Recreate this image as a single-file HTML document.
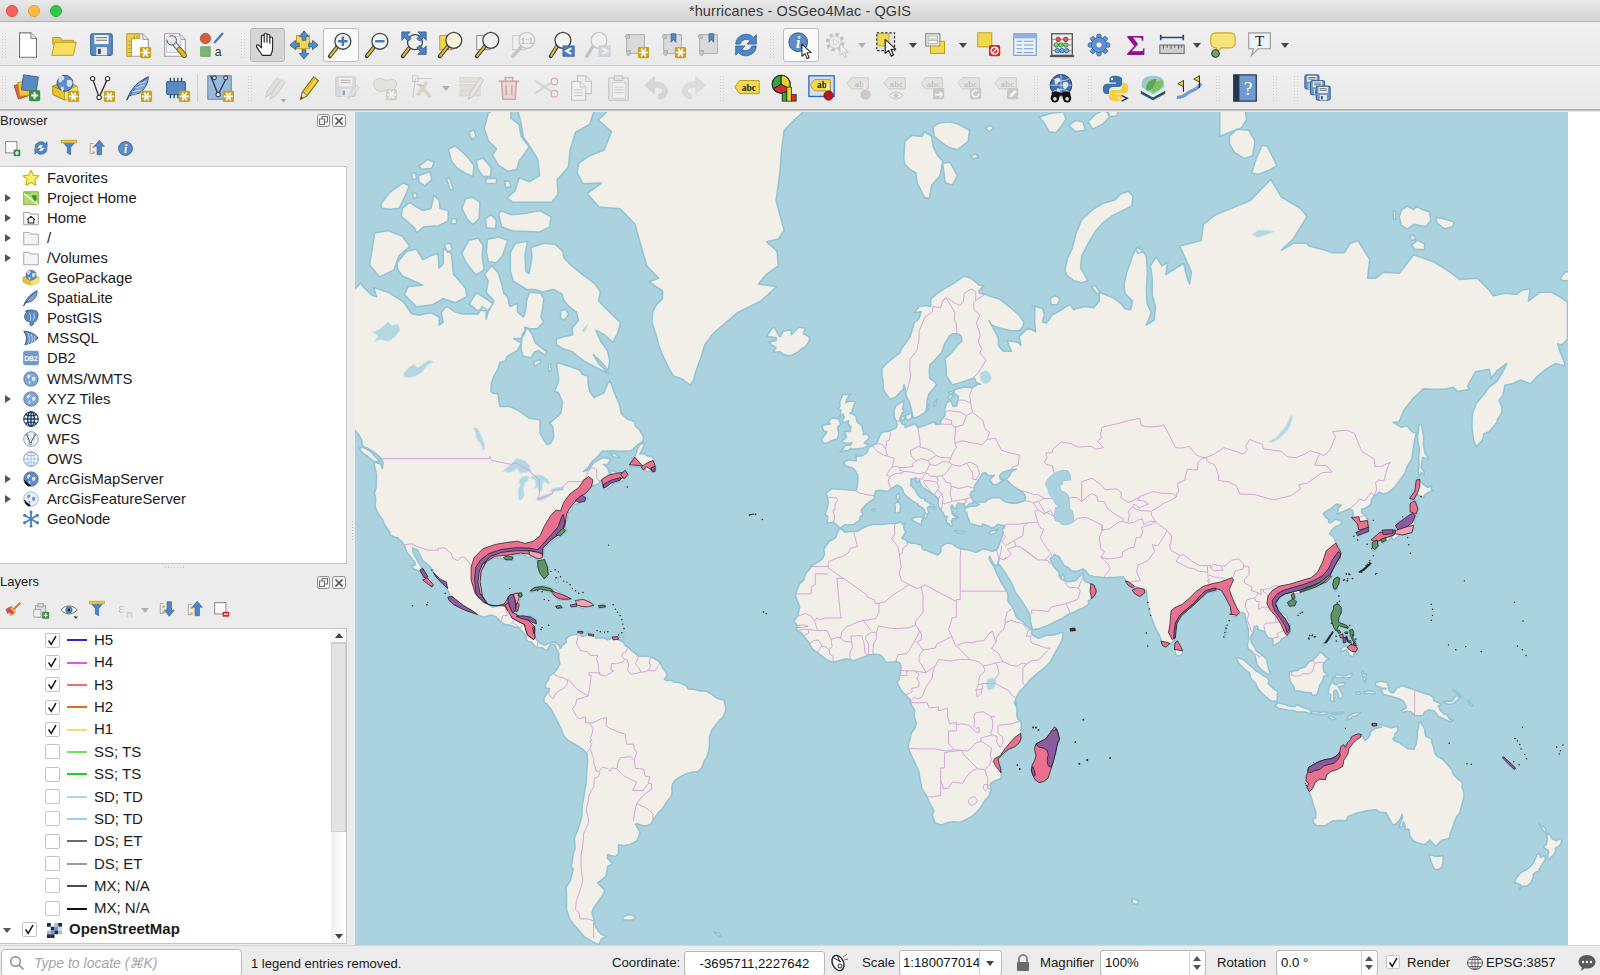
<!DOCTYPE html>
<html lang="en"><head><meta charset="utf-8"><title>*hurricanes - OSGeo4Mac - QGIS</title>
<style>
*{box-sizing:border-box;margin:0;padding:0}
html,body{width:1600px;height:975px;overflow:hidden;background:#ececec;font-family:"Liberation Sans",sans-serif;color:#111}
#app{position:relative;width:1600px;height:975px;overflow:hidden;background:#ececec}
.abs{position:absolute}
#title{left:0;top:0;width:1600px;height:22px;background:linear-gradient(#e9e9e9,#d3d3d3);border-bottom:1px solid #b4b4b4;text-align:center;font-size:14.5px;line-height:22px;color:#3a3a3a;letter-spacing:.1px}
.tl{position:absolute;top:5px;width:12px;height:12px;border-radius:50%}
#tb1{left:0;top:23px;width:1600px;height:43px;background:linear-gradient(#f1f1f1,#e9e9e9);border-bottom:1px solid #d0d0d0}
#tb2{left:0;top:67px;width:1600px;height:42px;background:linear-gradient(#f0f0f0,#e8e8e8)}
#tbline{left:0;top:109px;width:1600px;height:2px;background:linear-gradient(#a8a8a8,#c9c9c9)}
.ic{position:absolute;width:32px;height:32px}
.btn{position:absolute;border:1px solid #bdbdbd;border-radius:3px}
.hd{position:absolute;width:6px;height:26px;background-image:radial-gradient(circle,#cfcfcf 0.7px,transparent 1px);background-size:3px 3px}
.dd{position:absolute;width:0;height:0;border-left:4px solid transparent;border-right:4px solid transparent;border-top:5px solid #444}
.dd.g{border-top-color:#b0b0b0}
.ptitle{position:absolute;left:0px;font-size:13px;color:#222}
.tree{position:absolute;background:#fff;border:1px solid #c6c6c6;border-left:none}
.row{position:absolute;left:47px;font-size:14.8px;line-height:20px;color:#1a1a1a;white-space:nowrap}
.arr{position:absolute;left:5px;width:0;height:0;border-top:4px solid transparent;border-bottom:4px solid transparent;border-left:6px solid #555}
.lrow{position:absolute;left:94px;font-size:15px;line-height:20px;color:#1a1a1a;white-space:nowrap}
.cb{position:absolute;left:45px;width:15px;height:15px;border:1px solid #c4c4c4;border-radius:2px;background:#fff}
.ln{position:absolute;left:67px;width:20px;height:1.5px}
#status{left:0;top:945px;width:1600px;height:30px;background:#ececec;border-top:1px solid #d6d6d6;font-size:13.5px}
.st{position:absolute;top:10px;font-size:13.2px;line-height:16px;white-space:nowrap;color:#1a1a1a}
.inp{position:absolute;background:#fff;border:1px solid #b9b9b9;border-radius:3px;font-size:13.2px;line-height:20px;white-space:nowrap}
</style></head><body><div id="app">
<div id="title" class="abs"><span class="tl" style="left:6px;background:#fc605c;border:.5px solid #df4744"></span><span class="tl" style="left:28px;background:#fdbc40;border:.5px solid #de9f34"></span><span class="tl" style="left:50px;background:#34c84a;border:.5px solid #27aa35"></span>*hurricanes - OSGeo4Mac - QGIS</div>
<div id="tb1" class="abs"></div><div id="tb2" class="abs"></div><div id="tbline" class="abs"></div>
<div class="hd" style="left:1px;top:31.799999999999997px"></div>
<div class="hd" style="left:1px;top:75.3px"></div>
<div class="btn" style="left:250px;top:27.799999999999997px;width:35px;height:34px;background:#d6d6d6;border-color:#b8b8b8"></div>
<div class="btn" style="left:323px;top:27.799999999999997px;width:36px;height:34px;background:#fafafa"></div>
<div class="btn" style="left:783px;top:27.799999999999997px;width:36px;height:34px;background:#fafafa"></div>
<svg class="ic" style="left:13.0px;top:29.8px;width:30px;height:30px" viewBox="0 0 32 32"><path d="M7 3h12l6 6v20h-18z" fill="#fff" stroke="#777" stroke-width="1.2"/><path d="M19 3v6h6" fill="#e4e4e4" stroke="#777" stroke-width="1"/></svg>
<svg class="ic" style="left:49.0px;top:29.8px;width:30px;height:30px" viewBox="0 0 32 32"><path d="M4 8h8l2 3h12v4H4z" fill="#e9c93a" stroke="#b8991c" stroke-width="1"/><path d="M3 27l3-14h23l-3 14z" fill="#f7df63" stroke="#b8991c" stroke-width="1"/></svg>
<svg class="ic" style="left:86.0px;top:29.8px;width:30px;height:30px" viewBox="0 0 32 32"><rect x="5" y="4" width="23" height="23" rx="2" fill="#5a8ac2" stroke="#3b689f" stroke-width="1.2"/><rect x="8.91" y="5.38" width="15.180000000000001" height="9.66" fill="#f3f3f3"/><line x1="10.75" y1="8.14" x2="22.25" y2="8.14" stroke="#666" stroke-width="1"/><line x1="10.75" y1="10.899999999999999" x2="22.25" y2="10.899999999999999" stroke="#666" stroke-width="1"/><rect x="10.98" y="18.259999999999998" width="11.5" height="8.74" fill="#e8e8e8"/><rect x="12.82" y="20.099999999999998" width="2.99" height="5.52" fill="#2d4f7d"/></svg>
<svg class="ic" style="left:123.0px;top:29.8px;width:30px;height:30px" viewBox="0 0 32 32"><path d="M8 4h13l6 6v18h-19z" fill="#fff" stroke="#999" stroke-width="1.2"/><path d="M21 4v6h6" fill="#e4e4e4" stroke="#999" stroke-width="1"/><path d="M4 4h14v5H9v19H4z" fill="#f0d050" stroke="#b8991c" stroke-width="1"/><path d="M6 12h2M6 16h2M6 20h2M6 24h2M12 6v2M15 6v2" stroke="#9c8216" stroke-width="1"/><rect x="18" y="18" width="12" height="12" rx="1.5" fill="#c9a21f"/><g stroke="#fff" stroke-width="1.8" stroke-linecap="round"><line x1="19.9" y1="24.0" x2="28.1" y2="24.0"/><line x1="22.0" y1="20.5" x2="26.0" y2="27.5"/><line x1="26.0" y1="20.5" x2="22.0" y2="27.5"/></g></svg>
<svg class="ic" style="left:160.0px;top:29.8px;width:30px;height:30px" viewBox="0 0 32 32"><path d="M5 4h16l6 6v18h-22z" fill="#fff" stroke="#999" stroke-width="1.2"/><path d="M21 4v6h6" fill="#e4e4e4" stroke="#999" stroke-width="1"/><rect x="7" y="7" width="15" height="17" fill="#eef2fb" stroke="#b8c6e6" stroke-width="1"/><line x1="14" y1="13" x2="26" y2="27" stroke="#4a4a4a" stroke-width="5.4" stroke-linecap="round"/><line x1="14" y1="13" x2="26" y2="27" stroke="#e6e6e6" stroke-width="3.6" stroke-linecap="round"/><line x1="20.500" y1="20.600" x2="26" y2="27" stroke="#7b6312" stroke-width="5.400" stroke-linecap="round"/><line x1="20.500" y1="20.600" x2="26" y2="27" stroke="#e3b82c" stroke-width="3.600" stroke-linecap="round"/><circle cx="12.500" cy="11" r="5" fill="#e6e6e6" stroke="#4a4a4a" stroke-width="1"/><path d="M12.500 11l-6-1l2-6z" fill="#eef2fb"/></svg>
<svg class="ic" style="left:197.0px;top:29.8px;width:30px;height:30px" viewBox="0 0 32 32"><circle cx="9" cy="9" r="5.5" fill="#d2603a" stroke="#a9431f" stroke-width=".8"/><rect x="4" y="18" width="10" height="10" fill="#7fb37a" stroke="#5a9456" stroke-width=".8"/><line x1="19" y1="13" x2="27" y2="4" stroke="#4b7dbd" stroke-width="2.6" stroke-linecap="round"/><text x="19" y="28" font-size="13" font-family="Liberation Sans,sans-serif" fill="#333">a</text></svg>
<svg class="ic" style="left:252.0px;top:29.8px;width:30px;height:30px" viewBox="0 0 32 32"><path d="M11 27c-2-3-5-7-6-9c-1-2 1-3 3-1l2 2V7c0-2 3-2 3 0v6V5c0-2 3-2 3 0v8V6c0-2 3-2 3 0v8V9c0-2 3-2 3 0v10c0 4-1 6-2 8z" fill="#fff" stroke="#222" stroke-width="1.2" stroke-linejoin="round"/></svg>
<svg class="ic" style="left:289.0px;top:29.8px;width:30px;height:30px" viewBox="0 0 32 32"><rect x="8" y="6" width="14" height="14" fill="#f3d94a" stroke="#b8991c" stroke-width="1"/><g fill="#5a8ac2" stroke="#2f5f9c" stroke-width=".9"><path d="M16 1l5 6h-3v4h-4V7h-3z"/><path d="M16 31l5-6h-3v-4h-4v4h-3z"/><path d="M1 16l6-5v3h4v4H7v3z"/><path d="M31 16l-6-5v3h-4v4h4v3z"/></g></svg>
<svg class="ic" style="left:326.0px;top:29.8px;width:30px;height:30px" viewBox="0 0 32 32"><line x1="12.05" y1="17.95" x2="4" y2="28" stroke="#3a3a3a" stroke-width="4.2" stroke-linecap="round"/><line x1="11.05" y1="18.95" x2="4.5" y2="27.5" stroke="#e3b82c" stroke-width="2.2" stroke-linecap="round"/><circle cx="18" cy="12" r="8.5" fill="#f4f4f0" stroke="#444" stroke-width="1.4"/><path d="M18 7v10M13 12h10" stroke="#3f78be" stroke-width="2.6"/></svg>
<svg class="ic" style="left:363.0px;top:29.8px;width:30px;height:30px" viewBox="0 0 32 32"><line x1="12.05" y1="17.95" x2="4" y2="28" stroke="#3a3a3a" stroke-width="4.2" stroke-linecap="round"/><line x1="11.05" y1="18.95" x2="4.5" y2="27.5" stroke="#e3b82c" stroke-width="2.2" stroke-linecap="round"/><circle cx="18" cy="12" r="8.5" fill="#f4f4f0" stroke="#444" stroke-width="1.4"/><path d="M13 12h10" stroke="#3f78be" stroke-width="2.6"/></svg>
<svg class="ic" style="left:399.0px;top:29.8px;width:30px;height:30px" viewBox="0 0 32 32"><line x1="11.4" y1="18.6" x2="4" y2="28" stroke="#3a3a3a" stroke-width="4.2" stroke-linecap="round"/><line x1="10.4" y1="19.6" x2="4.5" y2="27.5" stroke="#e3b82c" stroke-width="2.2" stroke-linecap="round"/><circle cx="17" cy="13" r="8" fill="#f0f0ee" stroke="#444" stroke-width="1.4"/><g fill="#4c80c0" stroke="#2c5a96" stroke-width=".8"><path d="M3 2h9l-3 3l4 4l-3 3l-4-4l-3 3z"/><path d="M29 2h-9l3 3l-4 4l3 3l4-4l3 3z"/><path d="M29 26h-9l3-3l-4-4l3-3l4 4l3-3z"/></g></svg>
<svg class="ic" style="left:436.0px;top:29.8px;width:30px;height:30px" viewBox="0 0 32 32"><rect x="4" y="6" width="14" height="15" fill="#f3d94a" stroke="#b8991c" stroke-width="1"/><line x1="13.05" y1="16.95" x2="4" y2="28" stroke="#3a3a3a" stroke-width="4.2" stroke-linecap="round"/><line x1="12.05" y1="17.95" x2="4.5" y2="27.5" stroke="#e3b82c" stroke-width="2.2" stroke-linecap="round"/><circle cx="19" cy="11" r="8.5" fill="#f6f2d8" stroke="#444" stroke-width="1.4"/></svg>
<svg class="ic" style="left:473.0px;top:29.8px;width:30px;height:30px" viewBox="0 0 32 32"><rect x="4" y="6" width="14" height="15" fill="#f3f3f3" stroke="#888" stroke-width="1"/><line x1="13.05" y1="16.95" x2="4" y2="28" stroke="#3a3a3a" stroke-width="4.2" stroke-linecap="round"/><line x1="12.05" y1="17.95" x2="4.5" y2="27.5" stroke="#e3b82c" stroke-width="2.2" stroke-linecap="round"/><circle cx="19" cy="11" r="8.5" fill="#efefef" stroke="#444" stroke-width="1.4"/></svg>
<svg class="ic" style="left:509.0px;top:29.8px;width:30px;height:30px" viewBox="0 0 32 32"><g opacity=".45"><rect x="4" y="6" width="14" height="15" fill="#f3f3f3" stroke="#999" stroke-width="1"/><line x1="13" y1="18" x2="4" y2="28" stroke="#999" stroke-width="3.6" stroke-linecap="round"/><circle cx="19" cy="11" r="8.5" fill="#f2f2f2" stroke="#999" stroke-width="1.4"/><text x="19" y="15" font-size="9.5" font-weight="bold" font-family="Liberation Sans,sans-serif" fill="#888" text-anchor="middle">1:1</text></g></svg>
<svg class="ic" style="left:547.0px;top:29.8px;width:30px;height:30px" viewBox="0 0 32 32"><line x1="11.05" y1="16.95" x2="4" y2="28" stroke="#3a3a3a" stroke-width="4.2" stroke-linecap="round"/><line x1="10.05" y1="17.95" x2="4.5" y2="27.5" stroke="#e3b82c" stroke-width="2.2" stroke-linecap="round"/><circle cx="17" cy="11" r="8.5" fill="#f4f4f0" stroke="#444" stroke-width="1.4"/><rect x="17" y="17" width="12" height="11" fill="#4c80c0" stroke="#2c5a96" stroke-width=".8"/><path d="M26 19.5l-5.5 3l5.5 3" fill="none" stroke="#fff" stroke-width="2"/></svg>
<svg class="ic" style="left:583.0px;top:29.8px;width:30px;height:30px" viewBox="0 0 32 32"><g opacity=".4"><line x1="11" y1="17" x2="4" y2="28" stroke="#888" stroke-width="3.6" stroke-linecap="round"/><circle cx="17" cy="11" r="8.5" fill="#f4f4f4" stroke="#888" stroke-width="1.4"/><rect x="17" y="17" width="12" height="11" fill="#aab4c4" stroke="#8894a6" stroke-width=".8"/><path d="M20.5 19.5l5.5 3l-5.5 3" fill="none" stroke="#fff" stroke-width="2"/></g></svg>
<svg class="ic" style="left:621.0px;top:29.8px;width:30px;height:30px" viewBox="0 0 32 32"><path d="M6 5h19v20H10v-3H6z" fill="#dadada" stroke="#aaa" stroke-width="1"/><path d="M6 5c-2 0-2 4 0 4h3V5z" fill="#c4c4c4" stroke="#aaa" stroke-width=".8"/><path d="M10 25c0 3 -4 3 -4 0v-3h4z" fill="#c4c4c4" stroke="#aaa" stroke-width=".8"/><rect x="18" y="18" width="12" height="12" rx="1.5" fill="#c9a21f"/><g stroke="#fff" stroke-width="1.8" stroke-linecap="round"><line x1="19.9" y1="24.0" x2="28.1" y2="24.0"/><line x1="22.0" y1="20.5" x2="26.0" y2="27.5"/><line x1="26.0" y1="20.5" x2="22.0" y2="27.5"/></g></svg>
<svg class="ic" style="left:658.0px;top:29.8px;width:30px;height:30px" viewBox="0 0 32 32"><path d="M6 5h19v20H10v-3H6z" fill="#dadada" stroke="#aaa" stroke-width="1"/><path d="M6 5c-2 0-2 4 0 4h3V5z" fill="#c4c4c4" stroke="#aaa" stroke-width=".8"/><path d="M10 25c0 3 -4 3 -4 0v-3h4z" fill="#c4c4c4" stroke="#aaa" stroke-width=".8"/><path d="M14 4h5v9l-2.5-3l-2.5 3z" fill="#5a8ac2" stroke="#2c5a96" stroke-width=".8"/><rect x="18" y="18" width="12" height="12" rx="1.5" fill="#c9a21f"/><g stroke="#fff" stroke-width="1.8" stroke-linecap="round"><line x1="19.9" y1="24.0" x2="28.1" y2="24.0"/><line x1="22.0" y1="20.5" x2="26.0" y2="27.5"/><line x1="26.0" y1="20.5" x2="22.0" y2="27.5"/></g></svg>
<svg class="ic" style="left:694.0px;top:29.8px;width:30px;height:30px" viewBox="0 0 32 32"><path d="M6 5h19v20H10v-3H6z" fill="#dadada" stroke="#aaa" stroke-width="1"/><path d="M6 5c-2 0-2 4 0 4h3V5z" fill="#c4c4c4" stroke="#aaa" stroke-width=".8"/><path d="M10 25c0 3 -4 3 -4 0v-3h4z" fill="#c4c4c4" stroke="#aaa" stroke-width=".8"/><path d="M16 4h5v9l-2.5-3l-2.5 3z" fill="#5a8ac2" stroke="#2c5a96" stroke-width=".8"/></svg>
<svg class="ic" style="left:731.0px;top:29.8px;width:30px;height:30px" viewBox="0 0 32 32"><g fill="#4c86c8" stroke="#2c5a96" stroke-width=".8"><path d="M5 15a11 11 0 0 1 19-7l3-3v10H17l3.5-3.5a6.5 6.5 0 0 0-10.5 3.500z"/><path d="M27 17a11 11 0 0 1-19 7l-3 3V17h10l-3.500 3.500a6.500 6.500 0 0 0 10.500-3.500z"/></g></svg>
<svg class="ic" style="left:786.0px;top:29.8px;width:30px;height:30px" viewBox="0 0 32 32"><circle cx="13" cy="13" r="10" fill="#5d8cc6" stroke="#2f5486" stroke-width="1"/><text x="13" y="19" font-size="17" font-style="italic" font-weight="bold" font-family="Liberation Serif,serif" fill="#fff" text-anchor="middle">i</text><path transform="translate(17,15) scale(1.0)" d="M0 0l0 13l3.2-2.8l2.3 5.3l2.2-1l-2.3-5.2l4.3-0.2z" fill="#fff" stroke="#222" stroke-width="1.1" stroke-linejoin="round"/></svg>
<svg class="ic" style="left:823.0px;top:29.8px;width:30px;height:30px" viewBox="0 0 32 32"><g opacity=".5"><circle cx="13" cy="13" r="8" fill="#e8e8e8" stroke="#999" stroke-width="4" stroke-dasharray="3.5 2.800"/><circle cx="13" cy="13" r="6.500" fill="#ececec" stroke="#aaa" stroke-width="1"/><path d="M11 9.500l6 3.500l-6 3.500z" fill="#fff" stroke="#aaa" stroke-width=".8"/><path d="M18 15l0 12l3-2.500l2 5l2-1l-2-5l4 0z" fill="#f6f6f6" stroke="#999" stroke-width="1"/></g></svg>
<svg class="ic" style="left:873.0px;top:29.8px;width:30px;height:30px" viewBox="0 0 32 32"><rect x="4" y="3" width="19" height="19" fill="#e3e3e3" stroke="#222" stroke-width="1.2" stroke-dasharray="2.500 2"/><rect x="5" y="4" width="12" height="13" fill="#f3d94a" stroke="#b8991c" stroke-width=".8"/><path transform="translate(13,10) scale(1.15)" d="M0 0l0 13l3.2-2.8l2.3 5.3l2.2-1l-2.3-5.2l4.3-0.2z" fill="#fff" stroke="#222" stroke-width="1.1" stroke-linejoin="round"/></svg>
<svg class="ic" style="left:922.0px;top:29.8px;width:30px;height:30px" viewBox="0 0 32 32"><rect x="4" y="4" width="15" height="13" fill="#e8e8e8" stroke="#8a8a8a" stroke-width="1"/><rect x="9" y="12" width="15" height="13" fill="#f3d94a" stroke="#b8991c" stroke-width="1"/><rect x="4" y="4" width="15" height="13" fill="#e6e6e6" stroke="#8a8a8a" stroke-width="1" opacity=".95"/><rect x="6.500" y="6.500" width="10" height="3" fill="#fff" stroke="#999" stroke-width=".7"/><rect x="6.500" y="11.500" width="10" height="3" fill="#fff" stroke="#999" stroke-width=".7"/></svg>
<svg class="ic" style="left:974.0px;top:29.8px;width:30px;height:30px" viewBox="0 0 32 32"><rect x="4" y="3" width="15" height="15" fill="#f3d94a" stroke="#b8991c" stroke-width="1"/><rect x="16" y="16" width="12" height="12" rx="2" fill="#d42a2a"/><circle cx="22" cy="22" r="3.600" fill="none" stroke="#fff" stroke-width="1.5"/><line x1="19.600" y1="24.400" x2="24.400" y2="19.600" stroke="#fff" stroke-width="1.5"/></svg>
<svg class="ic" style="left:1010.0px;top:29.8px;width:30px;height:30px" viewBox="0 0 32 32"><rect x="4" y="4" width="24" height="23" fill="#eef3fa" stroke="#6f9bd1" stroke-width="1.2"/><rect x="4" y="4" width="24" height="5" fill="#8fb3e0"/><g stroke="#6f9bd1" stroke-width="1.3"><path d="M7 12h6M15 12h10M7 16h6M15 16h10M7 20h6M15 20h10M7 24h6M15 24h10"/></g></svg>
<svg class="ic" style="left:1047.0px;top:29.8px;width:30px;height:30px" viewBox="0 0 32 32"><rect x="5" y="4" width="22" height="23" fill="#eee" stroke="#555" stroke-width="1.4"/><path d="M3 28h26" stroke="#555" stroke-width="2"/><g stroke="#777" stroke-width=".8"><path d="M5 10h22M5 16h22M5 22h22"/></g><g stroke-width=".9"><circle cx="12" cy="10" r="2.400" fill="#e05a5a" stroke="#a22"/><circle cx="20" cy="10" r="2.400" fill="#e05a5a" stroke="#a22"/><circle cx="10" cy="16" r="2.400" fill="#7cc47c" stroke="#383"/><circle cx="15" cy="16" r="2.400" fill="#7cc47c" stroke="#383"/><circle cx="20" cy="16" r="2.400" fill="#7cc47c" stroke="#383"/><circle cx="11" cy="22" r="2.400" fill="#7aa7dd" stroke="#2c5a96"/><circle cx="16" cy="22" r="2.400" fill="#7aa7dd" stroke="#2c5a96"/><circle cx="21" cy="22" r="2.400" fill="#7aa7dd" stroke="#2c5a96"/></g></svg>
<svg class="ic" style="left:1084.0px;top:29.8px;width:30px;height:30px" viewBox="0 0 32 32"><rect x="13.7" y="4.5" width="4.600" height="6" rx="1" transform="rotate(0 16 16)" fill="#5f93d6" stroke="#2c5a96" stroke-width=".7"/><rect x="13.7" y="4.5" width="4.600" height="6" rx="1" transform="rotate(45 16 16)" fill="#5f93d6" stroke="#2c5a96" stroke-width=".7"/><rect x="13.7" y="4.5" width="4.600" height="6" rx="1" transform="rotate(90 16 16)" fill="#5f93d6" stroke="#2c5a96" stroke-width=".7"/><rect x="13.7" y="4.5" width="4.600" height="6" rx="1" transform="rotate(135 16 16)" fill="#5f93d6" stroke="#2c5a96" stroke-width=".7"/><rect x="13.7" y="4.5" width="4.600" height="6" rx="1" transform="rotate(180 16 16)" fill="#5f93d6" stroke="#2c5a96" stroke-width=".7"/><rect x="13.7" y="4.5" width="4.600" height="6" rx="1" transform="rotate(225 16 16)" fill="#5f93d6" stroke="#2c5a96" stroke-width=".7"/><rect x="13.7" y="4.5" width="4.600" height="6" rx="1" transform="rotate(270 16 16)" fill="#5f93d6" stroke="#2c5a96" stroke-width=".7"/><rect x="13.7" y="4.5" width="4.600" height="6" rx="1" transform="rotate(315 16 16)" fill="#5f93d6" stroke="#2c5a96" stroke-width=".7"/><circle cx="16" cy="16" r="8" fill="#5f93d6" stroke="#2c5a96" stroke-width=".7"/><circle cx="16" cy="16" r="3.36" fill="#f2f2f2" stroke="#2c5a96" stroke-width=".7"/></svg>
<svg class="ic" style="left:1121.0px;top:29.8px;width:30px;height:30px" viewBox="0 0 32 32"><text x="16" y="27" font-size="32" font-family="Liberation Serif,serif" font-weight="bold" fill="#92108f" text-anchor="middle">Σ</text></svg>
<svg class="ic" style="left:1157.0px;top:29.8px;width:30px;height:30px" viewBox="0 0 32 32"><path d="M4 8h24M4 5v6M28 5v6" stroke="#1f4a80" stroke-width="1.800"/><rect x="3" y="16" width="26" height="9" fill="#cfcfcf" stroke="#666" stroke-width="1"/><path d="M7 16v4M11 16v3M15 16v4M19 16v3M23 16v4M26 16v3" stroke="#555" stroke-width="1"/></svg>
<svg class="ic" style="left:1208.0px;top:29.8px;width:30px;height:30px" viewBox="0 0 32 32"><path d="M8 3h16a5 5 0 0 1 5 5v6a5 5 0 0 1-5 5H14l-5 5v-5H8a5 5 0 0 1-5-5V8a5 5 0 0 1 5-5z" fill="#f7e37a" stroke="#c9a92a" stroke-width="1.200"/><circle cx="8" cy="25" r="4" fill="#6ea66a" stroke="#333" stroke-width="1.200"/></svg>
<svg class="ic" style="left:1245.0px;top:29.8px;width:30px;height:30px" viewBox="0 0 32 32"><path d="M4 3h23v17H14l-7 7l2-7H4z" fill="#eef3f7" stroke="#999" stroke-width="1.200"/><text x="15.500" y="17" font-size="16" font-family="Liberation Serif,serif" fill="#222" text-anchor="middle">T</text></svg>
<div class="hd" style="left:240px;top:31.799999999999997px"></div>
<div class="hd" style="left:769px;top:31.799999999999997px"></div>
<div class="dd g" style="left:858px;top:42.8px"></div>
<div class="dd" style="left:909px;top:42.8px"></div>
<div class="dd" style="left:959px;top:42.8px"></div>
<div class="dd" style="left:1193px;top:42.8px"></div>
<div class="dd" style="left:1281px;top:42.8px"></div>
<svg class="ic" style="left:13.0px;top:73.3px;width:30px;height:30px" viewBox="0 0 32 32"><rect x="3" y="11" width="15" height="15" transform="rotate(-18 10 18)" fill="#d9653b" stroke="#a9431f" stroke-width=".8"/><rect x="6" y="9" width="15" height="15" transform="rotate(-8 13 16)" fill="#f0c646" stroke="#b8991c" stroke-width=".8"/><rect x="10" y="3" width="16" height="16" transform="rotate(8 18 11)" fill="#5a8ac2" stroke="#2f5486" stroke-width=".8"/><rect x="17" y="18" width="12" height="12" rx="2" fill="#3f8f4a"/><path d="M23 20.500v7M19.500 24h7" stroke="#fff" stroke-width="2.200"/></svg>
<svg class="ic" style="left:50.0px;top:73.3px;width:30px;height:30px" viewBox="0 0 32 32"><path d="M3 14l13-5l13 5v9l-13 6l-13-6z" fill="#e9c52f" stroke="#9c8216" stroke-width="1"/><path d="M3 14l13 6l13-6M16 20v9" fill="none" stroke="#9c8216" stroke-width="1"/><path d="M16 20l13-6v9l-13 6z" fill="#f6e27a"/><circle cx="16" cy="11" r="8.5" fill="#5d8cc6" stroke="#2f5486" stroke-width="1"/><path d="M10 4q3-2 5 0q1 3-2 4q-1 3-3 2q-2-3 0-6zM18 8q4-2 6 1q0 4-3 6q-3 0-3-3zM12 14q2 0 3 2q0 3-2 4q-2-2-1-6z" fill="#dfe9f5" opacity=".9"/><rect x="19" y="19" width="12" height="12" rx="1.5" fill="#c9a21f"/><g stroke="#fff" stroke-width="1.8" stroke-linecap="round"><line x1="20.9" y1="25.0" x2="29.1" y2="25.0"/><line x1="23.0" y1="21.5" x2="27.0" y2="28.5"/><line x1="27.0" y1="21.5" x2="23.0" y2="28.5"/></g></svg>
<svg class="ic" style="left:86.0px;top:73.3px;width:30px;height:30px" viewBox="0 0 32 32"><path d="M7 6l7 20l9-20" fill="none" stroke="#333" stroke-width="1.400"/><g fill="#fff" stroke="#333" stroke-width="1.200"><circle cx="7" cy="6" r="2.300"/><circle cx="23" cy="6" r="2.300"/><circle cx="14" cy="26" r="2.300"/></g><rect x="19" y="19" width="12" height="12" rx="1.5" fill="#c9a21f"/><g stroke="#fff" stroke-width="1.8" stroke-linecap="round"><line x1="20.9" y1="25.0" x2="29.1" y2="25.0"/><line x1="23.0" y1="21.5" x2="27.0" y2="28.5"/><line x1="27.0" y1="21.5" x2="23.0" y2="28.5"/></g></svg>
<svg class="ic" style="left:123.0px;top:73.3px;width:30px;height:30px" viewBox="0 0 32 32"><path d="M4 29c3-9 9-19 23-25c0 6-3 13-9 17c-5 3-9 3-11 3z" fill="#7ea6d6" stroke="#2f5486" stroke-width="1"/><path d="M4 29c5-9 12-17 22-24" fill="none" stroke="#2f5486" stroke-width="1"/><g stroke="#dfeaf6" stroke-width=".8"><path d="M10 20l9-2M13 16l9-3M16 12l8-3M9 24l7-1"/></g><rect x="19" y="19" width="12" height="12" rx="1.5" fill="#c9a21f"/><g stroke="#fff" stroke-width="1.8" stroke-linecap="round"><line x1="20.9" y1="25.0" x2="29.1" y2="25.0"/><line x1="23.0" y1="21.5" x2="27.0" y2="28.5"/><line x1="27.0" y1="21.5" x2="23.0" y2="28.5"/></g></svg>
<svg class="ic" style="left:161.0px;top:73.3px;width:30px;height:30px" viewBox="0 0 32 32"><rect x="6" y="9" width="20" height="14" rx="1.500" fill="#5a8ac2" stroke="#2f5486" stroke-width="1"/><g stroke="#2f5486" stroke-width="1.600"><path d="M10 5v4M14 5v4M18 5v4M22 5v4M10 23v4M14 23v4M18 23v4"/></g><rect x="19" y="19" width="12" height="12" rx="1.5" fill="#c9a21f"/><g stroke="#fff" stroke-width="1.8" stroke-linecap="round"><line x1="20.9" y1="25.0" x2="29.1" y2="25.0"/><line x1="23.0" y1="21.5" x2="27.0" y2="28.5"/><line x1="27.0" y1="21.5" x2="23.0" y2="28.5"/></g></svg>
<svg class="ic" style="left:205.0px;top:73.3px;width:30px;height:30px" viewBox="0 0 32 32"><rect x="3" y="3" width="25" height="25" fill="#9db9dc" stroke="#5c82b4" stroke-width="1"/><path d="M6 3l8 20l10-20" fill="none" stroke="#2d3f58" stroke-width="1.400"/><g fill="#fff" stroke="#2d3f58" stroke-width="1.200"><circle cx="10" cy="5" r="2"/><circle cx="22" cy="5" r="2"/><circle cx="14" cy="23" r="2.300"/></g><rect x="19" y="19" width="12" height="12" rx="1.5" fill="#c9a21f"/><g stroke="#fff" stroke-width="1.8" stroke-linecap="round"><line x1="20.9" y1="25.0" x2="29.1" y2="25.0"/><line x1="23.0" y1="21.5" x2="27.0" y2="28.5"/><line x1="27.0" y1="21.5" x2="23.0" y2="28.5"/></g></svg>
<svg class="ic" style="left:260.0px;top:73.3px;width:30px;height:30px" viewBox="0 0 32 32"><g opacity=".5"><path d="M6 26l2-7l10-14l4 3l-10 14z" fill="#d4d0c8" stroke="#aaa" stroke-width="1"/><path d="M11 28l2-7l10-14l4 3l-10 14z" fill="#dcd8d0" stroke="#aaa" stroke-width="1"/></g><path d="M22 28h6l-3 3z" fill="#999"/></svg>
<svg class="ic" style="left:295.0px;top:73.3px;width:30px;height:30px" viewBox="0 0 32 32"><path d="M6 28l2-8l12-16l5 4l-12 16z" fill="#f2d544" stroke="#7b6a12" stroke-width="1.100"/><path d="M6 28l2-8l5 4z" fill="#f0e6c8" stroke="#7b6a12" stroke-width=".9"/><path d="M6 28l.8-3l2 1.600z" fill="#333"/><path d="M11 18l11-14.500M10 21l12-16" stroke="#c9aa22" stroke-width=".8" fill="none"/></svg>
<svg class="ic" style="left:332.0px;top:73.3px;width:30px;height:30px" viewBox="0 0 32 32"><g opacity=".45"><rect x="4" y="4" width="21" height="21" rx="2" fill="#c4c4c4" stroke="#aaa" stroke-width="1.2"/><rect x="7.57" y="5.26" width="13.860000000000001" height="8.82" fill="#f3f3f3"/><line x1="9.25" y1="7.779999999999999" x2="19.75" y2="7.779999999999999" stroke="#666" stroke-width="1"/><line x1="9.25" y1="10.3" x2="19.75" y2="10.3" stroke="#666" stroke-width="1"/><rect x="9.46" y="17.02" width="10.5" height="7.98" fill="#e8e8e8"/><rect x="11.14" y="18.7" width="2.73" height="5.04" fill="#2d4f7d"/><path d="M17 27l1.500-5l8-9l3 2.500l-8 9z" fill="#d8d4cc" stroke="#aaa" stroke-width="1"/></g></svg>
<svg class="ic" style="left:370.0px;top:73.3px;width:30px;height:30px" viewBox="0 0 32 32"><g opacity=".5"><path d="M4 11c0-5 7-6 11-4c4 2 8-2 12 1c3 3 1 9-3 10c-4 1-7-1-10 1c-4 2-10-1-10-8z" fill="#d8d8d2" stroke="#aaa" stroke-width="1"/><rect x="17" y="17" width="12" height="12" rx="1.5" fill="#bdb9a6"/><g stroke="#fff" stroke-width="1.8" stroke-linecap="round"><line x1="18.9" y1="23.0" x2="27.1" y2="23.0"/><line x1="21.0" y1="19.5" x2="25.0" y2="26.5"/><line x1="25.0" y1="19.5" x2="21.0" y2="26.5"/></g></g></svg>
<svg class="ic" style="left:408.0px;top:73.3px;width:30px;height:30px" viewBox="0 0 32 32"><g opacity=".45" fill="none" stroke="#999"><rect x="5" y="3" width="6" height="6" stroke-width="1"/><path d="M8 6h18M8 6l-3 20" stroke-width="1"/><path d="M12 12l12 14M20 10l-10 14" stroke-width="4" stroke="#bdb9a6"/><path d="M9 12l8 2" stroke-width="1.500"/></g></svg>
<svg class="ic" style="left:457.0px;top:73.3px;width:30px;height:30px" viewBox="0 0 32 32"><g opacity=".45"><rect x="3" y="5" width="22" height="5.500" fill="#d2cfc0" stroke="#aaa" stroke-width=".6"/><rect x="3" y="12" width="22" height="5.500" fill="#d2cfc0" stroke="#aaa" stroke-width=".6"/><rect x="3" y="19" width="22" height="5.500" fill="#d2cfc0" stroke="#aaa" stroke-width=".6"/><path d="M12 28l1.500-6l11-17l4 2.500l-11 17z" fill="#e0dcd4" stroke="#999" stroke-width="1"/></g></svg>
<svg class="ic" style="left:494.0px;top:73.3px;width:30px;height:30px" viewBox="0 0 32 32"><g opacity=".4" fill="none" stroke="#b04a4a" stroke-width="1.800"><path d="M5 9h22M12 9V5h8v4"/><path d="M8 9l1.500 19h13L24 9z" fill="#e6bcbc"/><path d="M13 13v11M19 13v11"/></g></svg>
<svg class="ic" style="left:531.0px;top:73.3px;width:30px;height:30px" viewBox="0 0 32 32"><g opacity=".45" fill="none" stroke="#999" stroke-width="1.500"><path d="M4 8l18 12M4 22l18-12" stroke="#bbb" stroke-width="2.500"/><circle cx="25" cy="9" r="3.500" stroke="#c07070"/><circle cx="25" cy="22" r="3.500" stroke="#c07070"/></g></svg>
<svg class="ic" style="left:567.0px;top:73.3px;width:30px;height:30px" viewBox="0 0 32 32"><g opacity=".4"><path d="M11 3h9l6 6v13h-15z" fill="#f4f4f4" stroke="#888" stroke-width="1.2"/><path d="M20 3v6h6" fill="#e4e4e4" stroke="#888" stroke-width="1"/><path d="M5 9h9l6 6v14h-15z" fill="#f7f7f7" stroke="#888" stroke-width="1.2"/><path d="M14 9v6h6" fill="#e4e4e4" stroke="#888" stroke-width="1"/><path d="M8 18h9M8 21h9M8 24h9" stroke="#999" stroke-width="1"/></g></svg>
<svg class="ic" style="left:604.0px;top:73.3px;width:30px;height:30px" viewBox="0 0 32 32"><g opacity=".4"><rect x="5" y="5" width="21" height="24" rx="1" fill="#ddd" stroke="#888" stroke-width="1.200"/><rect x="11" y="3" width="9" height="5" fill="#ccc" stroke="#888" stroke-width="1"/><rect x="9" y="10" width="14" height="17" fill="#f6f6f6" stroke="#999" stroke-width=".8"/><path d="M11 15h10M11 18h10M11 21h10" stroke="#999" stroke-width="1"/></g></svg>
<svg class="ic" style="left:642.0px;top:73.3px;width:30px;height:30px" viewBox="0 0 32 32"><path d="M3 13l10-9v5.500c9 0 14 4 14 10c0 5-4 8-9 8v-5c3 0 4-1.500 4-3.500c0-2.500-3-4-9-4V22z" fill="#d2d2d2" stroke="#c4c4c4" stroke-width=".8" opacity=".8"/></svg>
<svg class="ic" style="left:678.0px;top:73.3px;width:30px;height:30px" viewBox="0 0 32 32"><path d="M29 13l-10-9v5.500c-9 0-14 4-14 10c0 5 4 8 9 8v-5c-3 0-4-1.500-4-3.500c0-2.500 3-4 9-4V22z" fill="#d8d8d8" stroke="#cbcbcb" stroke-width=".8" opacity=".75"/></svg>
<svg class="ic" style="left:732.0px;top:73.3px;width:30px;height:30px" viewBox="0 0 32 32"><path d="M8 8h21v14h-21l-5-7.0z" fill="#f3d94a" stroke="#b8991c" stroke-width="1"/><text x="18.0" y="19.4" font-family="Liberation Serif,serif" font-weight="bold" font-size="10" fill="#222" text-anchor="middle">abc</text></svg>
<svg class="ic" style="left:769.0px;top:73.3px;width:30px;height:30px" viewBox="0 0 32 32"><circle cx="13" cy="12" r="9.500" fill="#e8d12c" stroke="#222" stroke-width="1.300"/><path d="M13 12V2.500A9.500 9.500 0 0 0 4.800 16.700z" fill="#39a239" stroke="#222" stroke-width="1"/><path d="M13 12l8.200 4.700A9.500 9.500 0 0 0 13 2.500z" fill="#e8d12c" stroke="#222" stroke-width="1"/><path d="M13 12l-8.200 4.700A9.500 9.500 0 0 0 21.200 16.700z" fill="#d03030" stroke="#222" stroke-width="1"/><rect x="14" y="21" width="5" height="9" fill="#39a239" stroke="#222" stroke-width=".8"/><rect x="19" y="15" width="5" height="15" fill="#e8d12c" stroke="#222" stroke-width=".8"/><rect x="24" y="23" width="5" height="7" fill="#d03030" stroke="#222" stroke-width=".8"/></svg>
<svg class="ic" style="left:807.0px;top:73.3px;width:30px;height:30px" viewBox="0 0 32 32"><rect x="2" y="3" width="27" height="22" fill="#cfe0f7" stroke="#2f62d0" stroke-width="1.400"/><path d="M8 7h17v12h-17l-5-6.0z" fill="#f3d94a" stroke="#b8991c" stroke-width="1"/><text x="16.0" y="16.4" font-family="Liberation Serif,serif" font-weight="bold" font-size="10" fill="#222" text-anchor="middle">ab</text><path d="M22 11v11" stroke="#eee" stroke-width="2.500"/><circle cx="23" cy="24" r="5" fill="#b01c1c" stroke="#6e0e0e" stroke-width=".8"/></svg>
<svg class="ic" style="left:844.0px;top:73.3px;width:30px;height:30px" viewBox="0 0 32 32"><g opacity=".5"><path d="M8 5h18v12h-18l-5-6.0z" fill="#dcdad0" stroke="#aaa" stroke-width="1"/><text x="16.5" y="14.4" font-family="Liberation Serif,serif" font-weight="bold" font-size="9.5" fill="#999" text-anchor="middle">ab</text><path d="M22 9v12" stroke="#eee" stroke-width="2.500"/><circle cx="23" cy="23" r="5" fill="#b9a9a9" stroke="#999" stroke-width=".8"/></g></svg>
<svg class="ic" style="left:881.0px;top:73.3px;width:30px;height:30px" viewBox="0 0 32 32"><g opacity=".5"><path d="M8 5h18v12h-18l-5-6.0z" fill="#dcdad0" stroke="#aaa" stroke-width="1"/><text x="16.5" y="14.4" font-family="Liberation Serif,serif" font-weight="bold" font-size="9.5" fill="#999" text-anchor="middle">abc</text><path d="M9 24c4-5 10-5 14 0c-4 5-10 5-14 0z" fill="#eee" stroke="#999" stroke-width="1"/><circle cx="16" cy="24" r="2.500" fill="#aaa"/></g></svg>
<svg class="ic" style="left:918.0px;top:73.3px;width:30px;height:30px" viewBox="0 0 32 32"><g opacity=".5"><path d="M8 5h18v12h-18l-5-6.0z" fill="#dcdad0" stroke="#aaa" stroke-width="1"/><text x="16.5" y="14.4" font-family="Liberation Serif,serif" font-weight="bold" font-size="9.5" fill="#999" text-anchor="middle">abc</text><rect x="16" y="16" width="12" height="12" rx="1.500" fill="#a9a9a9"/><path d="M18 22h5v-3l4 4l-4 4v-3h-5z" fill="#fff"/></g></svg>
<svg class="ic" style="left:955.0px;top:73.3px;width:30px;height:30px" viewBox="0 0 32 32"><g opacity=".5"><path d="M8 5h18v12h-18l-5-6.0z" fill="#dcdad0" stroke="#aaa" stroke-width="1"/><text x="16.5" y="14.4" font-family="Liberation Serif,serif" font-weight="bold" font-size="9.5" fill="#999" text-anchor="middle">abc</text><rect x="16" y="16" width="12" height="12" rx="1.500" fill="#a9a9a9"/><path d="M25.500 22a3.500 3.500 0 1 1-1.500-2.800" fill="none" stroke="#fff" stroke-width="1.800"/></g></svg>
<svg class="ic" style="left:992.0px;top:73.3px;width:30px;height:30px" viewBox="0 0 32 32"><g opacity=".5"><path d="M8 5h18v12h-18l-5-6.0z" fill="#dcdad0" stroke="#aaa" stroke-width="1"/><text x="16.5" y="14.4" font-family="Liberation Serif,serif" font-weight="bold" font-size="9.5" fill="#999" text-anchor="middle">abc</text><rect x="16" y="16" width="12" height="12" rx="1.500" fill="#a9a9a9"/><path d="M18.500 26l1-3l5-5l2 2l-5 5z" fill="#fff"/></g></svg>
<svg class="ic" style="left:1046.0px;top:73.3px;width:30px;height:30px" viewBox="0 0 32 32"><circle cx="16" cy="13" r="11.5" fill="#3f6fae" stroke="#1d3c68" stroke-width="1"/><path d="M10 6q3-2 5 0q1 3-2 4q-1 3-3 2q-2-3 0-6zM18 10q4-2 6 1q0 4-3 6q-3 0-3-3zM12 16q2 0 3 2q0 3-2 4q-2-2-1-6z" fill="#e8eef6" opacity=".9"/><path d="M16 1.500v23M4.500 13h23M7 6q9 5 18 0M7 20q9-5 18 0" fill="none" stroke="#fff" stroke-width=".8" opacity=".8"/><g fill="#111"><rect x="6" y="20" width="8.500" height="7" rx="1.500"/><rect x="17.500" y="20" width="8.500" height="7" rx="1.500"/><rect x="13" y="21" width="6" height="3"/><circle cx="9.500" cy="27" r="4.500"/><circle cx="22.500" cy="27" r="4.500"/></g><circle cx="9.500" cy="27.500" r="2" fill="#ddd"/><circle cx="22.500" cy="27.500" r="2" fill="#ddd"/></svg>
<svg class="ic" style="left:1101.0px;top:73.3px;width:30px;height:30px" viewBox="0 0 32 32"><path d="M15 3c-5 0-6 2-6 4v3h7v1.500H6c-3 0-4 3-4 5.500s1 5.500 4 5.500h2.500v-3.500c0-2.500 2-4 4.500-4h6c2 0 3.500-1.500 3.500-3.500V7c0-2-2-4-8-4z" fill="#3b74aa"/><circle cx="11.700" cy="6.300" r="1.200" fill="#fff"/><path d="M16 30c5 0 6-2 6-4v-3h-7v-1.500h10c3 0 4-3 4-5.500s-1-5.500-4-5.500h-2.500V14c0 2.500-2 4-4.500 4h-6c-2 0-3.500 1.500-3.500 3.500V26c0 2 2 4 8 4z" fill="#f5cf3e"/><circle cx="19.300" cy="26.700" r="1.200" fill="#fff"/><path d="M22 24l6 3l-6 3" fill="none" stroke="#222" stroke-width="1.400"/></svg>
<svg class="ic" style="left:1138.0px;top:73.3px;width:30px;height:30px" viewBox="0 0 32 32"><path d="M3 19l13-7l13 7v3l-13 7l-13-7z" fill="#2f5560"/><path d="M3 16l13-7l13 7v3l-13 7l-13-7z" fill="#dfeeea"/><path d="M4 12c0-6 5-9 12-9s12 3 12 9v3l-12 8L4 15z" fill="#8fc4c4" opacity=".9"/><path d="M9 19c-2-7 3-12 10-13c1 6-2 12-10 13z" fill="#5fa84e"/><path d="M15 21c0-8 5-13 11-14c2 6-2 13-11 14z" fill="#7cc263"/></svg>
<svg class="ic" style="left:1175.0px;top:73.3px;width:30px;height:30px" viewBox="0 0 32 32"><path d="M2 26c8 1 10-5 16-7s8-5 10-8" fill="none" stroke="#6d9bd4" stroke-width="3.500"/><path d="M9 8v12M26 3v13" stroke="#222" stroke-width="1.200"/><path d="M9 8l-6 3.500l6 3z" fill="#f0d040" stroke="#222" stroke-width=".8"/><path d="M26 3l-6 3.500l6 3z" fill="#f0d040" stroke="#222" stroke-width=".8"/></svg>
<svg class="ic" style="left:1230.0px;top:73.3px;width:30px;height:30px" viewBox="0 0 32 32"><rect x="4" y="2" width="24" height="28" fill="#6f9bd1" stroke="#1d2c40" stroke-width="1.200"/><rect x="4" y="2" width="6" height="28" fill="#22364f"/><text x="19.500" y="23" font-size="20" font-family="Liberation Serif,serif" fill="#fff" text-anchor="middle">?</text></svg>
<svg class="ic" style="left:1303.0px;top:73.3px;width:30px;height:30px" viewBox="0 0 32 32"><rect x="2" y="2" width="15" height="15" rx="2" fill="#6f97c8" stroke="#3b689f" stroke-width="1.2"/><rect x="4.550000000000001" y="2.9" width="9.9" height="6.3" fill="#f3f3f3"/><line x1="5.75" y1="4.699999999999999" x2="13.25" y2="4.699999999999999" stroke="#666" stroke-width="1"/><line x1="5.75" y1="6.5" x2="13.25" y2="6.5" stroke="#666" stroke-width="1"/><rect x="5.9" y="11.3" width="7.5" height="5.7" fill="#e8e8e8"/><rect x="7.1000000000000005" y="12.5" width="1.9500000000000002" height="3.5999999999999996" fill="#2d4f7d"/><rect x="8" y="8" width="15" height="15" rx="2" fill="#6f97c8" stroke="#3b689f" stroke-width="1.2"/><rect x="10.55" y="8.9" width="9.9" height="6.3" fill="#f3f3f3"/><line x1="11.75" y1="10.7" x2="19.25" y2="10.7" stroke="#666" stroke-width="1"/><line x1="11.75" y1="12.5" x2="19.25" y2="12.5" stroke="#666" stroke-width="1"/><rect x="11.9" y="17.3" width="7.5" height="5.7" fill="#e8e8e8"/><rect x="13.100000000000001" y="18.5" width="1.9500000000000002" height="3.5999999999999996" fill="#2d4f7d"/><rect x="14" y="14" width="15" height="15" rx="2" fill="#6f97c8" stroke="#3b689f" stroke-width="1.2"/><rect x="16.55" y="14.9" width="9.9" height="6.3" fill="#f3f3f3"/><line x1="17.75" y1="16.7" x2="25.25" y2="16.7" stroke="#666" stroke-width="1"/><line x1="17.75" y1="18.5" x2="25.25" y2="18.5" stroke="#666" stroke-width="1"/><rect x="17.9" y="23.3" width="7.5" height="5.7" fill="#e8e8e8"/><rect x="19.1" y="24.5" width="1.9500000000000002" height="3.5999999999999996" fill="#2d4f7d"/></svg>
<div class="hd" style="left:247px;top:75.3px"></div>
<div class="hd" style="left:719px;top:75.3px"></div>
<div class="hd" style="left:1033px;top:75.3px"></div>
<div class="hd" style="left:1087px;top:75.3px"></div>
<div class="hd" style="left:1215px;top:75.3px"></div>
<div class="hd" style="left:1272px;top:75.3px"></div>
<div class="hd" style="left:1293px;top:75.3px"></div>
<div class="abs" style="left:197px;top:74.3px;width:1px;height:28px;background:#cfcfcf"></div>
<div class="dd g" style="left:442px;top:86.3px"></div>
<div class="ptitle" style="top:113px;line-height:16px">Browser</div>
<div class="abs" style="left:317px;top:114px;width:13px;height:13px;border:1px solid #8e8e8e;border-radius:2.5px;background:#f4f4f4"></div><svg class="abs" style="left:319px;top:116px;width:9px;height:9px" viewBox="0 0 9 9"><rect x="3" y=".5" width="5.5" height="5.5" fill="#eee" stroke="#666" stroke-width=".9"/><rect x=".5" y="3" width="5" height="5.500" fill="#eee" stroke="#666" stroke-width=".9"/></svg><div class="abs" style="left:332px;top:114px;width:14px;height:13px;border:1px solid #8e8e8e;border-radius:2.5px;background:#f4f4f4"></div><svg class="abs" style="left:334px;top:115.5px;width:10px;height:10px" viewBox="0 0 10 10"><path d="M1.500 1.500l7 7M8.500 1.500l-7 7" stroke="#555" stroke-width="1.700"/></svg>
<svg class="abs" style="left:4.0px;top:140.0px;width:18px;height:18px" viewBox="0 0 32 32"><rect x="3" y="3" width="20" height="20" fill="#fafafa" stroke="#777" stroke-width="1.500"/><rect x="17" y="17" width="12" height="12" rx="2" fill="#3f8f4a"/><path d="M23 19.500v7M19.500 23h7" stroke="#fff" stroke-width="2"/></svg>
<svg class="abs" style="left:32.0px;top:139.0px;width:18px;height:18px" viewBox="0 0 32 32"><g fill="#4c86c8" stroke="#2c5a96" stroke-width=".8"><path d="M5 15a11 11 0 0 1 19-7l3-3v10H17l3.5-3.5a6.5 6.5 0 0 0-10.5 3.500z"/><path d="M27 17a11 11 0 0 1-19 7l-3 3V17h10l-3.500 3.500a6.500 6.500 0 0 0 10.500-3.500z"/></g></svg>
<svg class="abs" style="left:60.0px;top:139.0px;width:18px;height:18px" viewBox="0 0 32 32"><path d="M3 3h26l-10 12v13l-6-3V15z" fill="#4c86c8" stroke="#2c5a96" stroke-width="1"/><rect x="3" y="2" width="26" height="5" fill="#f0c646" stroke="#b8991c" stroke-width="1"/></svg>
<svg class="abs" style="left:88.0px;top:139.0px;width:18px;height:18px" viewBox="0 0 32 32"><path d="M4 8h6M4 8v18h6" fill="none" stroke="#999" stroke-width="1.500"/><rect x="8" y="12" width="4" height="4" fill="#f0a030"/><rect x="8" y="22" width="4" height="4" fill="#f0a030"/><path d="M20 2l9 11h-5v15h-8V13h-5z" fill="#4c86c8" stroke="#2c5a96" stroke-width="1"/></svg>
<svg class="abs" style="left:116.5px;top:139.5px;width:17px;height:17px" viewBox="0 0 32 32"><circle cx="16" cy="16" r="13" fill="#5d8cc6" stroke="#2f5486" stroke-width="1.500"/><text x="16" y="24" font-size="22" font-style="italic" font-weight="bold" font-family="Liberation Serif,serif" fill="#fff" text-anchor="middle">i</text></svg>
<div class="tree" style="left:0;top:166px;width:347px;height:398px"></div>
<svg class="abs" style="left:22.0px;top:168.5px;width:18px;height:18px" viewBox="0 0 32 32"><path d="M16 2l4.200 9l9.800 1.200l-7.200 6.800l1.900 9.800L16 24l-8.700 4.800l1.900-9.800L2 12.200l9.800-1.200z" fill="#fdf06a" stroke="#d4a700" stroke-width="1.800" stroke-linejoin="round"/></svg>
<div class="row" style="top:167.5px">Favorites</div>
<div class="arr" style="top:193.6px"></div>
<svg class="abs" style="left:22.0px;top:188.6px;width:18px;height:18px" viewBox="0 0 32 32"><rect x="3" y="5" width="26" height="23" fill="#b5da6a" stroke="#7aa33a" stroke-width="1.500"/><path d="M3 5h10l3 4H3z" fill="#8cc04a"/><path d="M3 8l26 20" stroke="#fff" stroke-width="2"/><path d="M17 11h9v8l-4 3z" fill="#2f8f3a"/></svg>
<div class="row" style="top:187.6px">Project Home</div>
<div class="arr" style="top:213.7px"></div>
<svg class="abs" style="left:22.0px;top:208.7px;width:18px;height:18px" viewBox="0 0 32 32"><path d="M3 6h10l2 3h14v19H3z" fill="#fafafa" stroke="#8a8a8a" stroke-width="1.500"/><path d="M9 19l7-6l7 6M11 18v7h10v-7" fill="none" stroke="#222" stroke-width="1.800"/></svg>
<div class="row" style="top:207.7px">Home</div>
<div class="arr" style="top:233.8px"></div>
<svg class="abs" style="left:22.0px;top:228.8px;width:18px;height:18px" viewBox="0 0 32 32"><path d="M3 6h10l2 3h14v19H3z" fill="#f4f4f4" stroke="#9a9a9a" stroke-width="1.500"/></svg>
<div class="row" style="top:227.8px">/</div>
<div class="arr" style="top:253.9px"></div>
<svg class="abs" style="left:22.0px;top:248.9px;width:18px;height:18px" viewBox="0 0 32 32"><path d="M3 6h10l2 3h14v19H3z" fill="#f4f4f4" stroke="#9a9a9a" stroke-width="1.500"/></svg>
<div class="row" style="top:247.9px">/Volumes</div>
<svg class="abs" style="left:22.0px;top:269.0px;width:18px;height:18px" viewBox="0 0 32 32"><path d="M2 15l14-5l14 5v8l-14 6l-14-6z" fill="#e9c52f" stroke="#9c8216" stroke-width="1"/><path d="M16 21l14-6v8l-14 6z" fill="#f6e27a"/><circle cx="16" cy="11" r="9" fill="#5d8cc6" stroke="#2f5486" stroke-width="1"/><path d="M10 4q3-2 5 0q1 3-2 4q-1 3-3 2q-2-3 0-6zM18 8q4-2 6 1q0 4-3 6q-3 0-3-3zM12 14q2 0 3 2q0 3-2 4q-2-2-1-6z" fill="#dfe9f5" opacity=".9"/></svg>
<div class="row" style="top:268.0px">GeoPackage</div>
<svg class="abs" style="left:22.0px;top:289.1px;width:18px;height:18px" viewBox="0 0 32 32"><path d="M3 30c3-10 9-20 24-27c0 7-3 14-9 18c-5 3-9 3-11 3z" fill="#7ea6d6" stroke="#2f5486" stroke-width="1.500"/><path d="M3 30c5-9 12-18 22-25" fill="none" stroke="#2f5486" stroke-width="1.500"/></svg>
<div class="row" style="top:288.1px">SpatiaLite</div>
<svg class="abs" style="left:22.0px;top:309.2px;width:18px;height:18px" viewBox="0 0 32 32"><path d="M6 4c6-3 16-3 21 1c3 4 1 12-2 16c-1 2-3 2-4 0c0 4-1 8-4 9c-3 0-3-4-3-8c-4 1-8-1-9-6c-1-5 1-10 5-12z" fill="#5d8cc6" stroke="#2f5486" stroke-width="1.500"/><path d="M14 8c2 4 2 10 0 14M21 8c1 4 1 9-1 13" fill="none" stroke="#dfe9f5" stroke-width="1.500"/></svg>
<div class="row" style="top:308.2px">PostGIS</div>
<svg class="abs" style="left:22.0px;top:329.3px;width:18px;height:18px" viewBox="0 0 32 32"><path d="M3 4c10 0 20 4 26 12c-6 6-14 10-24 12c4-8 4-16-2-24z" fill="#5d8cc6" stroke="#2f5486" stroke-width="1.500"/><path d="M10 7c4 6 4 14 1 20M16 9c3 5 3 11 1 16M22 12c1 3 1 7 0 10" fill="none" stroke="#dfe9f5" stroke-width="1.500"/></svg>
<div class="row" style="top:328.3px">MSSQL</div>
<svg class="abs" style="left:22.0px;top:349.4px;width:18px;height:18px" viewBox="0 0 32 32"><rect x="2" y="3" width="28" height="26" rx="4" fill="#6f9bd1"/><text x="16" y="20.500" font-size="12" font-weight="bold" font-family="Liberation Sans,sans-serif" fill="#fff" text-anchor="middle">DB2</text></svg>
<div class="row" style="top:348.4px">DB2</div>
<svg class="abs" style="left:22.0px;top:369.5px;width:18px;height:18px" viewBox="0 0 32 32"><circle cx="16" cy="16" r="13" fill="#7ea6d6" stroke="#2f5486" stroke-width="1"/><path d="M10 9q3-2 5 0q1 3-2 4q-1 3-3 2q-2-3 0-6zM18 13q4-2 6 1q0 4-3 6q-3 0-3-3zM12 19q2 0 3 2q0 3-2 4q-2-2-1-6z" fill="#f1f5fa" opacity=".9"/></svg>
<div class="row" style="top:368.5px">WMS/WMTS</div>
<div class="arr" style="top:394.6px"></div>
<svg class="abs" style="left:22.0px;top:389.6px;width:18px;height:18px" viewBox="0 0 32 32"><circle cx="16" cy="16" r="13" fill="#7ea6d6" stroke="#2f5486" stroke-width="1"/><path d="M10 9q3-2 5 0q1 3-2 4q-1 3-3 2q-2-3 0-6zM18 13q4-2 6 1q0 4-3 6q-3 0-3-3zM12 19q2 0 3 2q0 3-2 4q-2-2-1-6z" fill="#f1f5fa" opacity=".9"/></svg>
<div class="row" style="top:388.6px">XYZ Tiles</div>
<svg class="abs" style="left:22.0px;top:409.7px;width:18px;height:18px" viewBox="0 0 32 32"><circle cx="16" cy="16" r="13" fill="#fff" stroke="#1d3c68" stroke-width="1.800"/><path d="M16 3v26M3 16h26M6 8q10 5 20 0M6 24q10-5 20 0" fill="none" stroke="#1d3c68" stroke-width="2.500"/><ellipse cx="16" cy="16" rx="6" ry="13" fill="none" stroke="#1d3c68" stroke-width="2.500"/></svg>
<div class="row" style="top:408.7px">WCS</div>
<svg class="abs" style="left:22.0px;top:429.8px;width:18px;height:18px" viewBox="0 0 32 32"><circle cx="16" cy="16" r="13" fill="#fff" stroke="#5d8cc6" stroke-width="1.500"/><path d="M16 3v26M3 16h26" stroke="#a9c3e4" stroke-width="1"/><ellipse cx="16" cy="16" rx="6" ry="13" fill="none" stroke="#a9c3e4" stroke-width="1"/><path d="M9 9l6 15l8-15" fill="none" stroke="#333" stroke-width="1.500"/><circle cx="9" cy="9" r="2" fill="#fff" stroke="#333"/><circle cx="23" cy="9" r="2" fill="#fff" stroke="#333"/><circle cx="15" cy="24" r="2" fill="#fff" stroke="#333"/></svg>
<div class="row" style="top:428.8px">WFS</div>
<svg class="abs" style="left:22.0px;top:449.9px;width:18px;height:18px" viewBox="0 0 32 32"><circle cx="16" cy="16" r="13" fill="#fff" stroke="#5d8cc6" stroke-width="1.500"/><path d="M16 3v26M3 16h26M6 8q10 5 20 0M6 24q10-5 20 0" fill="none" stroke="#7ea6d6" stroke-width="1.200"/><ellipse cx="16" cy="16" rx="6" ry="13" fill="none" stroke="#7ea6d6" stroke-width="1.200"/></svg>
<div class="row" style="top:448.9px">OWS</div>
<div class="arr" style="top:475.0px"></div>
<svg class="abs" style="left:22.0px;top:470.0px;width:18px;height:18px" viewBox="0 0 32 32"><circle cx="16" cy="16" r="13" fill="#5d8cc6" stroke="#2f5486" stroke-width="1"/><path d="M10 9q3-2 5 0q1 3-2 4q-1 3-3 2q-2-3 0-6zM18 13q4-2 6 1q0 4-3 6q-3 0-3-3zM12 19q2 0 3 2q0 3-2 4q-2-2-1-6z" fill="#f1f5fa" opacity=".9"/><path d="M5 22q4 4 8 7M4 18q5 6 11 10" stroke="#111" stroke-width="2" fill="none"/></svg>
<div class="row" style="top:469.0px">ArcGisMapServer</div>
<div class="arr" style="top:495.1px"></div>
<svg class="abs" style="left:22.0px;top:490.1px;width:18px;height:18px" viewBox="0 0 32 32"><circle cx="16" cy="16" r="13" fill="#e9f0f8" stroke="#5d8cc6" stroke-width="1"/><path d="M10 9q3-2 5 0q1 3-2 4q-1 3-3 2q-2-3 0-6zM18 13q4-2 6 1q0 4-3 6q-3 0-3-3zM12 19q2 0 3 2q0 3-2 4q-2-2-1-6z" fill="#5d8cc6" opacity=".9"/><path d="M5 22q4 4 8 7M4 18q5 6 11 10" stroke="#111" stroke-width="2" fill="none"/></svg>
<div class="row" style="top:489.1px">ArcGisFeatureServer</div>
<svg class="abs" style="left:22.0px;top:510.2px;width:18px;height:18px" viewBox="0 0 32 32"><g stroke="#4c7fc0" stroke-width="3.200" stroke-linecap="round"><path d="M16 3v26M4.700 9.500l22.600 13M4.700 22.500l22.600-13"/></g><g fill="#4c7fc0"><circle cx="16" cy="3.500" r="2.800"/><circle cx="16" cy="28.500" r="2.800"/><circle cx="4.700" cy="9.500" r="2.800"/><circle cx="27.300" cy="22.500" r="2.800"/><circle cx="4.700" cy="22.500" r="2.800"/><circle cx="27.300" cy="9.500" r="2.800"/></g></svg>
<div class="row" style="top:509.2px">GeoNode</div>
<div class="abs" style="left:164px;top:566px;width:20px;height:3px;background-image:radial-gradient(circle,#bbb .7px,transparent 1px);background-size:3px 3px"></div>
<div class="abs" style="left:351px;top:520px;width:3px;height:20px;background-image:radial-gradient(circle,#bbb .7px,transparent 1px);background-size:3px 3px"></div>
<div class="ptitle" style="top:574px;line-height:16px">Layers</div>
<div class="abs" style="left:317px;top:576px;width:13px;height:13px;border:1px solid #8e8e8e;border-radius:2.5px;background:#f4f4f4"></div><svg class="abs" style="left:319px;top:578px;width:9px;height:9px" viewBox="0 0 9 9"><rect x="3" y=".5" width="5.5" height="5.5" fill="#eee" stroke="#666" stroke-width=".9"/><rect x=".5" y="3" width="5" height="5.500" fill="#eee" stroke="#666" stroke-width=".9"/></svg><div class="abs" style="left:332px;top:576px;width:14px;height:13px;border:1px solid #8e8e8e;border-radius:2.5px;background:#f4f4f4"></div><svg class="abs" style="left:334px;top:577.5px;width:10px;height:10px" viewBox="0 0 10 10"><path d="M1.500 1.500l7 7M8.500 1.500l-7 7" stroke="#555" stroke-width="1.700"/></svg>
<svg class="abs" style="left:4.0px;top:601.0px;width:18px;height:18px" viewBox="0 0 32 32"><path d="M3 14l10-5l8 10l-9 8z" fill="#e04a3a"/><path d="M3 14l5 6l-2 3z" fill="#3a6fd0"/><path d="M8 20l8 5l-4 2z" fill="#f0c646"/><path d="M17 15l11-11" stroke="#c98a2a" stroke-width="4" stroke-linecap="round"/><path d="M12 12l8 8" stroke="#e9c98a" stroke-width="3"/></svg>
<svg class="abs" style="left:31.5px;top:600.5px;width:19px;height:19px" viewBox="0 0 32 32"><g opacity=".7"><rect x="6" y="8" width="17" height="19" fill="#ddd" stroke="#777" stroke-width="1.500"/><rect x="10" y="4" width="9" height="6" fill="#ccc" stroke="#777" stroke-width="1.200"/><rect x="3" y="14" width="12" height="13" fill="#eee" stroke="#777" stroke-width="1.200"/></g><rect x="17" y="18" width="12" height="12" rx="2" fill="#3f8f4a"/><path d="M23 20.500v7M19.500 24h7" stroke="#fff" stroke-width="2"/></svg>
<svg class="abs" style="left:59.5px;top:600.5px;width:19px;height:19px" viewBox="0 0 32 32"><path d="M2 15c7-9 19-9 27 0c-8 9-20 9-27 0z" fill="#f4f7fb" stroke="#666" stroke-width="1.500"/><circle cx="15" cy="15" r="5.500" fill="#5d8cc6" stroke="#2f5486" stroke-width="1"/><circle cx="15" cy="15" r="2.200" fill="#123"/><path d="M23 26h7l-3.500 4z" fill="#222"/></svg>
<svg class="abs" style="left:88.0px;top:600.0px;width:18px;height:18px" viewBox="0 0 32 32"><path d="M3 3h26l-10 12v13l-6-3V15z" fill="#4c86c8" stroke="#2c5a96" stroke-width="1"/><rect x="3" y="2" width="26" height="5" fill="#f0c646" stroke="#b8991c" stroke-width="1"/></svg>
<svg class="abs" style="left:116.5px;top:600.5px;width:19px;height:19px" viewBox="0 0 32 32"><g opacity=".45"><text x="2" y="20" font-size="24" font-family="Liberation Serif,serif" fill="#888">ε</text><path d="M16 18h10v10h-3v-6h-4v6h-3z" fill="#bbb"/></g></svg>
<div class="dd g" style="left:141px;top:608px"></div>
<svg class="abs" style="left:158.0px;top:600.0px;width:18px;height:18px" viewBox="0 0 32 32"><path d="M4 6h6M4 6v18h6" fill="none" stroke="#999" stroke-width="1.500"/><rect x="8" y="10" width="4" height="4" fill="#f0a030"/><rect x="8" y="20" width="4" height="4" fill="#f0a030"/><path d="M20 29l9-11h-5V3h-8v15h-5z" fill="#4c86c8" stroke="#2c5a96" stroke-width="1"/></svg>
<svg class="abs" style="left:186.0px;top:600.0px;width:18px;height:18px" viewBox="0 0 32 32"><path d="M4 8h6M4 8v18h6" fill="none" stroke="#999" stroke-width="1.500"/><rect x="8" y="12" width="4" height="4" fill="#f0a030"/><rect x="8" y="22" width="4" height="4" fill="#f0a030"/><path d="M20 2l9 11h-5v15h-8V13h-5z" fill="#4c86c8" stroke="#2c5a96" stroke-width="1"/></svg>
<svg class="abs" style="left:213.0px;top:601.0px;width:18px;height:18px" viewBox="0 0 32 32"><rect x="3" y="3" width="20" height="20" fill="#fafafa" stroke="#777" stroke-width="1.500"/><rect x="17" y="19" width="12" height="9" rx="2" fill="#d42a2a"/><path d="M19.500 23.500h7" stroke="#fff" stroke-width="2.200"/></svg>
<div class="tree" style="left:0;top:628px;width:347px;height:316px"></div>
<div class="abs" style="left:331px;top:629px;width:15px;height:314px;background:linear-gradient(90deg,#efefef,#fff)"></div>
<div class="abs" style="left:331px;top:643px;width:15px;height:189px;background:#e4e4e4;border:1px solid #cdcdcd"></div>
<div class="abs" style="left:331px;top:629px;width:15px;height:14px;background:#f6f6f6;border-bottom:1px solid #d0d0d0"></div>
<div class="abs" style="left:335px;top:633px;width:0;height:0;border-left:4px solid transparent;border-right:4px solid transparent;border-bottom:5px solid #444"></div>
<div class="abs" style="left:335px;top:934px;width:0;height:0;border-left:4px solid transparent;border-right:4px solid transparent;border-top:5px solid #444"></div>
<div class="cb" style="top:632.5px"><svg viewBox="0 0 15 15" style="position:absolute;left:0;top:0;width:13px;height:13px"><path d="M3 7.500l3 4.500l5.500-9.500" fill="none" stroke="#111" stroke-width="1.700"/></svg></div>
<div class="ln" style="top:639px;background:#3a1fd0"></div>
<div class="lrow" style="top:630.0px">H5</div>
<div class="cb" style="top:654.9px"><svg viewBox="0 0 15 15" style="position:absolute;left:0;top:0;width:13px;height:13px"><path d="M3 7.500l3 4.500l5.500-9.500" fill="none" stroke="#111" stroke-width="1.700"/></svg></div>
<div class="ln" style="top:662px;background:#e05ae0"></div>
<div class="lrow" style="top:652.4px">H4</div>
<div class="cb" style="top:677.2px"><svg viewBox="0 0 15 15" style="position:absolute;left:0;top:0;width:13px;height:13px"><path d="M3 7.500l3 4.500l5.500-9.500" fill="none" stroke="#111" stroke-width="1.700"/></svg></div>
<div class="ln" style="top:684px;background:#f66b72"></div>
<div class="lrow" style="top:674.7px">H3</div>
<div class="cb" style="top:699.5px"><svg viewBox="0 0 15 15" style="position:absolute;left:0;top:0;width:13px;height:13px"><path d="M3 7.500l3 4.500l5.500-9.500" fill="none" stroke="#111" stroke-width="1.700"/></svg></div>
<div class="ln" style="top:706px;background:#f0641e"></div>
<div class="lrow" style="top:697.0px">H2</div>
<div class="cb" style="top:721.9px"><svg viewBox="0 0 15 15" style="position:absolute;left:0;top:0;width:13px;height:13px"><path d="M3 7.500l3 4.500l5.500-9.500" fill="none" stroke="#111" stroke-width="1.700"/></svg></div>
<div class="ln" style="top:729px;background:#fdd870"></div>
<div class="lrow" style="top:719.4px">H1</div>
<div class="cb" style="top:744.2px"></div>
<div class="ln" style="top:751px;background:#6fe05f"></div>
<div class="lrow" style="top:741.8px">SS; TS</div>
<div class="cb" style="top:766.6px"></div>
<div class="ln" style="top:773px;background:#1fd01f"></div>
<div class="lrow" style="top:764.1px">SS; TS</div>
<div class="cb" style="top:789.0px"></div>
<div class="ln" style="top:796px;background:#a9d6ef"></div>
<div class="lrow" style="top:786.5px">SD; TD</div>
<div class="cb" style="top:811.3px"></div>
<div class="ln" style="top:818px;background:#9dcdf0"></div>
<div class="lrow" style="top:808.8px">SD; TD</div>
<div class="cb" style="top:833.6px"></div>
<div class="ln" style="top:840px;background:#6a6a6a"></div>
<div class="lrow" style="top:831.1px">DS; ET</div>
<div class="cb" style="top:856.0px"></div>
<div class="ln" style="top:863px;background:#9a9a9a"></div>
<div class="lrow" style="top:853.5px">DS; ET</div>
<div class="cb" style="top:878.4px"></div>
<div class="ln" style="top:885px;background:#4a4a4a"></div>
<div class="lrow" style="top:875.9px">MX; N/A</div>
<div class="cb" style="top:900.7px"></div>
<div class="ln" style="top:908px;background:#111"></div>
<div class="lrow" style="top:898.2px">MX; N/A</div>
<div class="abs" style="left:3px;top:927.5px;width:0;height:0;border-left:4.500px solid transparent;border-right:4.500px solid transparent;border-top:5.500px solid #555"></div>
<div class="cb" style="left:22px;top:922.0px"><svg viewBox="0 0 15 15" style="position:absolute;left:0;top:0;width:13px;height:13px"><path d="M3 7.500l3 4.500l5.500-9.500" fill="none" stroke="#111" stroke-width="1.700"/></svg></div>
<svg class="abs" style="left:47px;top:922.5px;width:15px;height:15px" viewBox="0 0 16 16"><rect x="0" y="0" width="4" height="4" fill="#1d2c40"/><rect x="8" y="0" width="4" height="4" fill="#9db9dc"/><rect x="12" y="0" width="4" height="4" fill="#1d2c40"/><rect x="4" y="4" width="4" height="4" fill="#1d2c40"/><rect x="8" y="4" width="4" height="4" fill="#6f97c8"/><rect x="0" y="8" width="4" height="4" fill="#9db9dc"/><rect x="4" y="8" width="4" height="4" fill="#6f97c8"/><rect x="8" y="8" width="4" height="4" fill="#1d2c40"/><rect x="0" y="12" width="4" height="4" fill="#1d2c40"/><rect x="12" y="8" width="4" height="4" fill="#9db9dc"/><rect x="4" y="12" width="4" height="4" fill="#1d2c40"/><rect x="12" y="4" width="4" height="4" fill="#c9d9ec"/></svg>
<div class="lrow" style="left:69px;top:919.0px;font-weight:bold;font-size:15px">OpenStreetMap</div>
<div id="status" class="abs"></div>
<div class="inp" style="left:1px;top:949px;width:241px;height:28px;border-radius:4px"></div>
<svg class="abs" style="left:9px;top:955px;width:16px;height:16px" viewBox="0 0 16 16"><circle cx="6.500" cy="6.500" r="4.800" fill="none" stroke="#8a8a8a" stroke-width="1.400"/><path d="M10 10l4.500 4.500" stroke="#8a8a8a" stroke-width="1.600"/></svg>
<div class="st" style="left:34px;top:955px;font-style:italic;color:#a6a6a6;font-size:14px">Type to locate (⌘K)</div>
<div class="st" style="left:251px;top:956px;font-size:13px">1 legend entries removed.</div>
<div class="st" style="left:612px;top:955px;">Coordinate:</div>
<div class="inp" style="left:684px;top:951px;width:141px;height:25px;text-align:center;padding-top:2px">-3695711,2227642</div>
<svg class="abs" style="left:829px;top:952px;width:20px;height:22px" viewBox="0 0 20 22"><ellipse cx="9" cy="11" rx="5.500" ry="8" transform="rotate(-25 9 11)" fill="#fff" stroke="#222" stroke-width="1.400"/><path d="M5 6l7 4M8 3l3 7" stroke="#222" stroke-width="1"/><path d="M14 5l4-3M15 8l4-1" stroke="#c44" stroke-width="1"/><circle cx="11" cy="14" r="2" fill="none" stroke="#222"/></svg>
<div class="st" style="left:862px;top:955px;">Scale</div>
<div class="inp" style="left:899px;top:950px;width:103px;height:26px;padding:2px 0 0 3px">1:180077014</div>
<div class="abs" style="left:979px;top:951px;width:1px;height:24px;background:#d0d0d0"></div>
<div class="dd" style="left:986px;top:961px"></div>
<svg class="abs" style="left:1015px;top:953px;width:16px;height:20px" viewBox="0 0 16 20"><path d="M4 9V6a4 4 0 0 1 8 0v3" fill="none" stroke="#8a8a8a" stroke-width="2"/><rect x="2" y="9" width="12" height="9" rx="1" fill="#6a6a6a"/></svg>
<div class="st" style="left:1040px;top:955px;">Magnifier</div>
<div class="inp" style="left:1100px;top:950px;width:106px;height:26px;padding:2px 0 0 4px">100%</div>
<div class="st" style="left:1217px;top:955px;">Rotation</div>
<div class="inp" style="left:1276px;top:950px;width:102px;height:26px;padding:2px 0 0 4px">0.0 °</div>
<div class="abs" style="left:1189px;top:951px;width:1px;height:24px;background:#d0d0d0"></div>
<div class="abs" style="left:1193px;top:956px;width:0;height:0;border-left:4px solid transparent;border-right:4px solid transparent;border-bottom:5px solid #555"></div>
<div class="abs" style="left:1193px;top:965px;width:0;height:0;border-left:4px solid transparent;border-right:4px solid transparent;border-top:5px solid #555"></div>
<div class="abs" style="left:1361px;top:951px;width:1px;height:24px;background:#d0d0d0"></div>
<div class="abs" style="left:1365px;top:956px;width:0;height:0;border-left:4px solid transparent;border-right:4px solid transparent;border-bottom:5px solid #555"></div>
<div class="abs" style="left:1365px;top:965px;width:0;height:0;border-left:4px solid transparent;border-right:4px solid transparent;border-top:5px solid #555"></div>
<div class="cb" style="left:1386px;top:955px;width:14px;height:14px"><svg viewBox="0 0 15 15" style="position:absolute;left:0;top:0;width:13px;height:13px"><path d="M3 7.500l3 4.500l5.500-9.500" fill="none" stroke="#111" stroke-width="1.700"/></svg></div>
<div class="st" style="left:1407px;top:955px;">Render</div>
<svg class="abs" style="left:1466px;top:955px;width:18px;height:16px" viewBox="0 0 18 16"><ellipse cx="9" cy="8" rx="7.500" ry="6.500" fill="#f4f4f4" stroke="#555" stroke-width="1"/><ellipse cx="9" cy="8" rx="3.200" ry="6.500" fill="none" stroke="#555" stroke-width=".9"/><path d="M1.500 8h15M3 4.500h12M3 11.500h12M9 1.500v13" stroke="#555" stroke-width=".9"/></svg>
<div class="st" style="left:1486px;top:955px;">EPSG:3857</div>
<svg class="abs" style="left:1577px;top:953px;width:20px;height:20px" viewBox="0 0 20 20"><path d="M10 2c5 0 8.500 3 8.500 6.800s-3.500 6.800-8.500 6.800c-.8 0-1.600-.1-2.300-.3L4 18l.8-3.600C3 13.100 1.500 11.100 1.500 8.800C1.500 5 5 2 10 2z" fill="#5a5a5a"/><circle cx="6" cy="9" r="1.200" fill="#fff"/><circle cx="10" cy="9" r="1.200" fill="#fff"/><circle cx="14" cy="9" r="1.200" fill="#fff"/></svg>
<div class="abs" style="left:355px;top:112px;width:1245px;height:833px;background:#fff"></div>
<svg class="abs" style="left:355px;top:112px" width="1212.5" height="833" viewBox="355 112 1212.5 833">
<rect x="355" y="112" width="1213" height="833" fill="#aad3df"/>
<defs><filter id="soft" x="-2%" y="-2%" width="104%" height="104%"><feGaussianBlur stdDeviation="0.55"/></filter></defs><g filter="url(#soft)">
<path d="M988.9 550.3L992.4 551.2L996.3 550.3L998.5 546.8L999.4 543.3L1001.4 538.2L1003.0 532.9L1002.6 530.1L1004.1 525.2L1001.4 525.2L997.9 524.2L994.3 527.4L990.8 527.9L987.7 525.7L982.6 524.0L981.8 526.7L976.3 525.2L972.8 524.2L969.7 523.3L968.9 519.3L966.9 516.3L967.3 513.3L964.6 510.8L965.0 508.2L970.0 506.2L975.9 506.2L979.4 504.4L975.9 503.1L976.3 502.0L985.3 502.0L987.7 499.4L992.8 497.8L999.8 497.6L1004.5 501.5L1011.2 503.1L1017.8 503.1L1024.9 500.5L1025.3 496.3L1022.9 492.5L1017.8 489.3L1011.2 484.9L1008.4 481.6L1005.7 480.0L1009.2 476.0L1012.0 470.9L1016.3 469.2L1011.2 469.8L1003.3 472.1L999.4 475.5L1000.6 479.4L1005.3 479.4L1001.0 481.6L996.3 484.9L993.2 484.4L989.6 479.7L994.3 475.5L987.7 475.5L985.7 472.6L982.8 473.2L978.7 480.0L974.4 486.0L974.4 490.4L971.6 491.5L970.0 495.2L972.0 497.8L972.8 500.5L975.9 501.8L972.0 503.1L970.0 503.2L966.9 506.2L965.0 508.0L964.2 505.1L963.8 503.9L957.9 503.3L956.3 506.7L957.5 507.5L955.5 508.2L954.0 508.5L952.0 505.1L950.8 508.2L952.4 511.8L952.0 513.3L953.6 515.3L956.3 517.3L956.5 520.0L954.8 518.6L952.4 518.8L953.2 521.3L951.2 520.8L952.8 525.7L950.5 526.2L948.9 523.3L947.3 524.2L945.8 519.8L947.3 516.8L945.0 516.3L943.4 514.3L943.4 513.3L941.4 510.8L940.7 509.8L938.3 506.2L938.3 501.5L938.3 498.6L934.8 495.7L933.2 494.4L926.6 489.8L921.9 486.6L919.1 480.0L916.8 482.7L915.6 478.8L916.2 478.0L910.5 479.4L911.3 482.2L910.5 484.9L915.2 489.3L917.9 495.2L921.1 498.1L925.4 498.4L924.6 500.5L928.5 502.6L932.8 505.1L934.8 507.7L934.2 509.2L932.4 506.9L929.7 505.9L927.3 508.2L929.3 513.3L926.9 514.3L927.3 516.8L925.4 518.6L923.6 517.8L924.2 515.3L925.4 513.3L923.4 508.2L921.1 507.2L918.3 505.1L917.9 503.9L913.2 501.8L910.1 499.2L905.8 495.7L903.4 492.8L902.7 489.6L900.7 486.9L897.2 484.9L891.7 488.5L890.7 488.8L888.2 491.5L883.5 490.9L880.3 490.4L876.0 490.9L874.1 495.2L874.8 498.4L870.9 501.0L865.8 504.6L861.1 510.8L863.1 514.6L860.3 516.8L859.6 520.3L854.9 523.5L853.7 524.7L845.1 524.7L841.3 527.4L840.4 528.1L837.6 525.7L833.3 522.3L827.2 523.3L827.8 516.3L825.1 514.3L827.4 507.2L828.2 502.3L827.4 497.8L825.9 493.1L829.4 490.4L832.1 488.5L840.0 489.3L847.4 489.8L855.2 490.4L856.4 489.8L857.6 483.3L858.0 478.3L857.6 474.9L854.1 469.2L851.3 467.5L845.1 465.7L843.5 462.2L848.6 459.8L854.5 460.7L856.4 460.7L856.0 454.7L857.6 456.2L862.7 455.6L866.6 452.9L868.6 448.3L869.5 446.8L874.8 444.3L876.0 443.9L878.0 440.1L880.7 433.7L883.8 431.7L889.3 431.1L893.6 429.1L896.0 427.8L897.2 425.1L896.0 421.1L894.0 416.6L894.0 409.9L896.0 405.6L901.5 402.0L903.8 400.9L903.4 404.9L902.7 409.2L905.0 410.6L902.3 412.8L900.7 416.9L899.5 420.4L901.1 421.7L902.3 424.4L905.4 424.4L905.0 427.5L909.7 425.8L915.2 423.8L917.9 427.8L925.8 425.1L934.8 421.7L935.6 424.4L940.3 424.1L940.7 420.7L945.0 415.6L944.6 409.9L946.9 402.0L950.8 400.9L953.2 406.4L956.7 406.0L957.9 399.8L958.3 396.1L954.4 393.8L954.0 390.0L959.3 388.1L964.2 387.0L972.0 387.7L977.9 384.2L980.6 384.2L975.9 382.3L974.7 378.3L968.1 379.9L960.2 382.7L952.4 385.0L949.3 380.3L946.1 375.1L946.5 371.8L945.8 365.2L945.0 358.3L951.2 353.1L958.3 344.1L961.8 341.3L961.4 336.6L958.7 334.2L956.9 333.8L952.4 333.8L949.3 336.1L946.5 341.3L944.6 343.6L941.8 352.2L935.6 359.2L932.4 362.6L930.1 364.3L929.3 370.2L929.7 378.3L934.8 381.5L936.4 384.6L933.2 389.3L928.9 393.8L927.3 399.8L926.6 408.9L925.0 412.4L918.3 416.9L913.8 418.0L912.8 416.2L912.1 413.1L911.3 409.2L909.1 401.3L906.2 396.1L905.8 391.6L904.2 384.6L903.0 390.0L900.3 391.9L896.8 396.1L893.6 398.3L889.9 399.1L884.6 392.3L883.1 388.5L883.1 380.7L881.9 375.9L881.9 368.5L886.6 363.5L892.5 358.3L899.5 353.1L901.5 348.6L906.2 342.2L910.1 336.6L912.5 328.9L914.0 323.0L918.7 319.0L921.1 311.8L914.0 312.8L919.1 306.5L926.9 305.4L930.5 306.5L930.9 298.9L936.5 293.9L942.6 289.9L948.5 286.4L955.2 282.3L963.4 276.3L970.0 277.6L974.0 280.6L979.8 285.3L984.1 285.9L978.7 291.0L979.8 293.3L985.7 294.4L991.6 296.7L999.4 298.9L1009.2 306.5L1019.0 314.9L1023.7 322.0L1022.9 327.0L1019.0 330.9L1011.2 330.9L999.4 328.0L991.6 325.0L989.2 321.0L993.6 328.9L998.3 337.6L998.6 345.9L1003.3 351.3L1011.6 351.3L1009.2 346.8L1007.3 340.4L1017.8 342.2L1021.0 345.4L1019.0 336.6L1024.9 330.9L1028.8 328.0L1035.5 331.9L1034.7 322.0L1034.7 306.5L1031.9 305.4L1042.5 308.6L1044.5 313.9L1042.5 322.0L1046.4 323.0L1052.3 314.9L1058.2 311.8L1070.0 304.3L1073.9 309.7L1075.8 308.6L1085.6 306.5L1093.5 307.6L1099.3 301.1L1099.3 292.2L1113.1 297.8L1120.9 303.3L1124.8 308.6L1130.7 309.7L1132.6 301.1L1124.8 293.3L1124.0 284.1L1126.8 272.1L1132.6 255.4L1136.6 247.4L1142.4 250.1L1146.4 256.8L1147.5 272.1L1146.4 289.9L1147.1 303.3L1151.4 312.8L1146.4 325.0L1154.2 320.0L1155.4 306.5L1152.2 295.6L1152.2 278.2L1150.3 265.8L1156.2 256.8L1162.0 265.8L1167.9 262.0L1165.9 274.5L1175.7 268.3L1183.6 263.3L1187.5 278.2L1189.5 284.1L1191.4 272.1L1179.7 246.0L1201.2 240.4L1203.2 224.3L1214.9 215.0L1234.5 207.0L1250.2 200.4L1270.9 179.3L1281.5 197.0L1301.1 208.7L1307.0 216.6L1293.3 239.0L1281.5 250.1L1293.3 243.2L1307.0 243.2L1309.0 246.0L1324.6 250.1L1332.5 252.8L1344.2 252.8L1350.1 243.2L1357.9 240.4L1369.7 259.4L1367.7 278.2L1375.6 278.2L1383.4 272.1L1399.1 273.3L1406.9 263.3L1413.6 254.8L1434.3 262.0L1450.0 272.1L1459.8 279.4L1477.4 278.2L1489.2 289.9L1493.1 295.6L1504.9 293.3L1516.6 294.4L1522.5 289.9L1530.3 288.8L1528.4 301.1L1540.1 292.2L1551.9 292.2L1559.7 296.7L1567.5 302.2L1567.5 339.4L1561.7 345.0L1557.7 344.1L1559.7 350.4L1564.8 363.5L1564.4 366.0L1555.8 363.5L1546.0 369.3L1538.2 375.9L1530.3 383.8L1520.5 379.9L1512.7 383.8L1504.9 385.4L1502.9 395.3L1499.0 400.5L1501.7 406.4L1502.1 412.1L1497.0 420.4L1497.4 422.1L1489.2 431.7L1484.1 433.7L1482.5 440.1L1476.3 447.1L1473.5 440.1L1471.9 427.1L1472.3 413.5L1476.6 402.7L1483.3 395.3L1488.4 387.7L1496.6 381.5L1502.9 371.8L1506.8 363.5L1497.0 371.0L1491.1 378.3L1489.2 369.3L1475.5 371.8L1467.6 386.2L1469.6 389.3L1457.8 391.6L1453.1 387.3L1444.1 389.3L1432.4 389.3L1423.4 388.9L1412.8 399.1L1403.8 410.3L1399.1 421.7L1393.2 422.4L1401.0 427.1L1406.9 425.8L1412.0 431.7L1416.3 433.1L1414.7 440.1L1413.2 449.5L1412.0 458.6L1406.9 467.5L1404.9 473.2L1397.1 484.4L1393.2 488.8L1387.3 493.1L1383.4 494.1L1379.1 492.0L1374.4 496.3L1371.6 499.4L1370.9 504.1L1365.8 508.2L1361.8 509.2L1361.5 512.3L1365.4 515.3L1369.3 523.3L1369.3 528.1L1368.9 531.5L1367.9 532.5L1363.8 533.7L1357.9 536.3L1357.1 533.9L1357.9 528.1L1356.8 524.2L1358.3 520.8L1354.0 519.8L1351.3 517.8L1353.2 514.8L1352.8 510.8L1349.7 508.7L1340.3 512.8L1337.2 514.3L1338.3 508.2L1341.1 505.1L1336.4 504.1L1330.9 508.7L1324.6 512.3L1323.4 513.8L1326.6 518.3L1329.3 519.6L1328.5 522.3L1330.5 522.8L1335.2 519.3L1342.3 521.3L1341.9 523.7L1333.6 527.9L1329.3 533.9L1333.6 536.7L1336.0 542.4L1339.9 548.4L1339.5 552.1L1335.6 554.8L1340.3 556.6L1338.7 563.8L1335.2 565.6L1330.9 573.9L1327.0 578.7L1325.0 580.7L1319.5 585.6L1309.7 589.8L1307.0 590.3L1301.1 592.4L1294.8 594.5L1295.2 598.2L1292.5 597.8L1292.1 593.2L1285.4 593.2L1280.7 596.6L1277.6 599.9L1276.4 604.5L1280.0 609.8L1283.9 613.9L1286.6 615.6L1290.1 624.1L1290.5 628.5L1290.1 631.3L1289.4 634.5L1285.4 637.3L1281.9 638.7L1280.4 641.7L1274.9 644.9L1272.7 645.7L1273.1 640.5L1271.7 638.5L1267.8 637.7L1265.9 634.5L1263.9 631.3L1258.0 629.5L1257.6 626.5L1256.1 626.1L1254.1 626.9L1253.9 630.1L1252.1 636.1L1251.0 638.1L1251.4 642.9L1254.1 646.1L1256.5 651.2L1260.8 654.0L1262.3 655.2L1266.2 658.5L1267.6 663.8L1267.4 664.6L1269.0 669.7L1270.8 674.0L1267.8 674.4L1262.7 670.9L1259.2 667.7L1256.8 663.8L1255.5 658.3L1254.5 654.4L1252.5 652.0L1247.8 648.4L1247.4 644.1L1248.6 640.1L1248.2 634.1L1248.6 630.5L1246.7 624.1L1244.7 613.9L1242.0 612.3L1239.2 613.9L1235.7 616.8L1231.8 616.4L1232.6 609.8L1231.8 605.3L1229.0 601.6L1226.3 598.9L1223.9 596.1L1222.8 593.6L1222.0 589.8L1216.9 589.4L1216.9 591.1L1211.0 592.4L1207.9 592.4L1204.3 593.2L1202.8 596.6L1202.0 598.7L1198.5 600.3L1195.7 602.4L1191.8 606.5L1188.7 609.0L1184.8 613.5L1180.4 616.4L1176.5 618.0L1176.1 624.1L1176.9 627.7L1175.2 632.5L1175.2 638.9L1171.8 642.9L1168.7 644.9L1166.1 647.7L1163.6 646.1L1161.0 640.3L1159.3 635.1L1155.6 628.5L1152.6 620.9L1151.4 618.0L1149.5 611.9L1147.7 603.9L1147.1 598.7L1146.7 594.9L1146.4 590.3L1145.0 592.2L1140.5 596.6L1138.1 595.7L1135.0 592.6L1132.4 590.0L1137.7 587.3L1130.7 585.6L1129.5 583.9L1126.8 582.6L1124.8 579.1L1123.2 577.0L1117.0 577.0L1115.4 577.4L1106.4 577.8L1103.3 577.8L1099.7 577.0L1093.5 576.5L1088.8 575.2L1085.6 570.9L1082.9 568.9L1077.8 571.3L1075.8 571.3L1071.1 570.9L1068.4 567.8L1064.1 565.8L1061.5 560.9L1058.6 556.2L1054.3 554.4L1053.5 556.2L1050.4 558.9L1051.9 562.9L1053.9 566.9L1057.0 570.0L1059.0 572.6L1059.4 576.1L1061.3 579.4L1061.3 576.1L1062.9 573.3L1064.5 577.0L1063.3 580.0L1068.0 581.7L1075.4 580.7L1079.0 577.0L1082.1 573.9L1083.3 572.4L1083.1 578.3L1084.8 581.3L1091.9 584.3L1096.6 589.0L1092.7 597.8L1088.4 601.0L1088.8 604.1L1082.9 608.2L1078.6 609.8L1074.3 611.9L1066.8 615.2L1062.1 618.8L1054.7 622.1L1048.4 625.3L1038.6 628.9L1032.7 629.5L1031.6 626.9L1030.4 620.9L1029.6 614.3L1026.9 609.0L1022.9 603.2L1020.2 598.7L1015.9 593.2L1013.1 586.9L1011.2 582.2L1008.0 577.4L1005.3 573.1L1001.4 567.4L999.4 564.7L997.9 565.1L999.2 558.4L997.1 565.1L996.5 566.2L993.9 564.3L991.6 560.7L989.8 556.4L989.0 558.0L990.4 561.1L993.9 566.5L994.7 568.5L996.7 573.5L1001.4 582.6L1001.4 583.0L1006.9 591.1L1008.0 596.1L1008.0 601.2L1013.1 607.8L1016.7 617.6L1022.9 621.7L1024.9 624.5L1029.6 628.1L1031.9 630.1L1031.4 633.7L1032.7 635.3L1038.6 638.3L1046.4 635.3L1054.3 634.9L1061.3 632.3L1063.3 632.7L1062.5 638.5L1060.2 644.1L1057.4 648.8L1055.1 652.8L1050.4 661.8L1044.5 667.7L1040.0 671.5L1034.7 675.6L1029.0 680.9L1025.3 686.0L1022.5 688.5L1019.4 692.0L1017.6 695.4L1015.9 699.1L1014.3 703.4L1016.3 706.2L1017.1 710.9L1016.7 714.5L1017.8 718.9L1020.6 720.9L1021.4 724.9L1021.0 730.9L1022.0 736.9L1021.8 739.0L1018.6 743.8L1011.2 748.3L1006.9 750.8L1004.1 754.9L999.4 758.7L998.3 761.6L1000.6 765.8L1001.0 768.3L1001.4 775.6L1001.0 778.6L995.5 780.7L991.6 782.5L990.0 784.8L991.2 788.8L989.2 795.6L984.0 802.1L980.6 807.4L975.5 813.4L971.6 816.6L962.8 821.3L959.5 822.3L954.0 821.8L948.9 822.3L940.7 825.2L936.2 823.0L934.7 823.0L934.4 820.8L932.2 815.7L934.0 811.0L930.1 804.2L926.8 796.5L923.8 791.6L921.7 787.9L920.3 780.7L918.9 771.9L914.8 762.9L911.3 755.4L908.3 748.1L908.5 743.0L909.9 739.8L911.3 732.9L914.8 728.3L916.4 722.9L914.0 716.9L914.0 714.1L914.8 710.2L912.5 706.6L910.7 703.4L909.7 699.1L908.7 698.3L905.4 694.8L901.5 690.9L898.7 685.8L896.8 682.2L898.7 680.7L899.3 677.9L899.9 675.6L900.5 672.2L901.1 667.9L900.3 663.6L897.2 661.8L895.6 661.5L894.8 661.8L889.7 662.2L886.2 662.6L883.5 658.7L881.9 656.3L879.9 654.8L875.6 654.2L871.7 654.6L867.0 655.4L866.2 656.3L861.5 657.7L855.4 660.3L854.1 660.9L850.2 659.5L846.6 658.9L838.8 660.7L832.9 662.2L827.0 659.9L820.0 654.8L817.2 652.4L813.3 650.0L810.4 646.1L808.6 642.1L805.1 638.1L801.2 632.7L796.9 630.7L796.5 627.5L797.3 626.3L796.5 624.5L793.7 621.3L797.7 616.0L799.6 607.4L798.8 603.6L797.7 602.0L795.5 596.1L796.1 591.9L799.6 583.9L803.9 579.6L805.5 573.5L809.8 568.9L811.8 565.4L818.8 561.6L822.3 558.9L824.5 554.4L823.7 549.3L826.1 545.6L829.0 541.2L832.5 539.6L835.5 537.5L837.6 532.0L839.2 529.1L841.5 528.6L844.7 532.0L847.0 532.0L850.7 531.5L857.6 531.5L859.8 529.6L862.7 528.1L867.4 525.7L874.2 524.2L882.3 524.5L889.3 523.3L892.7 523.7L896.8 523.3L900.9 521.8L902.7 524.0L905.6 523.0L903.8 526.2L904.0 529.1L905.8 532.0L904.4 534.1L901.9 538.2L905.8 540.0L907.4 541.7L910.5 543.1L914.0 542.9L921.5 545.2L922.6 549.3L927.3 550.7L932.8 553.0L936.7 554.8L937.5 555.0L940.7 552.1L940.9 546.6L947.3 542.9L951.0 543.6L952.8 544.3L956.1 546.7L960.8 548.9L968.9 550.0L975.9 552.3L979.4 550.7L981.4 549.6L984.1 548.9L986.9 549.3ZM294.2 289.9L309.9 294.4L317.7 295.6L325.5 302.2L331.4 301.1L337.3 295.6L341.2 295.6L349.0 289.9L354.9 288.8L360.8 282.9L362.8 286.4L372.5 295.6L376.5 296.7L373.7 287.6L388.2 292.2L403.9 302.2L411.7 313.9L419.6 314.9L431.3 312.8L439.2 317.0L439.2 325.0L443.1 322.0L441.1 311.8L447.0 306.5L449.0 307.6L454.8 311.8L462.7 313.9L470.5 313.9L478.3 313.9L482.3 306.5L486.2 309.7L486.2 319.0L488.1 311.8L494.0 301.1L486.2 292.2L488.1 280.6L484.2 274.5L491.7 265.8L497.9 272.1L501.8 284.1L503.8 293.3L507.7 296.7L509.7 306.5L517.5 303.3L517.5 311.8L523.4 317.0L525.4 311.8L526.5 301.1L529.3 292.2L541.0 293.3L543.8 298.9L543.0 306.5L541.0 317.0L543.8 322.0L537.1 328.9L529.3 328.9L524.6 327.0L525.4 331.9L521.4 338.5L513.6 338.5L521.4 343.1L517.5 350.4L506.9 356.6L505.8 360.9L499.9 362.6L497.9 369.3L494.0 375.9L491.3 383.8L490.9 391.6L493.2 393.1L497.9 393.8L499.9 406.4L509.7 406.4L517.5 409.9L529.3 418.3L539.8 419.7L540.2 430.4L540.2 433.7L544.9 441.4L546.9 444.6L550.8 443.3L553.6 436.9L552.8 427.1L549.6 423.1L560.6 413.5L562.6 402.7L558.7 393.1L554.7 391.6L558.7 379.9L556.7 365.2L557.1 362.6L568.4 366.0L580.2 370.2L582.2 374.3L588.0 375.9L588.0 383.8L590.0 391.6L593.9 397.6L603.7 393.1L607.6 383.8L610.0 380.7L615.5 395.3L619.4 404.2L621.3 413.5L627.2 419.0L635.1 421.7L635.1 425.8L639.0 429.1L643.7 436.9L642.9 441.4L639.0 443.9L631.1 450.8L619.4 451.4L611.5 450.8L601.8 451.4L597.8 456.8L592.0 461.6L588.0 467.5L583.3 471.5L588.0 470.3L593.9 462.2L603.7 457.4L609.6 458.6L610.8 459.8L607.6 464.5L603.7 464.5L607.6 467.5L609.6 474.3L611.5 476.0L615.5 477.2L621.3 477.7L623.3 478.3L626.0 476.0L625.7 470.3L628.0 476.0L623.3 480.5L613.5 483.8L607.6 488.8L604.9 489.8L602.9 487.1L604.5 483.8L609.6 480.0L608.4 477.7L605.7 480.0L603.7 480.2L599.8 481.1L599.8 483.3L593.9 485.5L588.0 488.8L585.3 494.1L584.1 496.0L586.1 498.9L587.3 497.6L588.2 499.4L586.1 500.2L583.3 500.5L580.2 501.5L580.2 503.1L572.8 505.1L572.4 506.2L572.0 509.8L568.8 513.6L566.5 510.8L568.1 514.3L567.7 518.3L564.9 522.8L563.4 515.8L563.0 522.3L564.5 523.7L566.5 531.7L562.6 534.8L557.1 538.2L552.8 541.0L549.3 543.6L544.9 547.0L543.4 553.9L544.9 559.8L546.7 563.1L548.7 570.4L548.5 574.8L547.3 577.4L544.6 577.8L541.8 573.9L540.2 570.9L538.3 566.5L537.9 561.6L535.1 557.5L533.2 555.7L528.1 557.5L523.4 554.4L519.5 554.8L517.5 553.5L513.6 554.8L511.6 555.7L512.8 559.3L513.2 560.7L509.7 560.2L504.6 559.3L500.7 558.4L494.8 557.5L491.3 559.3L488.1 561.6L484.2 563.8L481.5 566.9L480.7 571.8L481.7 574.2L479.5 580.4L479.1 589.8L481.1 595.3L485.8 602.8L490.1 605.3L492.4 607.2L499.1 605.3L502.6 605.3L506.9 602.4L507.7 600.1L508.1 595.3L510.9 594.0L517.5 592.8L521.0 593.0L522.4 594.7L519.9 598.7L519.5 601.6L518.3 606.5L516.3 605.7L517.1 609.8L516.3 613.9L514.0 616.4L515.2 617.2L519.5 616.8L525.4 616.6L529.3 616.2L533.2 616.8L536.5 620.0L535.5 624.1L535.1 630.1L534.4 636.1L537.1 640.1L540.2 643.3L544.9 644.9L548.9 643.3L549.3 642.7L552.8 641.9L556.7 642.9L559.0 645.5L561.0 648.1L561.4 646.1L566.1 642.5L566.5 638.5L569.2 635.9L571.6 634.9L576.3 634.5L579.4 632.5L581.5 630.3L582.9 632.9L580.6 634.5L581.8 636.3L584.1 636.1L587.3 634.5L588.0 631.3L588.8 634.1L594.7 636.5L595.9 638.1L603.7 637.7L607.6 639.7L611.5 638.1L619.4 637.3L617.4 639.3L623.3 642.1L625.3 645.7L628.0 646.9L634.3 652.8L639.0 656.3L646.0 656.3L650.7 656.7L657.4 660.3L660.1 663.0L660.5 662.2L662.5 667.7L666.4 672.4L666.8 676.0L664.4 679.5L666.4 680.3L672.3 680.7L674.2 682.2L678.2 682.2L686.0 685.4L688.7 689.3L693.8 688.9L699.7 690.9L705.6 690.7L711.5 694.0L716.2 697.9L721.3 699.5L724.0 699.9L725.2 705.0L726.0 707.6L725.6 711.1L723.2 716.9L717.3 722.9L711.5 730.9L709.5 736.9L709.5 745.1L708.7 750.8L706.8 757.4L704.4 760.8L701.7 767.9L697.7 771.9L693.0 771.9L687.2 773.4L680.9 776.4L674.6 780.7L672.3 784.6L671.9 789.0L672.3 792.1L671.1 796.5L666.4 802.4L662.5 808.7L658.2 812.9L653.1 820.1L650.7 824.2L647.0 825.8L642.1 825.6L637.4 823.7L635.4 824.2L638.2 828.5L640.1 832.8L637.0 840.7L631.1 844.2L623.3 845.7L618.6 844.7L618.6 853.3L615.5 856.7L607.6 854.9L607.6 858.5L611.5 862.2L613.1 863.8L607.6 866.5L606.5 874.6L604.9 877.4L597.8 883.0L603.7 889.2L604.7 889.8L604.1 893.3L597.8 902.2L593.9 907.6L592.0 912.6L594.3 920.8L594.7 924.0L597.8 930.5L601.8 934.6L606.8 936.2L601.8 938.6L598.6 944.8L592.0 941.4L584.1 936.6L580.2 931.9L574.3 925.3L569.6 918.9L566.5 909.5L566.5 897.4L566.1 887.5L570.4 880.2L573.2 869.2L571.2 866.5L572.4 860.1L573.2 853.3L575.1 848.2L574.3 838.2L575.9 834.3L578.2 828.5L581.8 816.6L582.2 805.1L582.9 802.4L584.5 791.6L586.1 782.9L586.5 774.7L587.3 763.7L587.5 760.3L586.9 753.3L582.9 749.6L578.2 746.3L572.4 743.0L567.7 740.2L563.7 735.7L560.2 727.1L556.7 720.1L554.3 715.3L550.8 709.0L546.9 704.2L544.2 702.3L543.8 697.9L546.9 693.2L548.9 691.3L549.3 688.5L545.3 688.1L545.7 683.4L548.5 679.5L548.9 676.4L553.6 673.2L556.7 669.3L559.8 664.2L558.7 657.9L559.0 653.6L557.1 651.0L555.9 648.1L554.7 644.5L550.8 644.3L548.9 646.9L547.3 650.8L544.9 649.6L541.8 647.7L537.5 647.7L534.8 646.1L531.2 642.1L528.9 641.7L526.5 640.1L526.1 636.1L523.4 632.9L519.5 628.5L518.7 627.3L515.6 627.3L509.7 625.3L503.8 624.1L501.1 622.1L496.0 616.8L492.0 615.2L490.1 615.2L484.2 617.2L478.3 615.2L470.9 612.5L464.6 609.0L461.9 608.0L456.8 606.1L453.7 603.2L449.0 599.9L448.2 597.8L449.9 596.6L449.0 593.2L445.4 586.0L439.9 580.4L435.2 576.1L433.3 570.9L429.0 565.6L422.7 560.7L420.3 556.2L417.6 550.3L412.5 548.0L412.9 551.6L414.9 556.2L417.6 560.7L420.3 565.1L422.3 568.7L426.2 573.9L428.6 579.1L430.1 581.7L433.3 585.2L433.5 586.4L431.7 587.3L430.1 584.7L425.4 580.9L422.7 579.1L422.7 573.9L418.4 570.9L413.7 568.7L411.4 565.8L414.9 565.1L415.3 562.9L411.7 558.4L408.6 554.4L406.6 551.6L405.1 547.5L403.5 544.7L402.7 542.4L398.4 538.9L398.0 537.7L395.3 537.2L390.2 535.3L389.6 532.0L384.7 525.2L382.3 519.3L380.4 516.8L377.3 511.8L374.9 506.2L375.7 498.9L374.5 493.3L376.1 487.1L376.5 474.9L373.7 462.2L380.4 463.4L382.3 468.6L383.1 462.8L381.2 458.6L379.6 456.8L374.5 452.6L366.7 447.7L362.8 446.4L361.6 440.1L358.8 435.0L354.9 430.4L351.8 425.1L349.0 416.9L333.4 399.1L294.2 383.8ZM379.2 462.2L373.7 461.3L370.6 459.2L366.7 455.6L361.6 452.0L359.2 448.0L362.8 447.1L368.6 450.2L371.8 452.6L374.5 456.2L377.6 458.6ZM690.3 385.4L682.1 379.1L673.5 375.9L668.4 367.7L664.4 359.2L659.7 348.6L656.6 336.6L651.9 322.5L652.7 311.8L656.6 304.3L662.5 298.9L662.5 291.0L648.8 281.7L658.6 278.2L646.8 265.8L642.9 252.8L637.0 231.8L635.1 224.3L619.8 208.7L599.0 207.0L586.9 193.6L601.4 183.0L582.6 183.7L577.1 172.4L578.6 163.3L588.8 156.1L604.1 149.9L611.5 131.7L598.2 120.0L615.5 103.7L627.2 82.3L646.8 73.7L686.0 55.4L736.9 32.0L783.9 82.3L806.7 108.8L793.3 121.0L784.3 130.3L781.6 149.9L780.0 171.9L778.1 186.6L776.1 200.4L780.0 215.0L784.3 230.3L778.5 239.0L766.7 241.8L776.9 250.8L778.5 265.8L766.3 274.5L758.5 284.1L776.9 286.4L760.8 301.1L737.3 312.8L713.4 333.3L704.8 345.0L700.1 360.0L695.8 371.8L693.8 379.9ZM1225.5 625.7L1226.7 626.1L1226.7 633.7L1224.7 637.7L1224.7 633.7L1225.1 628.9ZM609.6 453.2L615.5 453.8L620.6 458.0L613.5 456.8ZM1420.6 721.7L1424.5 728.9L1425.7 736.1L1431.6 739.0L1432.0 743.0L1433.5 746.7L1435.1 753.3L1437.5 756.4L1443.3 759.9L1446.9 764.1L1452.0 770.0L1453.1 773.8L1457.8 779.0L1462.5 782.0L1462.1 787.2L1463.7 791.6L1464.1 796.8L1461.8 805.1L1459.8 812.9L1457.1 816.1L1454.7 820.8L1453.1 826.5L1450.4 833.3L1449.8 838.2L1442.2 840.2L1435.9 846.2L1432.4 842.7L1430.0 840.2L1424.5 844.7L1417.1 842.7L1413.2 840.7L1409.6 835.3L1408.9 829.4L1404.9 828.9L1404.9 825.1L1403.4 821.8L1402.2 826.5L1398.7 827.5L1401.0 821.3L1402.6 817.5L1402.2 814.3L1400.2 819.4L1395.1 825.1L1394.6 824.6L1392.0 824.2L1388.1 816.6L1386.1 812.9L1379.5 812.0L1375.9 809.7L1367.7 810.6L1356.0 813.4L1348.1 816.6L1346.2 820.8L1339.9 820.6L1332.5 821.1L1324.6 826.1L1316.8 825.6L1313.3 823.0L1312.9 819.0L1315.6 818.0L1315.8 812.0L1313.3 805.1L1311.3 797.4L1309.0 791.6L1306.2 785.9L1307.0 782.9L1307.8 780.3L1307.0 774.3L1308.2 770.4L1309.5 767.1L1310.1 770.0L1314.8 765.8L1319.5 762.2L1323.8 761.6L1327.0 760.8L1332.5 759.1L1338.3 755.4L1341.1 751.2L1341.1 747.1L1344.2 744.7L1346.6 748.8L1347.3 744.2L1350.1 741.0L1354.0 736.9L1359.5 733.9L1363.0 736.9L1364.6 740.2L1367.7 738.6L1370.1 734.9L1369.7 732.9L1372.4 729.7L1375.0 728.7L1377.5 727.7L1381.4 727.3L1381.8 724.5L1379.5 723.7L1385.4 726.1L1391.2 727.7L1397.1 726.5L1398.3 727.7L1397.5 731.7L1394.8 734.1L1394.8 737.7L1392.8 738.6L1395.1 741.0L1399.1 742.6L1404.9 746.3L1408.1 748.8L1414.0 749.2L1416.3 743.0L1417.1 736.9L1417.1 730.9L1418.3 729.3L1419.0 722.9ZM555.9 578.3L557.5 577.8L558.3 581.7L556.7 583.4L555.1 580.4ZM1291.9 671.3L1298.4 670.1L1298.8 668.9L1305.0 667.0L1309.0 661.8L1312.9 659.9L1317.0 655.9L1319.9 652.0L1323.4 654.0L1325.0 656.5L1329.5 658.7L1326.2 660.3L1324.2 662.8L1323.1 665.8L1323.8 671.7L1328.4 675.5L1323.8 676.4L1322.7 681.5L1319.9 684.6L1318.7 689.3L1317.6 693.2L1316.8 694.8L1311.7 695.6L1311.3 692.8L1305.0 692.4L1299.9 691.3L1294.5 690.9L1293.7 686.6L1290.1 681.1L1289.9 679.5L1289.4 675.6L1289.4 672.1ZM1468.0 699.9L1471.5 703.1L1473.5 706.2L1470.8 705.8L1468.4 702.3ZM1356.0 692.0L1359.9 691.7L1360.7 694.0L1356.8 694.4ZM1345.4 642.1L1346.6 642.1L1348.3 635.3L1347.7 634.9L1345.8 639.3ZM896.0 495.7L899.1 492.5L899.7 497.3L898.3 501.0L896.8 499.9ZM954.4 530.5L958.3 531.0L965.3 531.5L965.0 532.9L959.1 533.2L954.4 531.7ZM529.5 591.7L533.2 588.1L537.1 586.9L539.7 586.2L544.2 586.2L548.9 587.3L552.8 589.4L555.5 589.8L560.2 592.8L564.5 594.9L566.1 596.6L571.8 598.4L568.1 599.9L565.1 599.6L557.8 600.2L560.2 597.4L556.3 596.6L554.7 595.3L550.8 592.8L547.1 592.2L546.9 590.9L543.0 590.5L541.0 589.8L539.8 588.1L535.1 590.3L532.0 591.9ZM988.9 532.9L991.2 531.0L997.9 529.6L995.5 532.9L991.6 534.8ZM952.4 513.3L957.1 515.3L958.7 518.3L956.3 516.8L953.6 514.8ZM622.5 917.0L629.2 914.4L635.8 916.3L633.1 920.1L628.4 920.1L623.3 920.1ZM1331.7 712.5L1336.4 712.5L1343.4 711.7L1344.2 712.5L1340.3 714.1L1334.4 714.1L1331.7 713.7ZM900.7 416.9L904.2 416.2L904.6 419.7L901.9 420.4ZM840.0 452.3L845.8 450.5L848.0 451.3L850.5 448.3L852.7 449.2L857.2 448.9L863.3 448.0L866.1 447.0L867.6 445.6L868.0 444.1L864.3 443.3L865.8 441.7L867.4 440.5L869.2 437.1L867.4 434.2L864.3 434.0L863.1 435.0L863.7 432.7L862.8 429.9L862.0 426.3L859.9 423.8L857.8 422.8L856.7 420.4L856.0 416.2L854.5 415.1L852.5 413.5L849.8 413.5L852.2 411.5L852.5 409.2L854.1 405.3L855.3 402.7L854.5 401.3L848.6 401.3L845.8 402.7L846.6 399.8L850.4 394.3L842.7 394.4L841.5 397.6L839.6 402.0L840.0 406.4L837.9 408.3L840.9 410.5L840.4 414.2L839.6 418.3L841.5 415.6L843.1 414.2L844.2 417.2L842.3 420.7L842.7 422.8L845.1 422.4L848.6 420.7L848.1 423.8L849.8 426.5L851.1 426.5L850.4 428.5L850.5 431.1L849.0 431.4L844.3 431.1L845.1 433.1L843.7 435.0L846.2 435.0L846.3 437.5L843.9 439.5L841.5 440.9L842.3 442.4L845.5 443.0L849.8 443.6L851.9 442.7L850.5 445.2L846.2 445.2L844.6 446.3L842.3 450.0ZM933.2 404.2L936.7 399.4L936.4 403.5L933.6 407.1ZM1293.3 599.1L1296.0 599.1L1297.2 601.2L1295.2 604.5L1291.3 607.0L1288.2 605.7L1288.2 602.4L1290.5 599.9ZM1361.8 670.9L1363.8 671.7L1363.4 674.4L1366.5 673.6L1366.5 675.6L1363.8 677.1L1365.8 678.3L1367.3 678.7L1364.6 680.7L1365.4 683.0L1363.4 681.1L1362.6 676.4L1361.8 675.6ZM948.5 392.3L952.0 390.8L952.4 393.5L950.1 393.8ZM570.6 606.3L572.0 605.1L576.3 605.9L578.8 605.5L577.1 603.2L577.5 601.8L574.7 600.3L579.4 600.5L581.4 599.9L585.3 600.3L588.4 601.0L591.2 602.4L589.6 603.4L593.1 603.9L594.5 605.3L593.1 607.0L588.4 605.9L586.1 607.0L583.7 607.0L582.6 609.4L581.2 607.7L578.2 607.0L573.3 607.0ZM1411.2 501.0L1413.8 499.2L1415.5 498.9L1412.4 496.0L1414.7 496.3L1417.5 494.7L1423.6 498.1L1424.9 494.7L1428.1 492.5L1433.5 490.6L1431.2 489.3L1431.8 485.5L1427.7 487.4L1422.6 483.8L1418.5 478.8L1417.3 479.4L1417.9 484.4L1417.3 487.7L1416.1 490.9L1414.7 491.5L1412.2 490.9L1412.8 492.8L1410.2 494.7L1410.0 496.8L1410.8 499.9ZM1414.3 500.5L1416.7 501.0L1416.7 505.7L1418.7 510.3L1416.7 516.8L1414.7 517.1L1414.7 523.3L1413.2 526.7L1414.2 529.3L1412.4 532.0L1410.2 533.4L1410.0 530.1L1407.7 532.5L1406.5 534.8L1404.9 532.9L1403.8 534.8L1399.1 534.8L1398.7 536.3L1396.3 537.7L1394.4 540.3L1391.6 538.2L1391.8 536.5L1392.8 534.6L1389.3 534.4L1386.9 535.1L1381.4 536.3L1377.5 537.7L1375.2 537.9L1375.6 535.8L1377.1 535.8L1381.8 531.0L1383.8 530.3L1388.1 530.3L1392.4 529.6L1395.1 529.6L1395.5 527.2L1397.9 524.2L1397.9 521.8L1400.2 520.8L1399.1 522.8L1399.8 524.5L1403.8 522.5L1406.5 519.3L1407.1 518.6L1410.0 513.8L1410.8 509.8L1410.4 505.1L1412.0 502.6L1413.6 503.9L1415.5 502.0ZM773.4 352.2L776.1 347.7L768.1 342.4L776.1 340.4L776.1 337.6L766.2 336.6L772.2 328.0L774.5 327.4L778.8 335.7L780.0 336.6L783.5 330.9L791.0 329.9L791.4 334.7L798.8 327.0L805.3 328.2L803.5 333.8L809.0 336.6L809.4 340.7L805.5 346.8L802.7 348.2L797.7 352.2L791.8 355.3L787.9 355.7L782.8 354.4L780.0 351.7ZM837.3 439.1L838.8 433.9L838.4 431.4L837.6 427.1L840.9 424.4L840.0 422.1L838.2 418.9L833.4 417.8L829.9 419.3L828.2 422.8L830.2 423.8L823.1 425.1L822.3 427.3L823.5 431.1L826.8 431.9L825.5 434.0L823.4 436.6L821.3 439.5L822.3 441.7L823.8 443.6L829.0 442.7L829.8 441.4L834.9 439.5ZM555.3 606.5L557.1 605.7L561.0 606.1L563.7 607.8L561.4 608.2L559.8 609.0L557.9 608.4ZM1274.5 706.2L1277.6 702.7L1280.7 703.4L1285.1 704.2L1287.8 705.8L1294.8 706.8L1296.8 704.6L1303.9 707.8L1310.5 709.8L1310.9 713.9L1305.0 712.1L1297.2 711.9L1293.3 710.6L1287.4 710.0L1279.6 708.6ZM1131.9 898.6L1138.5 900.4L1137.7 904.0L1132.6 904.0ZM1375.2 538.2L1378.3 539.6L1379.1 542.4L1378.3 544.3L1377.1 547.5L1375.9 550.3L1374.4 551.6L1372.4 550.5L1372.4 546.6L1374.0 544.3L1370.9 543.8L1370.5 541.5L1371.2 540.0L1373.2 539.6ZM1310.9 711.7L1315.2 711.7L1319.5 712.1L1319.1 714.5L1316.4 714.1L1313.7 714.1L1310.9 712.9ZM1334.8 605.7L1336.4 605.3L1341.1 605.7L1342.3 611.5L1338.7 616.0L1338.7 622.9L1342.3 623.3L1345.4 624.9L1348.5 628.1L1348.5 629.9L1345.4 628.1L1342.6 627.3L1340.3 624.9L1337.2 625.7L1334.8 624.1L1334.8 622.1L1336.0 621.7L1332.9 620.9L1332.5 618.8L1331.7 614.8L1333.6 616.0L1333.8 611.9L1334.0 609.4ZM1055.5 726.9L1058.2 732.9L1059.4 740.2L1060.2 742.6L1057.4 743.0L1057.4 741.4L1056.6 745.1L1055.8 751.2L1053.5 759.5L1051.5 765.8L1049.6 772.1L1046.8 780.3L1040.6 783.1L1034.7 780.7L1033.5 773.6L1031.9 767.9L1032.7 765.0L1035.9 760.8L1036.3 755.4L1034.7 751.2L1034.7 747.1L1036.7 743.8L1040.6 742.6L1043.7 741.8L1047.2 738.6L1050.0 734.9L1050.4 732.9L1053.5 728.9ZM871.7 510.3L874.8 508.5L875.8 510.3L874.1 511.8ZM1087.2 759.5L1088.8 759.9L1088.4 761.6L1086.8 761.2ZM1353.6 640.9L1357.1 644.1L1357.5 648.1L1358.3 650.8L1356.8 654.8L1354.8 652.4L1354.4 652.0L1353.6 655.9L1353.6 657.5L1348.9 655.2L1348.1 652.0L1345.8 649.6L1340.7 652.4L1341.1 648.8L1344.2 646.1L1345.8 645.7L1347.3 647.7L1349.3 647.3L1350.9 646.1L1352.8 644.1L1354.0 644.1ZM1333.6 626.5L1336.8 626.1L1338.3 629.7L1336.8 631.3L1335.2 628.9ZM1341.9 640.5L1343.8 643.7L1345.4 642.9L1346.2 636.9L1344.2 636.1L1343.4 638.1ZM1443.3 701.5L1448.0 701.1L1452.0 701.1L1455.9 696.0L1459.0 696.0L1458.6 699.1L1455.9 701.5L1452.0 704.2L1448.0 704.2L1443.7 702.7ZM1504.9 759.9L1510.7 763.7L1516.6 769.2L1513.9 769.2L1508.0 764.5ZM630.0 466.9L630.4 461.6L635.1 455.6L637.8 448.3L639.8 444.6L644.9 442.7L643.3 447.1L640.9 452.6L639.8 453.8L644.1 453.2L646.8 455.6L652.3 456.8L654.6 461.0L651.1 464.0L654.6 464.5L656.0 467.2L654.4 472.4L652.3 472.4L650.7 468.6L649.9 471.5L645.2 470.9L644.9 467.5L639.4 466.9L635.1 466.3ZM1375.6 682.6L1381.4 680.9L1387.6 682.9L1388.1 685.4L1389.3 690.5L1391.2 692.4L1393.2 692.8L1397.1 688.1L1402.2 685.4L1406.1 686.9L1413.6 689.5L1414.7 689.7L1420.6 692.0L1424.9 693.4L1429.2 694.8L1433.5 697.2L1433.5 699.9L1434.3 700.7L1439.0 702.7L1441.6 705.4L1438.2 706.0L1440.6 710.6L1443.7 713.7L1447.3 715.1L1449.6 718.9L1453.4 719.8L1450.0 721.7L1446.1 720.1L1438.8 716.7L1434.3 711.3L1429.6 709.8L1424.5 712.1L1423.4 715.3L1420.6 715.7L1414.7 715.3L1410.8 711.7L1406.9 711.3L1403.0 712.5L1401.4 710.2L1406.5 707.8L1405.3 704.2L1403.0 701.1L1399.1 698.7L1395.1 697.5L1391.2 696.4L1385.4 694.8L1383.4 695.6L1382.6 692.4L1380.7 691.1L1379.1 690.5L1383.4 689.3L1386.5 688.5L1381.4 688.1L1379.5 687.3L1375.6 685.4L1375.2 684.6ZM1453.1 689.7L1455.9 691.3L1459.8 694.4L1462.1 697.2L1461.4 698.3L1459.0 695.2L1454.7 691.7ZM1538.9 823.2L1541.3 826.1L1545.2 827.5L1547.2 834.8L1549.9 833.8L1551.5 838.2L1552.7 839.0L1556.6 840.7L1559.7 838.5L1561.9 839.2L1560.9 843.7L1559.3 846.2L1555.4 848.2L1555.8 851.8L1552.7 855.9L1549.1 859.1L1547.2 857.5L1548.3 853.3L1548.7 851.8L1547.9 850.5L1543.1 847.2L1546.4 844.2L1547.2 839.7L1546.8 835.7L1544.8 832.3L1540.5 827.0ZM1538.9 853.3L1540.1 855.4L1540.5 857.5L1544.0 855.4L1545.2 855.9L1545.2 859.6L1542.9 863.3L1539.3 869.2L1540.5 870.8L1536.2 871.9L1533.5 874.1L1533.1 877.4L1531.1 882.4L1527.6 885.8L1522.1 886.4L1519.0 884.1L1514.3 882.4L1516.6 877.4L1520.5 873.0L1522.1 871.9L1526.4 869.7L1530.3 866.5L1533.1 863.5L1534.6 859.8L1536.6 855.9L1536.6 854.9ZM926.6 412.1L929.3 403.5L928.5 407.8ZM1321.5 646.5L1322.7 646.1L1327.4 641.7L1330.5 638.5L1330.9 634.5L1329.3 635.7L1326.6 640.1L1322.7 644.1ZM1339.9 632.9L1343.8 633.7L1344.6 635.3L1342.6 638.1L1340.3 638.1ZM610.0 472.6L611.5 470.3L619.4 473.5L617.4 476.0L611.5 474.3ZM599.0 605.7L605.3 606.1L604.5 607.8L599.0 608.0ZM1078.6 763.3L1080.9 763.7L1080.5 765.4L1079.0 764.5ZM947.7 396.8L952.4 393.8L953.2 396.1L949.3 399.4ZM1418.7 425.1L1421.4 424.4L1422.6 430.4L1423.7 436.9L1423.4 443.3L1424.9 452.6L1429.2 459.2L1422.6 457.4L1421.8 464.5L1421.0 467.5L1422.6 469.2L1424.1 471.5L1424.5 474.9L1421.4 472.6L1419.0 476.6L1418.3 470.3L1419.0 464.5L1418.7 455.6L1419.4 449.5L1417.9 442.0L1417.5 436.9L1418.3 431.1ZM1349.3 630.1L1353.2 630.1L1354.8 635.3L1352.8 636.1L1352.8 639.7L1351.3 640.1L1349.7 636.9L1350.1 634.1ZM894.4 503.6L898.3 501.8L900.7 505.7L899.9 512.3L897.6 513.3L895.2 512.8L895.2 506.7ZM1363.4 692.0L1369.7 690.5L1374.8 692.0L1374.8 694.4L1369.7 693.2L1363.8 693.6ZM1381.4 539.6L1383.4 537.7L1387.3 536.0L1389.9 537.2L1390.3 538.6L1388.1 541.2L1385.4 540.0L1383.4 543.6L1381.4 542.4L1381.0 540.5ZM911.1 519.3L914.6 517.3L923.4 516.8L921.5 521.8L921.5 525.0L918.3 523.7L912.8 520.5ZM1071.1 629.7L1075.8 629.7L1075.8 630.9L1071.5 630.5ZM713.4 931.9L719.3 933.2L722.0 937.3L717.3 935.2ZM1175.7 640.9L1179.3 645.7L1182.8 650.0L1182.4 654.4L1180.0 655.6L1178.1 656.1L1175.7 655.2L1175.2 652.4L1175.0 648.1L1175.3 644.5ZM1518.6 888.1L1521.3 887.5L1521.3 889.2L1519.0 890.4ZM1352.8 673.2L1351.5 673.6L1344.2 675.8L1336.4 674.4L1335.6 675.4L1331.7 679.5L1331.9 683.0L1329.7 685.4L1328.5 689.3L1328.3 693.2L1330.9 695.2L1330.1 699.7L1332.1 701.5L1334.2 701.5L1333.6 697.2L1334.0 691.3L1336.0 689.9L1338.3 694.4L1338.7 698.3L1340.3 698.7L1342.6 696.8L1342.6 695.1L1341.1 692.4L1339.9 689.3L1338.3 686.9L1343.4 685.8L1345.8 683.2L1343.8 682.4L1338.7 683.0L1336.8 685.0L1335.4 685.0L1332.9 682.2L1332.5 677.5L1338.3 677.5L1344.4 677.5L1349.7 677.9L1352.8 674.0ZM1235.7 657.5L1242.9 659.1L1249.0 664.6L1254.1 668.9L1255.7 670.5L1259.6 672.8L1263.1 675.6L1267.4 677.5L1269.0 680.7L1268.2 683.4L1271.7 686.9L1273.7 688.9L1277.6 691.3L1277.6 692.4L1277.2 696.8L1277.0 702.5L1274.9 701.1L1272.1 701.5L1269.4 699.9L1262.9 694.4L1258.0 688.9L1255.5 683.2L1250.6 678.3L1249.4 672.8L1244.7 669.3L1238.8 663.4ZM1328.5 716.9L1332.5 716.1L1335.6 718.9L1333.2 720.1L1329.3 718.1ZM1319.9 712.5L1324.6 711.7L1328.9 712.5L1328.5 713.9L1322.7 714.9L1319.9 714.5ZM1338.5 577.0L1340.3 578.3L1338.7 582.6L1337.6 587.3L1335.8 591.5L1333.6 588.6L1332.9 584.7L1335.2 580.0L1336.4 578.3ZM1429.2 854.4L1436.3 856.4L1443.3 855.4L1443.3 861.2L1441.8 867.5L1438.2 869.7L1434.3 869.2L1431.2 862.2L1429.2 855.9ZM1346.2 720.1L1348.1 716.5L1352.0 713.7L1357.9 712.5L1361.1 712.5L1357.9 714.9L1352.0 717.3L1348.1 719.7ZM619.8 637.3L623.7 636.9L623.3 639.7L619.8 639.9ZM1015.9 701.9L1016.7 702.7L1017.1 704.6L1016.3 704.2ZM905.4 415.6L911.7 412.8L911.7 418.3L908.1 420.4L905.8 418.3ZM476.0 160.2L483.2 158.2L491.4 167.4L490.4 176.6L483.2 176.6L478.1 169.4ZM484.2 128.4L488.3 113.0L496.5 107.9L510.9 107.9L510.9 118.2L519.1 124.3L521.2 136.6L529.4 146.9L519.1 161.2L517.1 169.4L507.8 171.5L498.6 165.3L492.4 155.1L496.5 148.9L488.3 140.7ZM510.3 252.6L515.4 243.3L527.7 241.3L525.0 254.6L525.8 271.0L529.1 273.5L532.0 256.7L530.8 247.4L544.1 243.3L555.4 244.4L563.0 251.5L564.0 257.7L571.8 265.9L582.1 274.1L594.4 283.3L600.5 291.5L598.5 300.8L609.7 312.1L620.6 322.7L617.9 332.6L612.8 342.4L604.6 335.0L596.0 330.1L600.5 340.8L607.7 351.0L609.7 361.3L608.1 370.5L600.5 361.3L593.3 354.5L598.5 363.3L608.7 373.6L596.4 367.8L584.1 361.3L571.8 351.4L563.6 349.0L556.4 344.9L556.0 339.1L563.6 336.7L572.8 334.6L571.8 328.5L578.4 320.3L576.3 312.1L568.1 305.9L563.6 299.7L561.5 293.6L553.3 289.5L543.1 291.9L534.9 289.5L526.7 289.5L513.3 281.3L510.3 271.0ZM374.5 233.0L387.8 230.6L402.2 236.1L410.0 246.4L399.1 255.6L394.0 269.9L379.6 277.1L369.4 264.8L372.4 247.4ZM465.8 198.2L472.9 197.1L480.1 202.3L479.1 218.7L472.9 224.8L466.8 218.7L461.7 208.4ZM1393.0 210.9L1395.4 210.9L1395.9 219.4L1393.5 219.4ZM1135.5 248.7L1140.4 246.2L1142.9 251.1L1138.0 253.6ZM418.6 175.6L429.9 171.5L431.9 179.7L424.7 185.8L418.6 181.7ZM411.4 173.5L415.5 172.5L416.5 178.7L412.4 179.7ZM451.4 218.7L456.5 218.7L456.5 223.8L451.4 223.8ZM533.2 362.3L540.0 359.2L541.0 362.3L534.9 366.4ZM485.3 178.7L496.5 178.1L496.5 183.4L486.3 183.8ZM485.3 218.7L491.4 214.6L496.5 220.7L495.5 228.9L486.3 227.9ZM500.6 210.5L510.9 214.6L525.3 213.5L539.6 210.5L550.9 216.6L549.9 226.9L539.6 232.0L512.9 231.0L501.7 226.9L498.6 214.6ZM942.7 163.3L950.0 162.0L957.4 175.5L952.5 185.2L945.2 182.8L943.9 173.0ZM412.4 193.0L416.5 193.0L417.6 197.1L413.5 198.2ZM448.3 148.9L455.5 145.8L465.8 155.1L474.0 165.3L472.9 176.6L465.8 173.5L457.6 168.4L451.4 161.2ZM517.1 107.9L595.0 107.9L589.9 124.3L575.5 132.5L570.4 148.9L568.3 167.4L557.1 179.7L558.1 194.1L551.9 202.3L539.6 202.3L512.9 202.3L506.8 198.2L515.0 191.0L519.1 177.6L529.4 181.7L539.6 175.6L537.6 159.2L531.4 148.9L523.2 136.6L521.2 124.3ZM1039.1 116.9L1051.3 113.2L1063.5 112.0L1066.0 119.3L1061.1 126.6L1056.2 132.7L1048.9 131.5L1044.0 123.0ZM1068.4 125.4L1075.7 120.5L1083.1 121.8L1085.5 130.3L1075.7 131.5ZM1087.9 121.8L1095.3 114.4L1105.0 109.6L1109.9 116.9L1102.6 124.2L1092.8 129.1ZM1107.5 109.6L1118.5 109.6L1117.2 115.7L1109.9 116.9ZM504.7 180.7L509.9 181.7L510.9 186.9L505.8 187.9ZM476.4 292.6L487.7 299.7L492.8 303.8L487.7 311.0L476.4 310.0L469.2 303.8ZM1050.1 298.7L1055.0 295.1L1059.9 298.7L1057.4 304.8L1051.3 304.8ZM970.8 155.4L975.7 154.0L978.6 157.2L973.2 158.9ZM1399.1 217.0L1401.5 209.6L1407.6 206.0L1413.7 209.6L1416.2 206.0L1422.3 209.6L1429.6 212.1L1430.8 220.6L1425.9 226.7L1419.8 225.5L1413.7 224.3L1407.6 229.2L1401.5 225.5ZM985.4 127.9L990.3 125.4L994.0 127.9L989.1 132.0ZM446.3 178.7L449.4 177.6L453.5 188.9L450.4 189.9ZM1411.3 245.0L1417.4 240.1L1424.7 243.8L1424.7 249.9L1414.9 249.2ZM1410.1 236.0L1413.7 234.8L1415.4 239.4L1411.3 240.6ZM418.6 166.4L427.8 159.2L434.0 162.3L431.9 168.4L421.7 169.4ZM548.2 364.4L550.9 363.3L551.3 370.5L548.8 371.5ZM468.8 132.5L474.0 129.4L476.0 136.6L471.9 139.7ZM402.2 208.4L409.4 202.3L422.7 210.5L430.9 208.4L434.0 195.1L439.1 200.2L440.1 208.4L448.3 210.5L448.3 220.7L439.1 225.8L423.7 226.9L416.5 233.0L414.5 227.9L406.3 220.7L401.2 216.6ZM1435.7 217.0L1441.8 218.2L1454.0 221.8L1452.8 226.7L1444.2 228.7L1436.9 223.1ZM933.0 126.6L939.1 123.0L951.3 121.8L958.6 124.2L969.6 130.3L968.3 141.3L957.4 149.8L948.8 147.4L941.5 142.5L934.2 136.4ZM1064.8 270.7L1067.2 258.4L1072.1 248.7L1075.7 234.0L1081.8 219.4L1092.8 209.6L1102.6 203.5L1114.8 199.9L1120.9 193.8L1128.2 191.3L1133.1 196.2L1131.9 206.0L1122.1 210.9L1112.4 215.7L1102.6 223.1L1095.3 231.6L1087.9 243.8L1081.8 256.0L1080.6 268.2L1087.9 280.4L1081.8 282.9L1073.3 280.4L1067.2 275.5ZM560.5 311.0L565.6 309.0L568.7 314.1L564.6 320.3L560.5 318.2ZM461.7 253.5L468.8 240.2L478.1 238.2L483.2 245.3L482.2 255.6L484.2 269.9L476.0 275.1L466.8 263.8ZM380.6 204.3L389.9 192.0L403.2 182.8L409.4 185.8L404.2 198.2L399.1 208.4L389.9 209.4L381.7 208.4ZM487.3 239.2L498.6 237.1L507.8 240.2L502.7 255.6L496.5 262.8L488.3 261.7L486.3 251.5ZM522.4 334.1L527.6 327.8L532.1 334.1L535.5 343.2L546.7 351.7L545.6 355.6L538.2 350.4L534.3 352.2L531.0 357.8L523.1 356.2L520.8 348.8ZM903.7 158.4L904.9 141.3L912.2 135.2L922.0 136.4L924.4 131.5L931.7 136.4L933.0 146.2L937.8 155.9L942.7 160.8L940.3 175.5L931.7 185.2L929.3 198.6L924.4 197.4L917.1 182.8L915.9 173.0L909.8 169.4L904.9 164.5ZM444.2 244.3L450.4 243.3L452.4 249.4L447.3 252.5ZM1219.7 109.6L1245.3 109.6L1246.5 119.3L1241.6 127.9L1231.9 131.5L1219.7 136.4ZM1229.4 136.4L1236.8 129.1L1249.0 130.3L1255.1 141.3L1252.6 155.9L1244.1 158.4L1234.3 152.3L1229.4 143.7ZM1251.4 173.0L1256.3 158.4L1262.4 145.0L1267.3 146.2L1272.2 155.9L1277.0 165.7L1268.5 170.6L1258.7 174.2ZM1091.6 286.5L1095.3 285.3L1100.1 292.6L1096.5 293.8ZM397.1 262.8L406.3 251.5L416.5 249.0L422.7 259.7L430.9 255.6L438.1 253.5L439.1 267.9L443.2 263.8L443.2 248.4L451.4 253.5L453.5 274.1L465.8 288.4L466.8 296.6L455.5 302.8L443.2 298.7L432.9 304.8L416.5 306.9L404.2 294.6L408.3 286.4L422.7 285.3L416.5 282.3L402.2 276.1L397.1 267.9ZM1560.2 278.0L1565.1 271.9L1573.6 270.7L1573.6 280.4L1562.6 280.9Z" fill="#f2efe9" stroke="#93c4d6" stroke-width="1.6" stroke-linejoin="round"/>
<path d="M1046.4 481.6L1048.4 478.3L1054.3 473.2L1062.1 470.3L1068.0 470.9L1070.0 474.3L1070.7 480.0L1069.2 480.0L1063.3 480.5L1062.1 484.4L1059.4 485.5L1061.7 491.5L1064.5 492.0L1068.0 494.7L1068.8 498.9L1069.6 502.0L1069.6 508.2L1072.7 511.3L1073.5 517.3L1073.5 521.8L1070.0 523.7L1066.0 524.7L1062.1 524.5L1059.0 521.5L1055.8 520.8L1053.9 516.8L1054.7 512.3L1055.8 507.2L1059.4 506.4L1056.2 504.6L1052.3 498.4L1048.4 492.5L1048.0 488.8L1045.3 484.4Z" fill="#aad3df" stroke="#9ccbdb" stroke-width="1"/><path d="M501.5 472.1L505.8 470.9L508.1 472.6L513.6 470.9L516.7 468.0L519.1 470.9L519.9 473.2L525.4 472.6L529.3 471.5L531.2 473.2L530.4 470.3L529.3 465.1L524.2 460.4L516.7 458.6L512.8 462.2L509.7 465.7L505.8 468.6ZM519.1 499.9L521.8 499.4L524.2 495.2L523.4 488.8L524.6 483.3L527.3 481.1L529.3 477.4L526.1 476.0L522.6 477.2L521.0 477.7L517.9 483.8L519.5 482.2L520.3 485.5L518.3 489.8L518.3 495.2ZM530.4 477.2L535.1 480.0L535.9 485.5L533.6 488.8L537.5 487.1L539.5 492.5L542.2 489.8L542.2 485.5L543.8 480.5L548.5 484.4L549.6 482.2L546.9 478.3L543.0 476.0L537.1 474.9L533.2 475.5ZM535.5 499.4L539.1 501.0L543.0 499.9L548.9 496.8L553.2 493.3L550.8 493.3L546.9 494.7L543.0 495.2L539.1 497.8L536.7 497.3ZM549.6 490.9L552.8 491.5L558.7 491.2L563.4 489.8L563.7 486.6L560.6 487.1L556.7 487.4L551.6 489.0ZM482.6 450.2L485.0 448.9L484.2 443.3L482.3 438.9L480.3 433.7L477.6 428.5L473.6 427.8L475.2 432.4L476.4 438.2L480.3 443.3L482.3 447.1ZM403.9 376.7L409.8 377.5L415.6 375.9L421.5 372.6L427.4 365.2L433.3 361.8L429.4 360.0L423.5 363.5L417.6 367.7L413.7 364.3L407.8 368.5L403.9 373.4ZM374.5 341.3L380.4 339.4L388.2 341.3L394.1 337.6L400.0 329.9L398.0 324.0L392.1 326.0L388.2 322.0L382.3 327.0L378.4 329.9L372.5 331.9L378.4 335.7ZM986.5 682.6L987.7 679.1L991.6 677.9L995.5 678.7L996.3 681.1L995.5 683.4L994.7 687.3L991.6 689.3L987.7 689.7L986.9 686.6ZM1268.6 442.0L1273.7 442.0L1279.6 438.2L1285.4 432.4L1289.4 427.1L1292.5 417.6L1291.3 414.9L1288.6 420.4L1285.4 427.1L1279.6 433.7L1275.6 438.2L1269.8 440.8ZM983.8 384.2L989.6 382.3L991.6 377.5L989.6 373.4L985.7 370.2L979.8 373.4L980.6 379.9L983.4 383.1ZM1252.1 234.7L1258.0 230.3L1265.9 230.3L1273.7 231.8L1265.9 234.7L1258.0 237.5ZM582.2 329.9L588.0 324.0L586.1 328.9L584.1 332.8Z" fill="#b3d8e3" stroke="#c9e1e8" stroke-width="0.8"/><path d="M379.2 458.6L489.5 458.6L489.5 456.2L491.7 460.4L499.9 462.2L506.5 463.4L511.2 464.5L515.9 462.8L523.4 467.5L530.1 470.9L531.2 473.2L535.1 476.0L539.1 480.0L539.5 492.5L538.3 499.4L552.8 493.1L552.6 491.2L556.7 489.3L561.4 489.3L563.4 486.0L568.4 481.6L582.2 481.6L582.9 480.0L584.9 479.4L586.9 474.9L588.0 472.1L591.2 467.8L595.1 468.3L596.7 469.9L596.7 477.7L598.2 480.0L599.8 482.2M403.5 544.7L412.9 543.8L412.5 544.7L427.2 550.1L438.4 550.1L438.4 548.1L445.0 548.1L450.9 553.0L452.9 558.0L458.0 560.7L461.1 557.1L465.0 557.2L468.5 562.0L472.5 567.4L474.0 572.2L477.6 573.7L481.7 574.2M501.1 622.1L501.5 619.6L503.0 615.6L507.7 615.6L505.8 611.1L505.8 608.6L513.0 608.6L512.8 616.4L514.0 616.4M513.0 608.6L516.3 605.7M509.3 625.1L512.2 622.5L516.7 617.2M512.2 622.5L515.6 624.5L518.3 626.5M520.3 628.1L522.6 624.9L526.1 624.5L530.1 620.9L536.5 620.0M526.5 635.7L530.4 636.1L534.4 636.5M537.5 647.9L537.5 642.1L538.7 641.7M557.1 651.0L559.8 648.4L559.0 645.5M581.2 607.7L580.6 605.3L581.4 603.2L581.2 600.7M582.9 632.9L578.2 635.7L576.3 643.3L578.6 646.9L580.2 650.4L587.6 652.0L590.4 655.6L597.8 655.2L596.7 658.7L598.6 666.2L598.6 670.5L600.2 674.8M600.2 674.8L599.4 672.8L588.8 672.8L588.8 675.2L591.2 675.6L590.4 683.4L588.2 696.0M588.2 696.0L585.3 694.4L576.7 688.9L569.2 680.3L567.3 679.9L563.4 677.9L558.7 676.8L553.6 674.0M567.3 679.9L567.7 683.4L564.5 687.7L555.9 692.8L555.1 695.2L552.8 699.1L547.7 692.8M588.2 696.0L576.7 699.5L575.5 705.4L572.4 708.6L576.3 715.7L579.4 718.9L585.7 716.9L585.7 722.9L589.6 722.7M589.6 722.7L593.1 728.9L592.0 733.7L590.4 738.1L592.0 740.2L589.6 741.4L592.0 743.8L590.0 748.3L590.0 749.2L586.5 752.7M589.6 722.7L592.7 722.9L601.4 718.5L606.5 717.7L606.1 725.7L610.0 728.5L616.2 730.9L620.2 732.9L625.3 734.1L626.4 744.2L633.5 744.2L634.3 748.8L637.0 752.0L635.8 755.4L634.5 758.7L634.3 760.1M634.3 760.1L630.7 756.6L620.6 757.8L618.2 761.6L616.8 769.0L611.9 767.9L610.4 771.3L606.8 768.3L602.5 767.1L599.0 771.3M590.0 749.2L591.6 751.6L592.3 755.4L593.9 759.1L593.9 763.3L596.3 771.3L599.0 771.3L599.8 772.1L598.6 776.4L594.3 778.6L593.9 786.4L591.2 790.8L588.8 796.1L588.0 802.8L586.1 809.7L588.0 816.6L588.8 822.3L586.5 827.5L583.7 833.8L583.3 840.7L582.2 848.2L581.0 855.9L581.0 863.8L581.4 871.9L582.9 880.2L581.0 887.5L578.6 894.5L576.3 901.6L575.5 909.5L579.0 912.6L580.2 918.9L588.0 918.9L594.1 921.1M593.5 923.0L593.5 937.9M616.8 769.0L623.3 775.6L631.9 779.9L636.6 782.0L632.7 790.3L642.9 790.8L648.4 783.3M634.3 760.1L635.4 768.3L643.7 769.2L645.2 776.4L649.6 776.4L648.4 783.3L651.5 783.8L651.9 789.0L643.7 794.7L636.6 803.7M636.6 803.7L642.9 806.5L644.5 806.9L650.7 811.5L653.1 814.7L653.1 820.1M636.6 803.7L634.3 814.3L633.5 821.3M600.2 674.8L605.7 676.0L611.5 672.1L613.9 670.9L610.8 669.7L611.5 663.4L616.2 663.8L623.3 661.8L624.5 659.1L621.7 656.3L622.9 653.2L626.0 651.6L628.0 646.9M624.5 659.1L627.2 659.9L627.6 661.8L628.8 664.2L627.6 670.5L631.1 674.4L635.1 673.6L640.9 672.1L643.3 672.1L648.4 670.5L655.0 670.9L659.9 663.0M638.2 656.1L637.8 659.9L635.1 663.8L638.2 666.6L640.9 672.1M650.7 656.9L649.2 661.8L650.7 665.8L648.4 670.5M853.7 532.5L855.2 537.7L857.6 546.6L850.5 548.4L848.2 553.0L842.7 556.6L836.8 558.0L828.3 562.0L828.3 568.2L843.4 578.3L866.8 594.9L867.0 596.6L874.8 600.3L875.2 603.6L879.0 603.0L885.0 601.8L891.7 595.9L909.3 584.7L901.5 580.4L899.1 573.1L901.1 567.4L899.5 555.0L897.8 546.6L891.7 538.6L894.8 534.4L894.4 525.7L896.0 523.5M828.3 566.6L810.6 566.6M828.3 573.9L815.3 573.9L815.3 584.9L811.4 586.9L811.0 593.9L795.9 593.9M843.4 578.3L836.8 578.3L840.4 613.9L841.5 618.0L825.9 618.0L819.6 619.6L817.2 617.6L814.5 620.9L810.2 615.6L805.5 613.5L797.7 616.0M899.5 555.0L902.7 552.1L902.7 548.4L907.4 545.2L907.4 541.7M960.8 548.9L960.2 559.8L960.2 591.1L960.2 599.5L956.3 599.5L956.3 601.6L925.0 584.9L921.1 586.9L917.9 588.6L909.3 584.7M960.2 591.1L1006.9 591.1M956.3 601.6L956.3 617.2L952.0 618.0L950.5 623.7L948.5 629.3L952.0 636.5L955.2 645.3L957.1 646.9L961.4 650.8L969.7 659.5M921.1 586.9L923.0 595.3L923.0 612.3L915.2 622.1L915.6 625.3L909.3 627.7L897.6 628.7L889.7 628.1L878.4 626.1L876.4 633.3M879.0 603.0L879.0 612.3L876.0 618.4L866.2 620.2L863.1 620.2L854.5 623.3L850.9 625.3L846.6 626.5L841.5 632.5L840.8 638.5L838.0 637.3L831.0 639.3L829.8 636.1L827.0 630.5L817.6 630.5L814.5 620.9M817.6 630.5L808.6 629.5L803.5 629.5L796.9 630.7M796.5 625.7L803.5 624.9L808.2 626.1L803.5 627.3L796.5 627.7M803.5 636.1L808.6 633.3L808.6 629.5M810.2 644.1L813.3 640.5L818.4 640.1L820.8 643.7L821.9 646.1L817.2 652.4M821.9 646.1L825.5 646.9L829.0 649.6L829.8 654.0L833.3 656.7L832.7 662.4M829.0 649.6L832.1 646.5L831.0 639.3M850.2 659.5L849.8 652.8L852.5 647.3L851.7 642.1L850.9 636.1L861.5 635.7M840.8 638.5L844.3 641.3L851.7 642.1M867.0 655.6L864.7 652.0L864.3 644.9L862.3 637.7L861.7 635.7M868.6 655.2L868.6 644.1L865.4 638.5L865.8 636.1L871.7 632.1L876.4 633.3M872.9 654.4L873.3 644.1L876.4 638.9L876.4 633.3M870.9 630.5L863.1 620.2M895.6 661.5L898.3 654.8L906.6 653.6L908.5 651.6L914.0 642.1L917.9 634.9L919.5 631.3L917.5 627.7L915.6 625.3M917.5 627.7L921.5 634.1L921.1 640.1L916.8 641.7L923.0 650.0L919.1 655.9L919.1 661.5L921.5 664.6L925.4 670.9L925.8 672.8L914.4 670.9L906.6 670.9L900.7 670.5M900.7 675.6L906.8 675.6L906.8 670.9M914.4 670.9L919.1 674.0L916.8 678.7L919.1 681.9L918.7 686.9L911.3 688.5L912.5 691.3L908.9 693.6L905.8 694.8M925.8 672.8L935.2 665.8L933.2 670.9L932.0 678.3L925.8 687.3L922.2 696.4L918.7 698.7L913.6 697.5L910.1 702.3M935.2 665.8L938.7 659.5L952.0 661.1L958.3 659.5L969.7 659.5M923.0 650.0L935.2 648.1L936.7 644.1L952.0 636.5M957.1 645.3L966.1 642.1L972.0 642.9L977.9 640.9L983.8 640.9L989.2 633.3L992.4 631.3L995.1 639.3L995.9 642.1L996.7 637.7L999.4 632.9L1003.7 629.3L1005.3 622.9L1004.9 620.0L1007.3 611.9L1013.5 607.8M1005.3 622.9L1010.8 620.4L1015.1 621.7L1022.2 623.7L1028.4 630.1L1031.2 629.3M1028.4 630.1L1026.1 636.1L1030.4 636.3L1031.8 634.1M1030.4 636.3L1030.8 642.1L1034.7 644.1L1046.4 648.1L1050.4 648.1L1038.6 659.9L1030.8 661.1L1026.9 663.8L1026.5 664.0L1022.2 663.0L1017.1 666.2L1011.6 665.4L1003.3 662.0L1003.0 661.5L998.3 653.2L991.6 648.4L995.9 642.1M1026.5 664.0L1022.9 668.5L1022.9 679.5L1022.9 683.0L1025.3 686.0M1003.0 661.5L995.5 663.0L997.5 665.8L999.0 673.6L995.5 678.7M995.5 663.0L991.6 664.2L983.4 665.8L978.7 661.8L969.7 659.5M995.1 683.4L1009.6 691.3L1010.0 693.2L1015.9 697.9M983.4 665.8L984.9 670.9L979.8 676.4L978.3 681.5L978.3 685.0L981.8 683.6L995.1 683.4M978.3 685.0L975.9 690.1L976.7 692.4L977.1 697.0M981.8 683.6L983.0 688.5L981.8 688.9L981.4 693.2L977.5 697.0M975.9 690.1L981.8 688.9M983.0 711.7L991.2 716.5L995.1 716.9M999.0 725.1L1011.2 724.1L1020.6 720.9M991.2 716.5L992.8 722.1L992.4 728.9L990.4 733.3L992.4 734.9L997.1 736.5L996.7 742.2L1000.2 747.5L1003.0 742.6L1002.6 736.9L997.9 732.9L997.9 725.3M983.0 711.7L975.5 712.9L973.6 716.1L974.4 718.9L974.7 721.7L973.6 726.1L975.9 728.5L979.1 727.5L979.1 732.7L975.5 731.7L968.9 725.3L961.4 723.7L957.9 724.9L956.3 722.5L956.3 730.9L948.5 730.9L948.5 743.8L954.0 749.6L961.2 750.4L968.1 751.0L975.5 743.0L981.4 741.4L980.6 738.1L992.4 734.9M910.1 702.3L913.2 702.7L927.3 702.7L928.9 707.8L938.3 707.0L938.7 710.9L947.7 708.2L947.7 716.9L949.7 723.7L956.3 722.5M908.3 748.1L916.8 748.8L934.4 748.8L946.1 751.0L954.0 749.6M944.6 752.5L944.6 767.9L940.7 767.9L940.7 779.9L940.7 795.6L930.5 797.0L926.8 796.5M944.6 752.5L954.0 751.2L961.2 750.4M940.7 779.9L943.4 789.0L948.5 788.1L952.4 782.0L962.6 783.3L967.7 775.1L973.2 770.4L977.3 768.7L970.8 761.6L965.0 756.2L961.2 750.4M977.3 768.7L984.9 769.6L989.6 765.0L991.6 758.7L990.4 754.9L991.6 748.3L985.7 743.8L981.4 741.4M984.9 769.6L987.7 778.6L987.7 784.6L988.1 788.6L991.2 788.8M968.1 801.0L970.4 797.9L974.4 796.5L977.5 800.1L976.3 802.8L972.4 805.5L969.3 804.2L968.1 801.0M983.0 788.6L984.1 784.6L987.3 784.6L988.1 788.6L985.3 790.8L983.0 788.6M827.4 498.4L830.2 497.3L836.4 498.1L838.0 499.9L835.3 503.1L834.9 509.8L832.9 510.3L834.9 517.3L833.3 522.3M855.2 490.6L859.6 493.1L865.0 494.1L869.0 495.2L874.8 495.7M872.1 445.8L874.8 448.3L878.8 452.6L881.5 453.8L885.0 455.6L887.4 455.9L894.4 458.6L892.1 466.9L886.2 474.9L888.9 476.0L889.7 476.6L888.2 481.1L889.7 486.0L891.7 488.2M887.4 455.9L886.2 452.0L885.8 448.0L884.6 447.7L881.9 443.9L875.6 443.9M885.8 448.0L886.6 443.3L885.8 441.1L888.9 440.5L889.9 437.6L890.5 432.4M892.1 466.9L896.0 466.3L899.9 467.5L899.5 470.1L903.4 471.2L903.0 472.9L898.7 473.2L895.2 473.5L889.7 476.6M899.9 467.5L903.4 467.5L910.1 466.9L913.2 466.3L912.5 463.4L916.4 461.0L921.1 458.6L928.5 460.4L929.7 464.5L926.9 470.3L925.4 472.1L919.5 473.8L916.0 473.2L910.9 472.1L903.4 471.2M916.4 461.0L911.3 456.2L910.1 450.8L918.3 446.4L920.3 447.4L926.2 448.6L931.6 450.8L936.2 455.6L929.7 459.5L928.5 460.4M917.9 427.8L918.7 432.4L919.9 440.1L920.3 447.4M896.0 421.1L899.5 421.4M936.2 455.6L941.1 457.4L950.5 458.0L949.3 462.2L942.6 461.6L936.0 465.7L929.7 464.5M950.5 458.0L954.4 450.2L956.7 447.7L954.8 443.3L954.8 436.3L955.9 427.8L954.4 427.1L951.6 424.4L939.9 424.1M951.6 424.4L951.6 420.4L945.8 418.7L944.8 418.3M954.4 427.1L963.0 425.1L966.5 415.6L960.2 412.1L948.5 410.6L944.8 412.8M966.5 415.6L972.6 412.4L970.8 403.5L964.2 400.2L957.5 400.2M970.8 403.5L969.7 395.3L972.4 388.5M954.8 443.3L962.2 440.8L971.2 442.7L982.2 444.6L986.9 439.5L989.6 432.4L984.9 428.5L983.0 420.4L972.6 412.4M949.3 462.2L952.0 464.5L959.9 466.3L966.5 463.1L970.0 462.2L976.7 465.1L979.8 473.8L975.5 480.0L972.8 478.8L972.8 473.2L966.5 463.1M972.8 478.8L978.5 480.2M952.0 464.5L945.0 474.3L941.8 475.5L936.4 476.6L930.1 476.0L926.9 473.2L925.4 472.1M941.8 475.5L946.1 482.2L950.5 483.3L951.2 486.0L958.3 488.5L968.1 486.3L974.4 488.5M951.2 486.0L950.1 493.6L952.0 501.3L957.5 500.5L964.2 499.4L965.7 501.5L964.2 504.4M964.2 499.4L970.0 497.8L972.0 497.8M936.4 476.6L938.3 480.5L936.7 482.2L939.1 487.1L937.5 489.8L941.8 493.6L943.0 498.4L942.6 502.6L944.6 503.9L952.0 501.3M942.6 502.6L941.4 510.0M938.3 498.6L941.8 493.6M934.6 495.2L937.5 489.8M916.0 478.8L922.2 479.1L923.8 474.9L926.9 473.2M924.0 480.5L924.0 482.7L926.2 486.0L931.3 492.5L934.6 495.2M924.0 480.5L928.9 480.5L936.7 482.2M986.9 439.5L995.5 438.2L1001.4 450.2L1011.2 453.2L1019.4 455.0L1018.2 465.1L1012.4 466.9L1012.0 469.8M881.9 375.9L881.9 375.9M907.0 391.6L908.5 385.4L910.9 375.9L909.7 370.2L910.1 359.2L916.8 350.4L919.1 338.5L919.1 330.9L925.0 317.0L932.4 311.8L933.2 306.5L940.7 307.6L942.6 300.5M942.6 300.5L945.8 297.8L950.1 304.3L954.8 312.8L954.4 320.0L956.3 324.0L956.9 333.8M942.6 300.5L946.9 297.8L955.2 303.3L960.2 305.4L963.4 301.1L964.2 293.3L971.6 288.8L975.9 292.2L975.5 300.5M975.5 300.5L973.6 302.2L974.0 309.7L979.8 314.9L976.3 323.0L980.2 334.7L978.3 342.2L981.8 348.6L979.8 353.1L986.1 360.0L977.9 373.4L971.2 379.5M975.5 300.5L983.4 295.6L983.0 292.2M964.2 504.4L966.5 501.5L965.7 499.4M1003.9 528.9L1006.1 524.2L1011.2 524.2L1019.0 524.2L1028.4 522.8L1037.8 522.5L1034.7 511.3L1037.8 509.8L1033.1 502.6L1025.1 500.5M1033.1 502.6L1038.6 501.5L1044.5 498.4L1052.7 498.6M1044.5 498.4L1037.8 494.7L1033.9 494.7L1024.9 491.5L1019.0 490.4M1038.6 501.5L1039.4 503.1L1044.9 512.3L1044.5 513.8L1037.8 509.8M1044.5 513.8L1050.4 510.3L1053.9 516.1M1037.8 522.5L1040.6 528.1L1043.7 529.1L1040.2 537.7L1042.9 542.4L1049.6 551.6L1052.3 556.2M1028.4 522.8L1023.7 526.2L1022.9 535.8L1014.3 540.5L1015.9 546.1L1020.6 547.0L1026.9 551.2L1037.4 559.8L1044.5 560.2L1049.2 556.0L1050.4 556.2M1044.5 560.2L1048.0 560.7L1049.2 562.9L1051.9 562.9M1001.8 541.2L1005.7 545.6L1014.3 540.5M1003.3 534.6L1005.7 536.7L1002.6 540.5L1001.8 541.2L999.8 541.9M996.5 550.3L999.0 558.4M1001.4 545.2L1001.4 549.3L999.4 558.2L1003.7 559.8L1009.2 556.2L1011.2 553.9L1007.3 549.3L1015.9 546.1M1003.7 559.8L1006.1 556.9M1037.4 559.8L1020.6 547.0M1066.0 603.6L1077.8 599.5L1080.3 591.1L1078.6 588.1L1068.4 587.1L1064.5 581.7L1063.3 580.0M1078.6 588.1L1080.9 581.7L1082.1 579.4L1083.1 578.3M1031.6 613.9L1031.6 610.2L1036.3 610.2L1045.3 611.1L1048.4 611.9L1051.1 607.0L1066.0 603.6L1070.3 613.3M1061.3 579.4L1062.9 580.0M1053.9 516.1L1046.4 512.3M1073.5 521.5L1077.8 518.3L1085.6 517.3L1092.7 520.3L1102.1 525.2L1101.7 531.5L1099.3 537.2L1100.9 549.3L1104.4 551.6L1100.9 557.1L1104.4 560.7L1108.4 564.3L1109.9 568.7L1108.4 571.3L1103.6 577.4M1100.9 557.1L1107.2 558.9L1113.8 558.4L1122.1 556.9L1122.5 552.1L1129.5 548.0L1133.8 547.5L1136.2 537.7L1140.9 537.2L1142.8 531.5L1141.3 527.6L1152.2 524.0L1155.8 522.0L1150.3 521.0L1143.6 524.7L1142.4 518.8L1137.3 520.3L1134.6 522.3L1128.7 523.3L1122.8 521.5L1119.3 522.0L1116.2 523.7L1109.5 528.9L1102.1 530.1L1102.1 525.2M1122.8 521.5L1123.2 518.3L1119.3 516.8L1114.2 513.6L1107.2 508.2L1104.8 502.0L1097.8 501.0L1097.0 496.3L1091.9 493.6L1087.2 496.8L1081.7 501.5L1081.7 481.6L1091.9 478.3L1101.3 484.9L1105.2 489.8L1116.6 488.8L1121.3 492.5L1120.9 497.8L1128.7 502.6L1138.5 497.8L1140.5 496.3L1137.3 500.5L1142.8 500.5L1148.7 503.9L1144.4 505.7L1138.5 508.2L1138.9 507.2L1133.8 504.1L1132.6 507.2L1138.5 510.3L1151.1 511.3L1151.4 515.3L1155.8 522.0M1127.9 522.3L1129.1 516.3L1128.7 510.8L1132.6 507.2M1081.7 501.5L1077.0 497.8L1071.9 497.3L1068.0 499.2M1140.5 496.3L1150.3 492.5L1153.4 491.5L1159.3 493.1L1172.6 493.6L1176.5 496.8M1151.1 511.3L1159.7 506.2L1164.0 503.1L1169.5 501.0L1176.5 496.8M1054.3 473.2L1052.3 465.7L1046.4 464.5L1044.5 462.2L1047.2 457.4L1045.7 453.2L1052.3 452.6L1053.1 448.9L1061.3 442.0L1071.9 443.9L1077.8 447.1L1087.6 446.4L1091.9 446.4L1095.4 449.2L1103.3 447.7L1097.4 440.8L1101.3 438.2L1100.5 433.7L1102.1 427.1L1117.0 423.8L1129.5 420.4L1139.7 418.3L1141.3 425.8L1149.9 427.1L1162.0 425.8L1163.2 424.4L1167.5 431.7L1175.7 447.7L1181.6 448.0L1189.1 446.4L1196.1 455.0L1204.3 458.0L1206.3 457.4M1176.5 496.8L1176.9 492.5L1178.9 491.5L1177.3 483.8L1185.9 479.4L1184.8 478.3L1187.5 469.2L1197.3 470.1L1198.1 462.2L1202.4 458.6L1206.3 457.4L1207.1 461.0L1214.9 465.1L1218.8 476.0L1218.4 480.5L1228.6 481.9L1236.1 485.5L1240.0 494.1L1254.1 494.4L1269.8 498.9L1273.7 499.9L1291.3 495.5L1300.7 488.8L1298.8 484.9L1307.4 483.0L1322.3 472.6L1332.1 472.1L1326.6 465.7L1314.8 465.1L1319.5 453.5M1206.3 457.4L1213.7 454.4L1223.9 447.7L1243.5 454.1L1247.4 449.5L1245.5 446.4L1249.8 439.5L1262.7 444.6L1263.1 448.9L1281.5 451.4L1287.4 456.8L1296.0 457.7L1305.4 453.8L1310.1 450.8L1319.5 453.5L1323.8 455.6L1329.7 450.5L1335.6 436.3L1332.5 431.7L1346.6 430.1L1354.4 433.4L1361.8 451.4L1374.4 459.2L1374.8 466.3L1381.4 466.3L1390.1 462.2L1387.3 468.0L1383.8 481.1L1378.7 480.0L1375.6 482.5L1376.7 489.8L1374.0 495.7M1374.0 495.7L1371.2 492.5L1364.6 501.0L1359.5 498.9L1356.0 503.6L1349.7 508.7M1356.4 519.6L1360.3 516.8L1365.2 515.3M1155.8 522.0L1159.5 525.0L1167.1 530.5L1171.4 536.0L1170.8 544.3L1169.5 544.7L1170.8 550.3L1179.7 555.3L1176.1 561.4L1180.4 563.4L1188.7 568.0L1194.2 568.7L1198.5 571.3L1207.5 572.2L1207.5 565.6L1210.2 564.9L1210.6 568.2L1214.1 570.9L1223.1 570.2L1221.2 566.0L1225.1 566.0L1231.4 560.2L1238.8 558.9L1243.5 564.0L1243.9 565.6M1179.7 555.3L1184.0 554.8L1191.8 561.1L1199.2 565.6L1207.5 565.6M1210.6 568.2L1213.4 564.3L1221.2 566.0M1103.6 577.4L1103.6 577.4M1129.5 583.9L1131.9 581.3L1140.5 580.9L1136.6 571.8L1138.1 565.1L1147.9 560.7L1154.6 551.2L1152.2 544.7L1157.7 545.6L1163.2 537.7L1167.1 530.5M1207.5 572.2L1208.3 578.7L1210.0 581.3L1207.5 580.4L1210.0 586.0L1211.2 590.7M1208.3 574.8L1214.3 577.0L1224.3 578.3L1223.5 581.7L1219.6 584.7L1221.2 587.3L1223.9 583.9L1225.1 591.5L1223.5 594.0L1224.3 596.6M1225.1 591.5L1227.5 589.8L1228.2 582.6L1233.3 576.5L1235.3 570.9L1242.7 569.1L1243.9 565.6L1249.0 566.9L1249.0 574.6L1244.5 579.4L1244.3 582.8L1249.8 586.0L1252.1 587.3L1251.0 590.5L1258.6 593.0L1254.5 598.2L1256.5 601.6L1259.2 601.4L1258.6 609.8L1262.3 607.0L1265.5 608.0L1269.8 606.5L1272.7 609.8L1272.7 613.9L1276.0 617.2L1275.6 622.1L1274.5 622.9L1265.9 623.1L1263.9 625.7L1265.5 633.3M1258.6 593.0L1261.2 594.7L1260.8 589.0L1262.5 589.4L1263.9 592.4L1265.9 593.2L1269.8 597.8L1273.3 599.5L1269.4 602.4L1274.5 604.9L1280.0 611.9L1283.9 619.6L1283.5 621.3L1282.7 622.1L1275.6 622.1M1262.5 589.4L1269.4 588.6L1274.9 585.4L1280.4 587.3L1280.4 591.1L1285.4 593.2M1283.5 621.3L1283.9 626.5L1283.1 630.9L1276.8 633.7L1278.4 636.9L1271.5 638.5M1254.5 598.2L1252.1 598.2L1246.3 600.3L1245.1 606.1L1249.0 614.8L1247.0 619.6L1251.0 629.7L1252.5 632.9L1249.0 639.3M1254.5 654.2L1257.6 655.0L1258.4 657.3L1262.3 655.2M1291.9 671.5L1291.7 675.6L1295.6 676.2L1300.3 675.6L1303.1 673.6L1308.6 674.0L1312.1 671.7L1313.3 668.5L1315.2 663.0L1321.5 662.4L1324.2 663.0M1309.3 661.5L1312.9 660.7L1314.2 662.6L1312.9 660.3M1414.7 689.7L1414.7 715.3M1348.1 716.3L1351.9 714.5L1352.4 716.5" fill="none" stroke="#d19fd6" stroke-width="1" stroke-opacity="0.9" stroke-linejoin="round"/>
</g>
<g stroke="#151515" stroke-width="0.7" stroke-linejoin="round"><path d="M505.5 605.8L492.6 605.8L484.0 602.6L475.4 594.0L471.1 580.0L471.1 567.1L474.3 557.4L482.9 548.8L494.8 544.5L507.7 542.3L517.4 541.2L524.9 543.4L533.5 541.2L540.0 535.8L544.3 526.2L550.8 515.4L556.1 510.0L560.5 511.1L563.7 502.5L570.1 493.8L578.8 487.4L584.1 479.8L588.5 476.6L592.8 479.8L591.7 486.3L586.3 492.8L583.1 494.9L572.3 504.6L566.9 513.2L564.8 526.2L561.5 532.6L550.8 540.2L542.1 547.7L542.1 557.4L537.8 558.5L529.2 554.2L520.6 553.1L507.7 555.2L494.8 556.3L486.2 561.7L480.8 571.4L479.7 582.1L481.8 595.1L488.3 604.8L496.9 605.8L505.5 603.7Z" fill="#e9708e"/><path d="M475.8 591.8L474.5 577.8L475.8 567.1L480.6 559.8L489.2 553.5L501.2 549.4L516.3 547.7L529.2 548.1L537.8 549.8L542.1 544.9L550.8 535.2L558.3 526.6L561.1 518.0L563.3 514.3L564.8 522.9L562.0 531.5L551.8 539.5L543.2 547.7L542.6 554.2L537.8 552.4L529.2 550.7L516.3 550.7L501.2 552.4L490.9 556.3L483.6 563.2L479.7 571.8L478.4 582.1L480.6 594.0L486.6 603.0L483.6 602.0L478.0 596.8Z" fill="#8d5a9f"/><path d="M537.8 552.4L542.6 554.2L542.1 558.0L537.8 558.9L529.2 554.6L529.2 550.7Z" fill="#f3a3b4"/><path d="M479.3 571.4L482.9 563.8L485.7 562.3L481.0 571.8L480.1 582.1L482.3 595.1L480.1 594.0L478.0 582.1Z" fill="#f3a3b4"/><path d="M537.8 560.6L544.3 559.5L547.5 567.1L548.2 574.6L544.3 578.9L540.0 573.5L537.8 567.1Z" fill="#5f9563"/><path d="M503.4 557.4L507.7 555.7L513.1 557.4L512.0 559.8L505.5 559.8Z" fill="#5f9563"/><path d="M556.1 534.8L562.6 528.3L565.8 530.5L560.5 535.8Z" fill="#5f9563"/><path d="M575.5 500.3L582.0 494.9L585.7 497.7L584.8 501.4L578.8 502.5Z" fill="#8d5a9f"/><path d="M601.4 479.8L607.8 475.5L615.4 473.4L624.0 472.3L626.1 475.5L619.7 479.8L612.1 482.0L606.8 486.3L603.5 487.8Z" fill="#e9708e"/><path d="M603.5 484.2L612.1 479.8L620.8 477.7L619.7 480.5L612.1 482.6L606.3 487.0L603.5 487.8Z" fill="#8d5a9f"/><path d="M620.8 474.5L625.1 470.2L627.9 474.5L624.0 478.8Z" fill="#e9708e"/><path d="M629.4 464.8L634.8 457.2L642.3 465.8Z" fill="#e9708e"/><path d="M641.2 466.9L647.7 462.6L653.1 460.5L655.2 465.8L652.0 470.2L646.6 466.9L643.4 470.2Z" fill="#e9708e"/><path d="M650.9 468.0L655.2 466.3L655.2 471.2L652.4 471.9Z" fill="#8d5a9f"/><path d="M419.8 570.3L422.6 568.1L428.0 576.8L424.1 577.8Z" fill="#8d5a9f"/><path d="M422.6 580.0L426.9 577.8L433.4 584.7L431.9 586.9L425.8 582.6Z" fill="#e9708e"/><path d="M433.4 572.5L439.8 578.9L446.3 582.1L447.8 588.6L443.1 584.3L436.6 577.8Z" fill="#8d5a9f"/><path d="M447.8 597.2L451.7 596.1L462.5 604.8L473.2 611.2L477.5 614.5L464.6 610.1L453.8 604.8L449.1 600.5Z" fill="#8d5a9f"/><path d="M530.3 590.8L534.6 587.5L542.1 586.5L550.8 588.6L554.0 591.8L548.6 590.8L540.0 589.0L533.5 590.8Z" fill="#5f9563"/><path d="M550.8 590.8L557.2 592.9L565.8 596.1L571.2 598.9L563.7 599.4L558.3 598.3L554.0 595.1Z" fill="#e9708e"/><path d="M575.5 600.5L583.1 599.4L590.6 602.6L593.8 605.4L587.4 606.9L580.9 606.3L576.6 604.8Z" fill="#f3a3b4"/><path d="M570.1 605.0L576.2 604.1L576.6 606.3L571.2 606.9Z" fill="#e9708e"/><path d="M555.5 606.3L560.5 605.4L562.0 607.6L557.2 608.4Z" fill="#5f9563"/><path d="M598.6 605.4L604.6 605.0L605.7 606.9L599.2 607.6Z" fill="#5f9563"/><path d="M612.1 637.1L617.5 636.4L618.6 639.2L613.2 639.9Z" fill="#e9708e"/><path d="M588.5 633.8L593.8 634.5L593.4 636.2L588.7 635.6Z" fill="#e9708e"/><path d="M577.7 631.3L583.1 631.7L582.6 633.2L577.9 632.8Z" fill="#e9708e"/><path d="M1171.1 611.1L1174.3 607.8L1181.8 604.6L1189.4 598.2L1195.8 591.7L1203.4 586.3L1212.0 583.7L1220.6 582.0L1231.8 577.7L1233.5 579.8L1229.2 589.5L1232.5 598.2L1236.8 607.8L1239.6 612.2L1236.8 615.4L1231.4 614.3L1230.3 606.8L1226.0 598.2L1221.7 590.6L1216.3 588.5L1207.7 590.6L1201.2 596.0L1194.8 602.5L1188.3 607.8L1180.8 614.3L1176.5 621.8L1174.3 630.5L1175.4 638.0L1172.2 639.5L1168.5 632.6L1170.0 624.0L1170.6 615.4Z" fill="#e9708e"/><path d="M1174.3 630.5L1175.4 622.9L1179.7 615.4L1187.2 608.9L1193.7 603.5L1199.5 596.4L1205.5 590.6L1215.2 587.8L1216.3 590.0L1207.7 592.1L1201.2 597.7L1194.8 604.2L1187.9 610.0L1181.4 615.8L1176.9 623.6L1175.4 636.9L1173.7 638.0Z" fill="#8d5a9f"/><path d="M1161.0 641.2L1166.8 642.3L1170.0 643.4L1165.7 647.0L1162.5 645.5Z" fill="#e9708e"/><path d="M1175.0 643.0L1177.5 640.8L1181.4 647.7L1182.5 650.9L1174.3 649.4Z" fill="#e9708e"/><path d="M1125.4 580.9L1129.1 582.0L1134.5 586.3L1132.3 587.8L1128.0 585.2Z" fill="#e9708e"/><path d="M1132.3 590.0L1137.7 587.8L1144.2 589.1L1144.8 592.8L1139.8 596.4L1134.5 593.8Z" fill="#e9708e"/><path d="M1335.8 543.2L1338.6 548.6L1341.2 552.9L1340.1 557.2L1334.8 565.8L1330.5 574.5L1326.1 579.8L1315.4 584.2L1304.6 588.5L1293.8 591.7L1285.2 593.8L1279.8 597.1L1275.5 603.5L1278.8 611.1L1285.2 618.6L1289.5 626.2L1290.0 631.5L1286.9 635.4L1284.1 631.5L1280.9 624.0L1275.5 615.4L1270.1 610.0L1266.9 603.5L1268.0 596.0L1272.3 590.6L1278.8 586.3L1289.5 584.2L1300.3 580.9L1311.1 577.7L1317.5 572.3L1322.9 561.5L1326.1 550.8L1331.5 546.5Z" fill="#e9708e"/><path d="M1338.0 551.8L1332.6 559.4L1328.3 569.1L1322.9 575.5L1313.2 580.9L1302.5 584.8L1291.7 587.8L1283.1 590.6L1276.6 594.3L1272.3 600.3L1272.3 604.6L1274.9 611.1L1280.5 618.6L1285.2 626.2L1286.9 632.6L1289.5 629.4L1289.1 625.7L1284.8 618.2L1278.3 610.6L1275.1 603.5L1279.4 597.1L1284.8 593.8L1293.4 591.7L1304.2 588.9L1314.9 584.6L1325.7 580.3L1330.0 574.9L1334.3 566.3L1339.7 557.2L1340.8 553.4Z" fill="#8d5a9f"/><path d="M1325.1 580.5L1329.4 575.5L1331.5 576.6L1326.6 582.0L1315.4 586.3L1304.6 590.0L1304.2 588.7L1314.3 584.8Z" fill="#f3a3b4"/><path d="M1287.4 602.5L1292.8 599.2L1296.4 601.4L1294.9 605.7L1289.5 606.3Z" fill="#5f9563"/><path d="M1291.3 594.9L1293.8 592.8L1294.9 598.2L1292.1 598.6Z" fill="#5f9563"/><path d="M1371.8 723.5L1376.8 723.5L1376.8 725.7L1372.2 725.9Z" fill="#e9708e"/><path d="M1409.6 498.4L1414.9 491.1L1416.2 480.1L1419.8 479.4L1419.8 486.2L1417.4 493.5L1413.7 499.6Z" fill="#e9708e"/><path d="M1410.1 503.3L1414.9 500.9L1417.9 508.2L1416.2 514.3L1410.1 511.8Z" fill="#e9708e"/><path d="M1395.4 525.3L1405.2 517.9L1412.5 513.1L1415.4 515.5L1412.5 522.8L1405.2 527.7L1397.9 530.1Z" fill="#8d5a9f"/><path d="M1395.4 530.6L1407.6 526.5L1413.7 525.3L1412.0 532.6L1402.7 535.0L1395.4 533.8Z" fill="#f3a3b4"/><path d="M1371.0 539.9L1379.6 532.6L1395.4 530.1L1394.2 535.0L1383.2 538.7L1375.9 542.4Z" fill="#e9708e"/><path d="M1382.0 530.1L1393.0 529.7L1393.0 533.8L1383.2 534.5Z" fill="#8d5a9f"/><path d="M1372.2 542.4L1377.1 539.9L1378.3 546.0L1374.7 549.7L1372.2 547.2Z" fill="#5f9563"/><path d="M1380.8 539.4L1385.7 537.5L1386.1 540.4L1382.0 542.4Z" fill="#5f9563"/><path d="M1351.5 517.5L1358.8 516.7L1360.0 521.6L1367.3 520.4L1368.6 527.7L1358.8 530.1L1357.6 524.0Z" fill="#e9708e"/><path d="M1355.9 532.6L1368.1 527.2L1368.6 531.4L1357.6 535.5Z" fill="#8d5a9f"/><path d="M1054.4 726.9L1056.4 728.7L1057.9 732.8L1059.5 739.5L1057.9 742.1L1056.9 746.2L1055.4 753.3L1053.3 761.5L1050.8 769.7L1048.2 777.9L1043.6 781.5L1039.0 782.6L1034.9 779.5L1032.8 774.9L1031.3 769.7L1032.3 764.6L1034.9 760.0L1035.9 755.4L1034.4 749.2L1035.9 744.1L1040.5 741.5L1045.6 739.0L1049.7 733.8L1052.3 729.7Z" fill="#e9708e"/><path d="M1035.9 744.1L1040.5 741.5L1045.6 739.0L1049.7 733.8L1052.3 729.7L1054.4 730.8L1056.4 728.7L1057.9 732.8L1059.5 739.5L1057.9 742.1L1056.9 746.2L1055.4 753.3L1053.3 761.5L1050.8 767.2L1048.2 765.6L1047.2 760.5L1048.2 754.4L1047.2 750.3L1043.6 748.2L1039.0 747.2Z" fill="#8d5a9f"/><path d="M1031.3 769.7L1032.8 766.7L1034.4 770.8L1035.4 774.9L1033.8 776.7L1032.3 773.8Z" fill="#8d5a9f"/><path d="M1020.5 733.3L1021.2 737.9L1019.0 743.1L1014.9 746.7L1008.7 749.2L1004.6 752.3L1000.5 756.4L997.9 759.0L999.0 763.6L1000.5 768.2L1001.0 772.8L998.5 769.7L995.4 765.6L993.3 761.5L994.9 758.5L1000.5 755.4L1004.6 749.2L1009.7 743.1L1014.9 737.4Z" fill="#e9708e"/><path d="M1361.3 734.6L1360.8 737.2L1356.7 739.7L1352.6 743.8L1349.0 748.5L1347.9 754.1L1343.8 760.3L1342.8 766.4L1337.2 769.5L1331.0 771.5L1326.9 774.6L1325.4 779.7L1319.7 779.2L1315.1 782.3L1313.1 787.9L1309.5 791.5L1306.9 787.9L1308.5 783.3L1305.9 780.8L1306.4 775.6L1307.9 771.5L1308.5 767.4L1313.6 764.4L1319.7 761.3L1324.9 759.7L1331.0 758.7L1336.2 756.2L1339.7 752.1L1340.8 746.9L1343.3 744.4L1345.4 747.4L1347.4 742.8L1350.5 739.7L1351.5 736.7L1355.6 734.6L1358.7 733.8Z" fill="#e9708e"/><path d="M1307.9 771.5L1308.5 767.4L1313.6 764.4L1319.7 761.3L1324.9 759.7L1331.0 758.7L1336.2 756.2L1339.7 752.1L1340.3 755.1L1338.2 759.2L1334.1 763.3L1329.0 764.4L1323.8 765.9L1319.7 769.5L1313.6 771.0L1310.0 772.8Z" fill="#8d5a9f"/><path d="M1372.1 723.3L1376.2 723.5L1376.7 725.4L1373.1 725.9Z" fill="#e9708e"/><path d="M503.5 605.0L507.2 599.3L508.7 596.0L511.7 617.7L518.5 621.5L524.5 624.5L526.0 630.5L527.5 635.0L533.5 639.5L535.0 638.0L534.2 632.0L532.0 627.5L530.5 623.0L526.7 619.2L520.0 617.0L515.5 614.0L512.5 612.5L510.2 608.0L508.0 611.0L505.0 606.5Z" fill="#e9708e"/><path d="M505.0 605.0L508.0 611.0L511.7 617.7L518.5 621.5L524.5 624.5L526.0 630.5L527.5 635.0L533.5 639.5L535.0 638.0L534.5 630.5L534.2 626.0L530.5 622.2L526.7 619.2L520.0 617.0L515.5 614.0L512.8 612.5L510.2 608.0L508.3 602.7Z" fill="#e9708e"/><path d="M508.0 597.5L510.2 594.8L513.2 594.2L514.7 599.0L515.8 605.0L515.2 611.0L512.5 612.5L510.2 608.0L508.3 602.7Z" fill="#8d5a9f"/><path d="M513.2 594.2L517.7 593.0L519.2 596.7L517.7 602.0L516.2 605.0L515.2 599.7Z" fill="#f3a3b4"/><path d="M518.2 593.3L521.5 592.7L522.2 596.0L520.0 597.5L518.8 596.0Z" fill="#5f9563"/><path d="M516.2 605.0L517.7 602.3L519.2 605.0L517.7 611.0L515.8 611.7Z" fill="#e9708e"/><path d="M516.2 616.2L523.0 615.8L530.5 617.0L535.7 620.0L536.5 623.7L533.5 623.0L528.2 620.0L521.5 618.5Z" fill="#8d5a9f"/><path d="M532.7 628.2L534.5 626.0L535.0 630.5L533.8 633.5Z" fill="#8d5a9f"/><path d="M1332.7 584.3L1333.9 579.2L1337.2 576.9L1339.5 578.1L1338.9 583.7L1336.1 589.3L1333.9 588.8Z" fill="#5f9563"/><path d="M1333.9 605.1L1338.4 604.0L1341.2 607.4L1341.2 613.0L1338.9 617.6L1338.4 621.5L1340.6 623.2L1344.0 624.3L1347.4 626.0L1348.5 627.7L1345.1 627.7L1341.8 626.6L1338.9 625.5L1337.2 628.8L1336.1 631.1L1333.9 627.7L1332.2 623.2L1331.0 617.6L1331.0 614.2L1333.3 609.7Z" fill="#5f9563"/><path d="M1349.7 630.0L1352.5 629.4L1353.6 632.2L1353.0 637.9L1355.3 641.3L1354.2 643.0L1351.9 639.0L1350.2 634.5Z" fill="#5f9563"/><path d="M1337.2 630.5L1339.5 630.0L1340.6 632.8L1338.4 633.4Z" fill="#5f9563"/><path d="M1344.6 632.2L1347.4 631.7L1348.0 633.4L1345.1 633.6Z" fill="#5f9563"/><path d="M1339.5 635.1L1342.9 633.9L1343.5 637.3L1340.6 637.9Z" fill="#e9708e"/><path d="M1342.9 637.9L1345.1 637.3L1345.7 642.4L1343.5 643.0Z" fill="#8d5a9f"/><path d="M1345.7 636.7L1346.8 636.2L1348.5 641.3L1347.4 641.8Z" fill="#3a2a3a"/><path d="M1348.5 641.0L1350.8 640.7L1351.0 642.7L1348.8 643.0Z" fill="#5f9563"/><path d="M1347.4 646.9L1350.8 644.7L1355.3 645.2L1357.6 648.6L1355.9 652.0L1351.9 651.4L1348.5 649.2Z" fill="#e9708e"/><path d="M1353.0 643.5L1355.3 643.0L1356.4 645.8L1354.2 645.6Z" fill="#8d5a9f"/><path d="M1324.3 643.0L1325.4 641.8L1332.7 631.3L1333.3 632.2L1326.5 643.0Z" fill="#5a2030"/><path d="M1358.7 571.9L1363.2 569.0L1370.5 562.8L1371.3 563.6L1364.3 570.2L1359.6 572.6Z" fill="#222"/><path d="M1300.0 590.5L1306.8 588.2L1314.7 585.4L1322.6 580.3L1329.3 574.7L1330.5 575.8L1324.3 582.0L1315.8 587.1L1307.3 589.9L1300.0 592.4Z" fill="#5f9563"/><path d="M1090.7 583.7L1093.9 584.9L1096.3 591.1L1094.6 596.0L1091.4 598.5L1090.2 591.1Z" fill="#e9708e"/><path d="M1070.0 628.5L1074.9 628.0L1075.4 630.5L1070.5 631.2Z" fill="#7a1f1f"/><path d="M1502.1 757.6L1503.8 756.9L1515.6 767.9L1514.4 769.6Z" fill="#8d5a9f"/></g><g fill="#111"><circle cx="550.8" cy="571.4" r="0.7"/><circle cx="555.1" cy="569.7" r="0.7"/><circle cx="558.3" cy="571.8" r="0.7"/><circle cx="556.1" cy="577.8" r="0.7"/><circle cx="560.5" cy="576.8" r="0.7"/><circle cx="563.7" cy="581.1" r="0.7"/><circle cx="566.9" cy="582.1" r="0.7"/><circle cx="570.1" cy="584.7" r="0.7"/><circle cx="572.3" cy="588.6" r="0.7"/><circle cx="575.5" cy="590.8" r="0.7"/><circle cx="578.8" cy="593.3" r="0.7"/><circle cx="583.1" cy="592.5" r="0.7"/><circle cx="537.8" cy="590.8" r="0.7"/><circle cx="542.1" cy="591.8" r="0.7"/><circle cx="548.6" cy="600.5" r="0.7"/><circle cx="544.3" cy="599.4" r="0.7"/><circle cx="509.8" cy="588.6" r="0.7"/><circle cx="608.5" cy="545.1" r="0.7"/><circle cx="627.2" cy="487.0" r="0.7"/><circle cx="613.2" cy="604.8" r="0.7"/><circle cx="615.4" cy="609.1" r="0.7"/><circle cx="617.5" cy="612.3" r="0.7"/><circle cx="620.1" cy="615.5" r="0.7"/><circle cx="621.8" cy="619.8" r="0.7"/><circle cx="622.9" cy="624.1" r="0.7"/><circle cx="624.0" cy="628.5" r="0.7"/><circle cx="621.8" cy="632.8" r="0.7"/><circle cx="618.6" cy="634.9" r="0.7"/><circle cx="600.3" cy="631.7" r="0.7"/><circle cx="604.6" cy="632.1" r="0.7"/><circle cx="607.8" cy="631.7" r="0.7"/><circle cx="597.1" cy="630.6" r="0.7"/><circle cx="542.1" cy="627.4" r="0.7"/><circle cx="548.6" cy="625.2" r="0.7"/><circle cx="541.1" cy="629.5" r="0.7"/><circle cx="412.5" cy="605.8" r="0.7"/><circle cx="427.6" cy="602.6" r="0.7"/><circle cx="426.9" cy="604.8" r="0.7"/><circle cx="445.2" cy="593.3" r="0.7"/><circle cx="431.9" cy="570.3" r="0.7"/><circle cx="1223.8" cy="636.9" r="0.7"/><circle cx="1224.9" cy="632.6" r="0.7"/><circle cx="1226.0" cy="628.3" r="0.7"/><circle cx="1227.1" cy="625.1" r="0.7"/><circle cx="1229.2" cy="620.8" r="0.7"/><circle cx="1230.3" cy="614.3" r="0.7"/><circle cx="1147.8" cy="602.5" r="0.7"/><circle cx="1149.5" cy="608.9" r="0.7"/><circle cx="1150.6" cy="615.4" r="0.7"/><circle cx="1147.8" cy="646.0" r="0.7"/><circle cx="1146.3" cy="633.0" r="0.7"/><circle cx="1298.1" cy="615.4" r="0.7"/><circle cx="1300.3" cy="613.2" r="0.7"/><circle cx="1302.5" cy="612.2" r="0.7"/><circle cx="1308.9" cy="638.0" r="0.7"/><circle cx="1312.1" cy="635.8" r="0.7"/><circle cx="1314.3" cy="636.9" r="0.7"/><circle cx="1344.5" cy="579.8" r="0.7"/><circle cx="1347.7" cy="578.8" r="0.7"/><circle cx="1349.8" cy="574.5" r="0.7"/><circle cx="1361.7" cy="572.3" r="0.7"/><circle cx="1366.0" cy="565.8" r="0.7"/><circle cx="1369.2" cy="562.6" r="0.7"/><circle cx="1376.8" cy="573.4" r="0.7"/><circle cx="1371.8" cy="548.6" r="0.7"/><circle cx="1367.1" cy="544.3" r="0.7"/><circle cx="1367.3" cy="564.3" r="0.7"/><circle cx="1369.8" cy="560.7" r="0.7"/><circle cx="1373.4" cy="555.8" r="0.7"/><circle cx="1407.6" cy="537.5" r="0.7"/><circle cx="1408.8" cy="544.8" r="0.7"/><circle cx="1410.5" cy="553.3" r="0.7"/><circle cx="1373.4" cy="520.4" r="0.7"/><circle cx="1353.9" cy="536.2" r="0.7"/><circle cx="1357.6" cy="539.9" r="0.7"/><circle cx="1402.7" cy="516.7" r="0.7"/><circle cx="1421.0" cy="496.5" r="0.7"/><circle cx="1033.1" cy="727.5" r="0.9"/><circle cx="1035.9" cy="727.5" r="0.9"/><circle cx="1038.5" cy="729.9" r="0.9"/><circle cx="1079.3" cy="763.8" r="0.9"/><circle cx="1087.2" cy="760.0" r="0.9"/><circle cx="1110.1" cy="757.9" r="0.9"/><circle cx="1083.4" cy="719.7" r="0.9"/><circle cx="1075.4" cy="742.1" r="0.9"/><circle cx="1017.4" cy="765.1" r="0.9"/><circle cx="1019.8" cy="768.9" r="0.9"/><circle cx="1514.9" cy="738.4" r="0.7"/><circle cx="1517.4" cy="740.9" r="0.7"/><circle cx="1519.8" cy="744.5" r="0.7"/><circle cx="1521.0" cy="749.0" r="0.7"/><circle cx="1524.7" cy="754.4" r="0.7"/><circle cx="1526.5" cy="758.8" r="0.7"/><circle cx="1513.7" cy="761.8" r="0.7"/><circle cx="1519.1" cy="764.7" r="0.7"/><circle cx="1556.7" cy="747.0" r="0.7"/><circle cx="1560.4" cy="750.7" r="0.7"/><circle cx="1562.9" cy="745.0" r="0.7"/><circle cx="1559.2" cy="753.9" r="0.7"/><circle cx="1464.4" cy="580.9" r="0.7"/><circle cx="1514.4" cy="602.3" r="0.7"/><circle cx="1523.0" cy="621.0" r="0.7"/><circle cx="1448.5" cy="644.9" r="0.7"/><circle cx="1455.8" cy="649.8" r="0.7"/><circle cx="1465.7" cy="646.6" r="0.7"/><circle cx="1481.2" cy="651.8" r="0.7"/><circle cx="1517.4" cy="646.1" r="0.7"/><circle cx="1522.3" cy="649.8" r="0.7"/><circle cx="1526.0" cy="655.5" r="0.7"/><circle cx="1431.2" cy="604.3" r="0.7"/><circle cx="1432.5" cy="609.2" r="0.7"/><circle cx="1432.5" cy="615.4" r="0.7"/><circle cx="1431.2" cy="620.3" r="0.7"/><circle cx="1449.2" cy="743.3" r="0.7"/><circle cx="1466.9" cy="763.7" r="0.7"/><circle cx="1471.3" cy="764.2" r="0.7"/><circle cx="1522.5" cy="727.3" r="0.7"/><circle cx="1343.5" cy="580.3" r="0.8"/><circle cx="1347.4" cy="580.9" r="0.8"/><circle cx="1352.5" cy="578.6" r="0.8"/><circle cx="1346.3" cy="574.1" r="0.8"/><circle cx="1349.1" cy="574.1" r="0.8"/><circle cx="1375.6" cy="574.1" r="0.8"/><circle cx="1338.9" cy="596.1" r="0.8"/><circle cx="1339.5" cy="601.2" r="0.8"/><circle cx="1337.2" cy="602.9" r="0.8"/><circle cx="1302.3" cy="612.5" r="0.8"/><circle cx="1309.6" cy="635.6" r="0.8"/><circle cx="1312.4" cy="635.1" r="0.8"/><circle cx="1309.0" cy="639.0" r="0.8"/><circle cx="1315.2" cy="636.7" r="0.8"/><circle cx="1336.1" cy="636.2" r="0.8"/><circle cx="1336.3" cy="641.0" r="0.8"/><circle cx="1331.6" cy="623.2" r="0.8"/><circle cx="1349.7" cy="625.5" r="0.8"/><circle cx="1347.4" cy="628.3" r="0.8"/><circle cx="1353.0" cy="635.1" r="0.8"/><circle cx="1355.9" cy="639.0" r="0.8"/><circle cx="1351.4" cy="644.1" r="0.8"/><circle cx="1313.6" cy="762.3" r="0.6"/><circle cx="1305.4" cy="783.3" r="0.6"/><circle cx="1306.2" cy="785.4" r="0.6"/><circle cx="1307.2" cy="786.4" r="0.6"/><circle cx="1345.4" cy="728.3" r="0.6"/><circle cx="749.5" cy="515.0" r="0.8"/><circle cx="751.0" cy="514.5" r="0.8"/><circle cx="753.0" cy="514.2" r="0.8"/><circle cx="755.5" cy="514.4" r="0.8"/><circle cx="762.3" cy="519.5" r="0.8"/><circle cx="763.4" cy="612.0" r="0.8"/><circle cx="766.3" cy="613.6" r="0.8"/></g>
</svg>
</div></body></html>
